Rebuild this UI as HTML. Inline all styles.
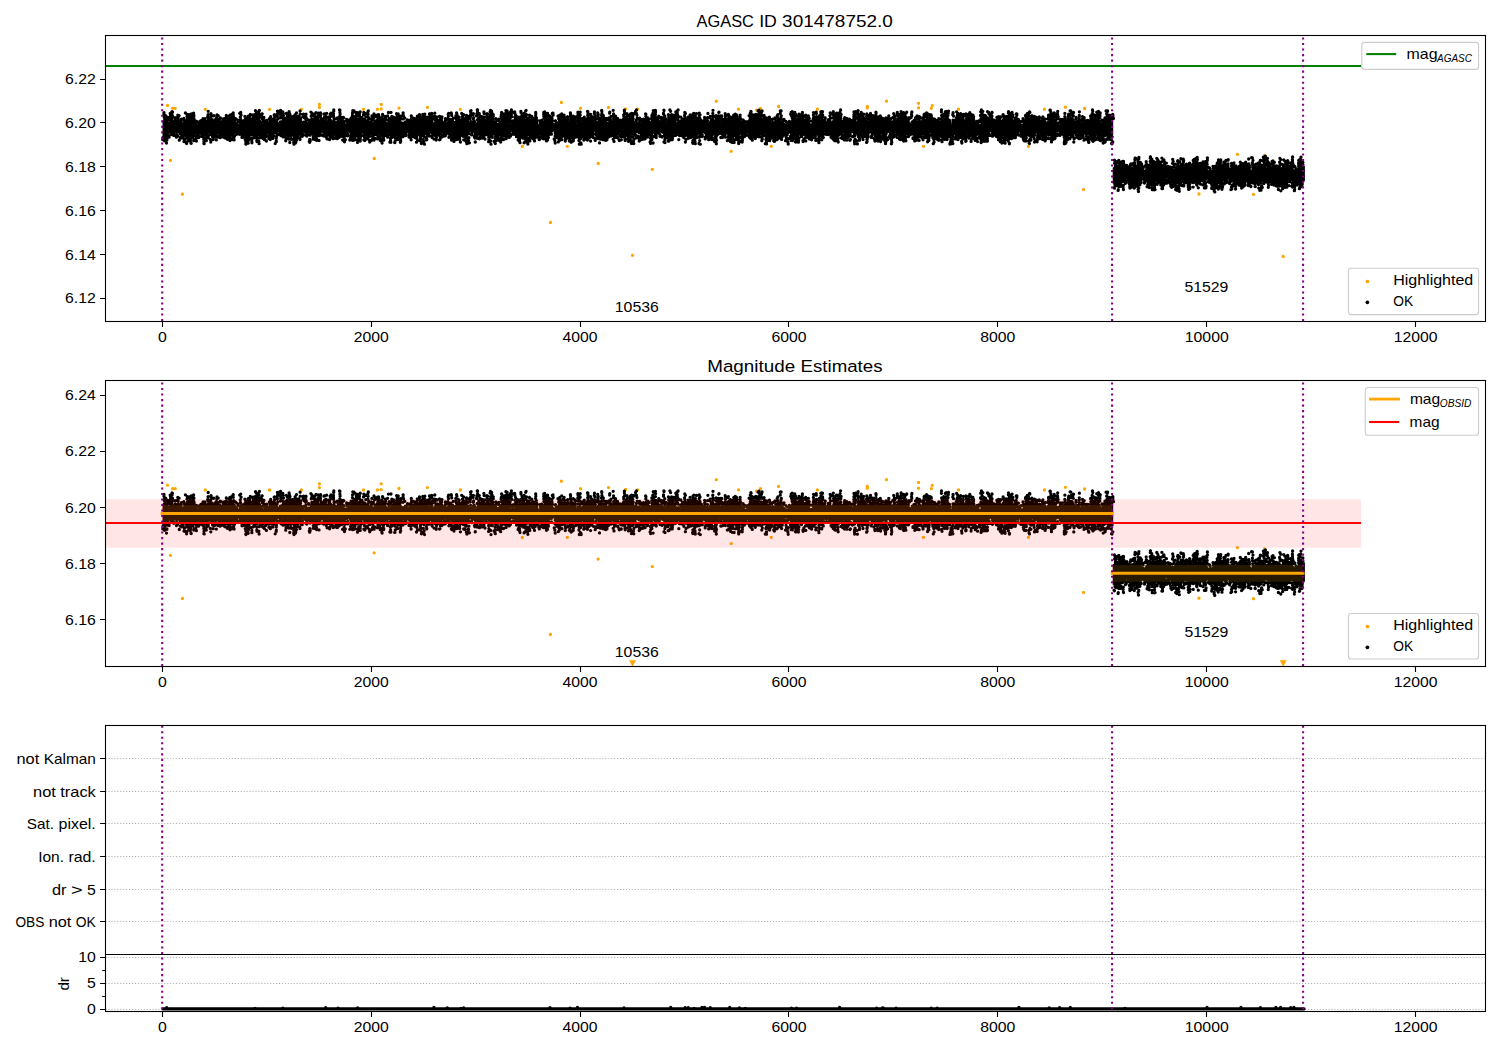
<!DOCTYPE html>
<html><head><meta charset="utf-8"><title>AGASC ID 301478752.0</title>
<style>html,body{margin:0;padding:0;background:#fff}svg{display:block}svg,svg text{font-family:"Liberation Sans",sans-serif}</style></head>
<body>
<svg width="1500" height="1050" viewBox="0 0 1500 1050" font-family="Liberation Sans, sans-serif" font-size="14.5" fill="#000">
<rect width="1500" height="1050" fill="#fff"/>
<defs>
<clipPath id="c0"><rect x="105.5" y="35.5" width="1380.0" height="286.0"/></clipPath>
<clipPath id="c1"><rect x="105.5" y="380.5" width="1380.0" height="286.0"/></clipPath>
<clipPath id="c2"><rect x="105.5" y="725.5" width="1380.0" height="286.0"/></clipPath>
</defs>
<g clip-path="url(#c0)">
<path d="M105.5 66H1361" stroke="#008000" stroke-width="2.08" fill="none"/>
<path d="M167.5 105.5h0m5.1 2.8h0m2.6 0h0m30.1 1h0m64.2 0h0m31.9 0h0m18-4.9h0m0 3h0m44.1 1.9h0m14 0h0m3.7-4.9h0m0 4.6h0m17.8-.9h0m28.4-.7h0m32.9 1.9h0m-289.8 51.1h0m11.9 33.8h0m191.8-35.7h0m187.2-56.1h0m19.2 5.9h0m27.9-.9h0m17.1 1.4h0m11.9 .4h0m78.8-8h0m22.2 8h0m18.1 .9h0m3.9-1.8h0m18-1.8h0m-256.2 40h0m45-.2h0m30.9 17.1h0m54.1 5.9h0m78.9-18h0m40-5h0m-220.8 76.1h0m82.1 32.9h0m184.9-146.1h0m49.9-2.7h0m0 1.4h0m19.2-6.7h0m32 2.1h0m0 4.6h0m13.7-2.3h0m-.9 2.7h0m27.2 .9h0m85.9 0h0m21-2h0m19.2 1.3h0m-161.1 37.8h0m104.9 0h0m55.1 43.2h0m153.9-35.1h0m27 1h0m-65.4 38.6h0m54.4 .4h0m29.8 62h0" stroke="#ffa500" stroke-width="3.3" stroke-linecap="round" fill="none"/>
<path d="M162.5 120.3 164 118.5 165.5 118.3 167 119.9 168.5 121.4 170 121.5 171.5 120.9 173 120.8 174.5 121.3 176 121.4 177.5 120.6 179 120.2 180.5 120.9 182 122.2 183.5 122 185 120 186.5 117.5 188 117.2 189.5 117.2 191 117.2 192.5 117.2 194 118.7 195.5 121.9 197 124.2 198.5 124.2 200 124.2 201.5 122.7 203 121.8 204.5 121.2 206 120.1 207.5 118.8 209 118.7 210.5 119.8 212 120.5 213.5 119.7 215 118.2 216.5 117.7 218 118.9 219.5 120.4 221 121 222.5 121.2 224 121.7 225.5 122.3 227 121.6 228.5 119.3 230 117.2 231.5 117.2 233 118.3 234.5 120.3 236 121.7 237.5 122.8 239 124.2 240.5 124.2 242 124.2 243.5 121.7 245 119.3 246.5 118.5 248 118.9 249.5 118.8 251 118 252.5 117.6 254 118.1 255.5 118.7 257 118.5 258.5 118 260 118.8 261.5 121.3 263 123.8 264.5 124.2 266 124 267.5 122.8 269 121.9 270.5 120.5 272 118.4 273.5 117.2 275 117.3 276.5 119.7 278 122 279.5 122.6 281 122.1 282.5 121.7 284 121.4 285.5 120.5 287 118.7 288.5 117.5 290 117.9 291.5 119.3 293 120 294.5 119.2 296 118.3 297.5 118.6 299 119.8 300.5 120.9 302 121.5 303.5 122.6 305 124.2 306.5 124.2 308 124.2 309.5 122.3 311 119.3 312.5 117.7 314 117.2 315.5 117.2 317 117.2 318.5 117.6 320 120 321.5 122 323 122 324.5 120.7 326 119.9 327.5 120.3 329 120.9 330.5 120.6 332 120.2 333.5 120.6 335 121.5 336.5 121.4 338 120 339.5 118.5 341 118.8 342.5 120.7 344 122.5 345.5 123.2 347 123.2 348.5 123.3 350 122.9 351.5 120.9 353 117.6 354.5 117.2 356 117.2 357.5 117.2 359 118 360.5 119 362 120.2 363.5 122 365 123.3 366.5 123 368 121.6 369.5 121.1 371 122 372.5 123.1 374 122.8 375.5 121.3 377 120 378.5 119.4 380 118.8 381.5 117.6 383 117.2 384.5 118.1 386 120.8 387.5 123 389 123.2 390.5 121.9 392 120.7 393.5 119.8 395 118.6 396.5 117.2 398 117.2 399.5 117.7 401 120.4 402.5 122.4 404 122.7 405.5 122.3 407 122.5 408.5 123.1 410 122.7 411.5 121.6 413 121 414.5 121.5 416 121.9 417.5 120.6 419 118 420.5 117.2 422 117.2 423.5 117.2 425 117.5 426.5 118.6 428 120.6 429.5 123.4 431 124.2 432.5 124.2 434 121.8 435.5 119.9 437 119.5 438.5 119.5 440 119.2 441.5 119.2 443 120.3 444.5 122 446 122.7 447.5 121.6 449 120.1 450.5 119.8 452 120.7 453.5 121.3 455 120.8 456.5 120 458 119.8 459.5 119.6 461 118.3 462.5 117.2 464 117.2 465.5 117.2 467 119.7 468.5 122.3 470 123.7 471.5 124.2 473 124.2 474.5 124.2 476 123.1 477.5 120.1 479 118.2 480.5 118.3 482 119.3 483.5 119.5 485 118.9 486.5 118.8 488 119.5 489.5 119.9 491 119.3 492.5 118.7 494 119.5 495.5 121.5 497 122.9 498.5 122.4 500 120.8 501.5 119.6 503 119.1 504.5 118.6 506 117.9 507.5 118.1 509 120.3 510.5 123.5 512 124.2 513.5 124.2 515 123.3 516.5 122 518 120.9 519.5 119.2 521 117.2 522.5 117.2 524 117.3 525.5 118.9 527 119.3 528.5 118.5 530 118.1 531.5 119 533 120.6 534.5 121.6 536 122 537.5 123 539 124.2 540.5 124.2 542 122.9 543.5 119.9 545 117.8 546.5 117.6 548 118.2 549.5 118.7 551 119.5 552.5 121.2 554 123.1 555.5 123.6 557 121.9 558.5 119.5 560 118.2 561.5 118.4 563 118.6 564.5 118.3 566 118.2 567.5 119.2 569 120.5 570.5 120.8 572 119.9 573.5 119.7 575 121.1 576.5 123.4 578 124.2 579.5 124.2 581 123.6 582.5 122.8 584 121.5 585.5 118.8 587 117.2 588.5 117.2 590 117.2 591.5 118.3 593 119.9 594.5 120.6 596 121.4 597.5 122.3 599 122.4 600.5 121 602 119.4 603.5 119.3 605 120.6 606.5 121.7 608 121.4 609.5 120.4 611 120 612.5 120.3 614 120.5 615.5 120 617 120.1 618.5 121.6 620 123.6 621.5 124.2 623 122.5 624.5 119.9 626 118 627.5 117.2 629 117.2 630.5 117.2 632 117.2 633.5 118.6 635 121.8 636.5 123.4 638 123.1 639.5 122.5 641 122.6 642.5 122.8 644 122.2 645.5 121 647 120.7 648.5 121.4 650 121.6 651.5 120.1 653 117.9 654.5 117.2 656 117.6 657.5 119 659 119.9 660.5 120.6 662 121.9 663.5 123.2 665 122.9 666.5 120.6 668 117.8 669.5 117.2 671 117.3 672.5 118.5 674 119.3 675.5 120.5 677 122.5 678.5 124.2 680 124.2 681.5 122.8 683 121.2 684.5 121 686 121.6 687.5 121.4 689 120.1 690.5 118.9 692 118.5 693.5 118.2 695 117.2 696.5 117.2 698 117.2 699.5 118.5 701 121.7 702.5 123.5 704 123.8 705.5 123.7 707 123.5 708.5 122.4 710 120.1 711.5 117.9 713 117.6 714.5 119.2 716 121 717.5 121.6 719 121.3 720.5 121.3 722 121.7 723.5 121.4 725 120 726.5 119 728 119.4 729.5 120.6 731 120.8 732.5 119.4 734 117.6 735.5 117.2 737 117.5 738.5 118.1 740 118.6 741.5 120.2 743 123.2 744.5 124.2 746 124.2 747.5 124.2 749 122.4 750.5 120.8 752 119.7 753.5 118.2 755 117.2 756.5 117.2 758 118.9 759.5 120.4 761 120.3 762.5 119.2 764 118.8 765.5 119.7 767 120.7 768.5 120.9 770 120.8 771.5 121.4 773 122.2 774.5 121.8 776 119.9 777.5 117.8 779 117.5 780.5 119 782 120.9 783.5 122.1 785 123 786.5 124.2 788 124.2 789.5 123.7 791 120.6 792.5 117.7 794 117.2 795.5 117.2 797 117.4 798.5 117.4 800 117.9 801.5 119.3 803 120.6 804.5 120.7 806 120 807.5 120.3 809 122.1 810.5 124 812 124.2 813.5 123.4 815 122.1 816.5 121.2 818 120 819.5 117.9 821 117.2 822.5 117.2 824 119.4 825.5 121.8 827 122.6 828.5 122.2 830 121.7 831.5 121.3 833 120.1 834.5 118 836 117.2 837.5 117.2 839 119.1 840.5 120.5 842 120.4 843.5 120.1 845 120.6 846.5 121.7 848 122.2 849.5 122 851 122.3 852.5 123.6 854 124.2 855.5 123.6 857 120.8 858.5 117.9 860 117.2 861.5 117.2 863 117.2 864.5 117.2 866 117.9 867.5 120.9 869 123.2 870.5 123.4 872 122 873.5 120.8 875 120.7 876.5 120.7 878 120.1 879.5 119.6 881 120.2 882.5 121.5 884 121.9 885.5 120.8 887 119.4 888.5 119.4 890 120.7 891.5 121.9 893 122.1 894.5 121.9 896 121.9 897.5 121.7 899 119.9 900.5 117.2 902 117.2 903.5 117.2 905 117.2 906.5 119 908 120.5 909.5 122.1 911 124 912.5 124.2 914 124.2 915.5 122.1 917 120.6 918.5 120.8 920 121.4 921.5 121 923 119.8 924.5 119.1 926 119.1 927.5 118.9 929 118 930.5 117.3 932 118.3 933.5 120.8 935 122.8 936.5 123 938 121.9 939.5 120.8 941 120 942.5 118.8 944 117.2 945.5 117.2 947 118.2 948.5 121.2 950 123.5 951.5 123.9 953 123.4 954.5 123.2 956 123 957.5 121.8 959 120 960.5 118.8 962 119.2 963.5 119.9 965 119.4 966.5 117.7 968 117.2 969.5 117.2 971 117.9 972.5 118.9 974 119.9 975.5 121.7 977 124.2 978.5 124.2 980 124.2 981.5 122 983 119.8 984.5 118.9 986 118.7 987.5 118.4 989 118.6 990.5 120 992 122.1 993.5 123.1 995 122 996.5 120.3 998 119.5 999.5 119.8 1001 120 1002.5 119.4 1004 118.8 1005.5 119.1 1007 119.7 1008.5 119.2 1010 117.7 1011.5 117.2 1013 118.5 1014.5 121.2 1016 123.4 1017.5 124.2 1019 124.2 1020.5 124.2 1022 124.2 1023.5 122.1 1025 118.6 1026.5 117.2 1028 117.2 1029.5 117.8 1031 118.5 1032.5 118.7 1034 119.4 1035.5 120.6 1037 121.2 1038.5 120.4 1040 119.4 1041.5 119.6 1043 121.2 1044.5 122.5 1046 122.1 1047.5 120.8 1049 120 1050.5 119.8 1052 119.4 1053.5 118.6 1055 118.7 1056.5 120.6 1058 123.4 1059.5 124.2 1061 124.2 1062.5 122.5 1064 120.9 1065.5 119.5 1067 117.7 1068.5 117.2 1070 117.2 1071.5 117.2 1073 119.2 1074.5 120.5 1076 120.4 1077.5 120.3 1079 121.2 1080.5 122.2 1082 122.5 1083.5 122.1 1085 122.5 1086.5 123.5 1088 123.7 1089.5 122 1091 119.2 1092.5 117.3 1094 117.2 1095.5 117.9 1097 118.4 1098.5 119.3 1100 121.1 1101.5 123.1 1103 123.7 1104.5 121.9 1106 119.3 1107.5 117.9 1109 117.8 1110.5 118.1 1112 118.1 1113.2 118.4 1113.2 135.1 1112 136.7 1110.5 136.7 1109 136.7 1107.5 136.7 1106 135.7 1104.5 134.6 1103 133.6 1101.5 132.2 1100 131.7 1098.5 131.7 1097 133.6 1095.5 134.9 1094 135.1 1092.5 134.5 1091 134.4 1089.5 134.8 1088 134.9 1086.5 134.6 1085 134.4 1083.5 134.9 1082 135.7 1080.5 135.6 1079 134.5 1077.5 133.3 1076 133.3 1074.5 134.2 1073 135.1 1071.5 135.6 1070 136.2 1068.5 136.7 1067 136.7 1065.5 136.5 1064 134.3 1062.5 132.2 1061 131.7 1059.5 131.7 1058 131.8 1056.5 132.2 1055 133.2 1053.5 134.8 1052 135.9 1050.5 135.8 1049 135.1 1047.5 135 1046 135.8 1044.5 136.6 1043 136.5 1041.5 135.9 1040 135.4 1038.5 135.1 1037 134.3 1035.5 132.9 1034 131.7 1032.5 132.2 1031 134 1029.5 135.5 1028 136 1026.5 135.9 1025 135.8 1023.5 135.5 1022 134.4 1020.5 132.6 1019 131.7 1017.5 132 1016 133.7 1014.5 134.8 1013 135.1 1011.5 135.3 1010 135.9 1008.5 136.4 1007 136.2 1005.5 135.6 1004 135.4 1002.5 136.1 1001 136.6 999.5 135.9 998 134.2 996.5 132.6 995 131.8 993.5 131.7 992 131.7 990.5 131.7 989 133.2 987.5 135.5 986 136.7 984.5 136.7 983 136.1 981.5 135.3 980 135 978.5 134.5 977 133.7 975.5 133.4 974 134.2 972.5 135.5 971 135.9 969.5 135.3 968 134.5 966.5 134.5 965 135 963.5 135.3 962 135 960.5 134.8 959 135.1 957.5 135.2 956 134.1 954.5 132 953 131.7 951.5 131.7 950 132.6 948.5 134 947 135.1 945.5 136.4 944 136.7 942.5 136.7 941 136.7 939.5 135.6 938 134.4 936.5 134.2 935 134.4 933.5 134 932 133.6 930.5 133.6 929 134.2 927.5 134.2 926 133.5 924.5 132.8 923 133.4 921.5 134.9 920 136 918.5 136 917 135.4 915.5 135 914 134.6 912.5 133.7 911 132.4 909.5 132 908 133.4 906.5 135.5 905 136.7 903.5 136.7 902 136.7 900.5 136.7 899 136.4 897.5 135.1 896 133.4 894.5 132.4 893 132.9 891.5 133.6 890 133.6 888.5 132.8 887 132.5 885.5 133.1 884 133.8 882.5 134.2 881 134.6 879.5 135.7 878 136.7 876.5 136.7 875 136.7 873.5 135.5 872 134.2 870.5 133.6 869 133.2 867.5 132.7 866 133 864.5 134.4 863 136 861.5 136.7 860 136 858.5 134.8 857 134.1 855.5 134 854 133.7 852.5 133 851 132.9 849.5 133.6 848 134.5 846.5 134.4 845 133.6 843.5 133.3 842 134.3 840.5 135.7 839 136.7 837.5 136.7 836 136.7 834.5 136.7 833 136.7 831.5 135.2 830 132.8 828.5 131.7 827 131.7 825.5 132.3 824 133 822.5 133.6 821 134.6 819.5 135.7 818 136 816.5 135.2 815 134.1 813.5 134.1 812 134.9 810.5 135.5 809 135.2 807.5 134.7 806 134.7 804.5 134.8 803 134.5 801.5 133.8 800 133.7 798.5 134.9 797 136.5 795.5 136.7 794 136.7 792.5 135.7 791 134.8 789.5 133.8 788 132.1 786.5 131.7 785 131.7 783.5 132 782 134.1 780.5 135.2 779 135.5 777.5 135.7 776 136.2 774.5 136.5 773 136 771.5 135.3 770 135.4 768.5 136 767 136.2 765.5 135.2 764 133.6 762.5 132.6 761 132.7 759.5 133 758 133.2 756.5 133.7 755 135.1 753.5 136.6 752 136.7 750.5 135.6 749 133.9 747.5 132.9 746 132.7 744.5 132.7 743 132.7 741.5 133.4 740 135 738.5 136.6 737 136.7 735.5 136.2 734 135.6 732.5 135.7 731 136 729.5 135.8 728 135.1 726.5 134.6 725 134.6 723.5 134.1 722 132.6 720.5 131.7 719 131.7 717.5 131.9 716 133.9 714.5 135.1 713 135.9 711.5 136.7 710 136.7 708.5 136.7 707 135.4 705.5 133.7 704 133.1 702.5 133.8 701 134.6 699.5 134.7 698 134.8 696.5 135.3 695 135.8 693.5 135.5 692 134.6 690.5 133.9 689 134.3 687.5 135.2 686 135.4 684.5 134.5 683 133.4 681.5 132.9 680 132.6 678.5 132.1 677 131.7 675.5 132.7 674 135 672.5 136.7 671 136.7 669.5 136.7 668 136.7 666.5 136.5 665 135.6 663.5 134.1 662 132.7 660.5 132.5 659 133.6 657.5 134.4 656 134.2 654.5 133.5 653 133.4 651.5 133.9 650 134.4 648.5 134.4 647 134.5 645.5 135.3 644 136.2 642.5 136.2 641 134.9 639.5 133.3 638 132.7 636.5 133.2 635 133.8 633.5 134.4 632 135.4 630.5 136.7 629 136.7 627.5 136.7 626 136.1 624.5 134.4 623 133.5 621.5 133.1 620 132.6 618.5 132 617 132.3 615.5 133.4 614 134.2 612.5 134 611 133.4 609.5 133.7 608 135 606.5 136.4 605 136.7 603.5 136.7 602 136.7 600.5 136.6 599 135.7 597.5 133.8 596 132 594.5 131.8 593 133.2 591.5 134.6 590 135.2 588.5 135.5 587 135.9 585.5 136.1 584 135.4 582.5 133.7 581 132.4 579.5 132.5 578 133.5 576.5 134.1 575 133.9 573.5 133.9 572 134.4 570.5 135 569 135.1 567.5 134.9 566 135.4 564.5 136.7 563 136.7 561.5 136.7 560 136.3 558.5 134.8 557 133.6 555.5 132.5 554 131.7 552.5 131.7 551 131.7 549.5 133.7 548 135.5 546.5 135.9 545 135.5 543.5 135.3 542 135.4 540.5 135.2 539 134.5 537.5 134 536 134.5 534.5 135.5 533 135.7 531.5 134.9 530 133.9 528.5 133.9 527 134.6 525.5 135.1 524 135.3 522.5 135.6 521 136.4 519.5 136.7 518 135.7 516.5 133.5 515 131.7 513.5 131.7 512 131.7 510.5 132 509 132.8 507.5 134.2 506 136.1 504.5 136.7 503 136.7 501.5 136.1 500 135.4 498.5 135.6 497 135.9 495.5 135.5 494 134.8 492.5 134.5 491 134.5 489.5 134.1 488 132.9 486.5 131.8 485 132.3 483.5 134 482 135.4 480.5 135.9 479 135.8 477.5 135.8 476 135.5 474.5 134.4 473 132.6 471.5 131.7 470 132.2 468.5 134 467 135.4 465.5 135.9 464 136.2 462.5 136.7 461 136.7 459.5 136.3 458 135 456.5 134.4 455 134.7 453.5 135.1 452 134.6 450.5 133.3 449 132.2 447.5 132 446 132.2 444.5 132.1 443 132.5 441.5 134.1 440 136.2 438.5 136.7 437 136.7 435.5 136.5 434 135.5 432.5 134.9 431 134.1 429.5 133.2 428 132.8 426.5 133.8 425 135.3 423.5 136.1 422 135.7 420.5 134.8 419 134.6 417.5 134.8 416 134.7 414.5 134.1 413 133.8 411.5 134.3 410 134.7 408.5 134.1 407 132.6 405.5 131.7 404 132.3 402.5 133.8 401 135 399.5 135.9 398 136.7 396.5 136.7 395 136.7 393.5 136.7 392 135 390.5 133.4 389 132.9 387.5 133 386 132.9 384.5 132.8 383 133.4 381.5 134.5 380 134.9 378.5 134.3 377 133.6 375.5 133.8 374 135 372.5 135.8 371 135.7 369.5 135.3 368 135.1 366.5 134.9 365 134.2 363.5 133 362 132.6 360.5 133.8 359 135.7 357.5 136.7 356 136.7 354.5 136.7 353 136.5 351.5 135.8 350 134.1 348.5 132 347 131.7 345.5 131.7 344 133.1 342.5 133.6 341 133.6 339.5 133.8 338 134.6 336.5 135.3 335 135.3 333.5 135.2 332 135.9 330.5 136.7 329 136.7 327.5 136.7 326 135 324.5 133.7 323 133.1 321.5 132.8 320 132.4 318.5 132.7 317 134.2 315.5 136 314 136.7 312.5 136.1 311 134.8 309.5 134 308 133.7 306.5 133.2 305 132.5 303.5 132.6 302 133.8 300.5 135.2 299 135.5 297.5 135 296 134.6 294.5 135.2 293 136.2 291.5 136.6 290 136.4 288.5 136.4 287 136.5 285.5 136 284 134.2 282.5 131.7 281 131.7 279.5 131.7 278 132.1 276.5 133.2 275 134.1 273.5 135.4 272 136.6 270.5 136.7 269 135.9 267.5 134.5 266 134 264.5 134.5 263 135 261.5 134.8 260 134.6 258.5 134.9 257 135.3 255.5 135.1 254 134.2 252.5 133.8 251 134.6 249.5 135.9 248 136.4 246.5 135.8 245 134.8 243.5 134.1 242 133.3 240.5 131.8 239 131.7 237.5 131.7 236 132.7 234.5 135 233 136.4 231.5 136.7 230 136.7 228.5 136.7 227 136.7 225.5 135.8 224 134.5 222.5 134.2 221 134.8 219.5 135.1 218 134.5 216.5 133.3 215 132.7 213.5 133 212 133.3 210.5 133.4 209 133.8 207.5 135.1 206 136.5 204.5 136.7 203 135.7 201.5 134 200 133.1 198.5 132.9 197 132.9 195.5 133 194 133.9 192.5 135.6 191 136.7 189.5 136.7 188 136.7 186.5 135.7 185 135.2 183.5 135.1 182 134.5 180.5 133.6 179 133.2 177.5 133.6 176 133.7 174.5 132.9 173 131.7 171.5 131.7 170 133.1 168.5 134.8 167 135.9 165.5 136.5 164 136.7 162.5 136.7zM1112.7 167.5 1114.2 167.1 1115.7 165.8 1117.2 164.8 1118.7 164.8 1120.2 164.8 1121.7 164.3 1123.2 164 1124.7 165.2 1126.2 167.8 1127.7 169.9 1129.2 170.1 1130.7 168.9 1132.2 167.7 1133.7 166.9 1135.2 165.9 1136.7 164.6 1138.2 164.1 1139.7 165.5 1141.2 168.1 1142.7 169.9 1144.2 169.9 1145.7 169.1 1147.2 168.6 1148.7 168.4 1150.2 167.5 1151.7 166 1153.2 165.1 1154.7 165.5 1156.2 166.3 1157.7 165.9 1159.2 164.4 1160.7 164 1162.2 164 1163.7 165.2 1165.2 166.5 1166.7 167.6 1168.2 169.3 1169.7 170.5 1171.2 170.5 1172.7 170.5 1174.2 168.3 1175.7 166 1177.2 165.1 1178.7 165.1 1180.2 164.9 1181.7 164.9 1183.2 166.1 1184.7 167.8 1186.2 168.6 1187.7 167.7 1189.2 166.2 1190.7 165.7 1192.2 166.4 1193.7 167 1195.2 166.7 1196.7 166.2 1198.2 166.4 1199.7 166.8 1201.2 166.4 1202.7 165 1204.2 164.4 1205.7 165.7 1207.2 168.3 1208.7 170.3 1210.2 170.5 1211.7 170.5 1213.2 170.5 1214.7 169.8 1216.2 167.5 1217.7 164.4 1219.2 164 1220.7 164 1222.2 164.2 1223.7 165.2 1225.2 165.5 1226.7 166 1228.2 167.1 1229.7 167.9 1231.2 167.5 1232.7 166.7 1234.2 167.1 1235.7 168.7 1237.2 169.8 1238.7 169.3 1240.2 167.7 1241.7 166.5 1243.2 166.1 1244.7 165.7 1246.2 165.1 1247.7 165.1 1249.2 166.8 1250.7 169.3 1252.2 170.5 1253.7 169.9 1255.2 168 1256.7 166.5 1258.2 165.5 1259.7 164.2 1261.2 164 1262.7 164 1264.2 164.3 1265.7 166.6 1267.2 167.8 1268.7 167.6 1270.2 167.4 1271.7 168.1 1273.2 169.1 1274.7 169.4 1276.2 169.1 1277.7 169.1 1279.2 169.7 1280.7 169.6 1282.2 167.7 1283.7 164.9 1285.2 164 1286.7 164 1288.2 164 1289.7 164.9 1291.2 165.9 1292.7 167.6 1294.2 169.5 1295.7 170 1297.2 168.5 1298.7 166.2 1300.2 165 1301.7 165.2 1303.2 165.8 1304.9 165.9 1304.9 181 1303.2 182.2 1301.7 183.8 1300.2 184.5 1298.7 183.5 1297.2 181.3 1295.7 179.6 1294.2 179.1 1292.7 179.3 1291.2 179.4 1289.7 180.1 1288.2 182 1286.7 184.2 1285.2 184.5 1283.7 184.5 1282.2 183.7 1280.7 183.3 1279.2 183.5 1277.7 183.3 1276.2 182.4 1274.7 181.6 1273.2 181.5 1271.7 181.5 1270.2 180.4 1268.7 178.5 1267.2 178.5 1265.7 178.5 1264.2 180.9 1262.7 182.6 1261.2 183.4 1259.7 184.1 1258.2 184.5 1256.7 184.5 1255.2 183.2 1253.7 180.9 1252.2 179.6 1250.7 180.2 1249.2 181.5 1247.7 182.3 1246.2 182.6 1244.7 183.1 1243.2 183.9 1241.7 184 1240.2 182.8 1238.7 181.4 1237.2 181.2 1235.7 181.9 1234.2 182.4 1232.7 181.7 1231.2 180.4 1229.7 179.7 1228.2 179.7 1226.7 179.5 1225.2 179 1223.7 179.6 1222.2 181.9 1220.7 184.5 1219.2 184.5 1217.7 184.5 1216.2 184.5 1214.7 184.2 1213.2 183.2 1211.7 181.6 1210.2 179.7 1208.7 179 1207.2 180.1 1205.7 181.7 1204.2 182.2 1202.7 181.6 1201.2 181.1 1199.7 181.5 1198.2 182 1196.7 181.8 1195.2 181.4 1193.7 181.9 1192.2 183 1190.7 183.5 1189.2 182.5 1187.7 180.7 1186.2 179.7 1184.7 180.2 1183.2 181.2 1181.7 182 1180.2 182.9 1178.7 184.5 1177.2 184.5 1175.7 184.5 1174.2 184.5 1172.7 182.1 1171.2 180.4 1169.7 179.8 1168.2 179.3 1166.7 178.6 1165.2 178.8 1163.7 180.2 1162.2 181.7 1160.7 182.1 1159.2 181.4 1157.7 181.1 1156.2 182.1 1154.7 183.6 1153.2 184.4 1151.7 184.2 1150.2 184 1148.7 183.9 1147.2 183.4 1145.7 181.7 1144.2 179.5 1142.7 178.7 1141.2 180.1 1139.7 182 1138.2 183.1 1136.7 183.4 1135.2 183.8 1133.7 184 1132.2 183.3 1130.7 181.3 1129.2 179.1 1127.7 178.5 1126.2 179.6 1124.7 180.8 1123.2 181.1 1121.7 181.2 1120.2 181.8 1118.7 182.8 1117.2 183.2 1115.7 182.9 1114.2 182.8 1112.7 183.9z" fill="#000"/>
<path d="M162.8 139.7h0m.4-2.4h0m.5 2.5h0m.2-25.9h0m.1-1.2h0m.3 4.7h0m.2 23.4h0m0-25.3h0m.3 23.4h0m.2-1.6h0m.2-19.4h0m.4-2.2h0m.2 .1h0m.7 27.2h0m.4-2.9h0m0-.4h0m.6-2.9h0m.2-17h0m.1-1.4h0m.1-1h0m.4 17.3h0m.7 1.3h0m.1 1.2h0m.5-19.5h0m.6-4.4h0m0 6.5h0m.1-6h0m.1 7.4h0m.1-5.6h0m1 15.9h0m0 1.9h0m.3 1.1h0m.1-15.5h0m.1-5.5h0m0-1.9h0m0 8.9h0m.4-3.2h0m.1-1.5h0m0-3.9h0m.9 20.6h0m.4 2.9h0m.4-.8h0m.4-13h0m.4-4h0m.3 2.5h0m1.1 17.1h0m.2-2.6h0m.6-13.2h0m.1-3.9h0m.3 18.5h0m.2-20.9h0m.4 2.9h0m.1 2.1h0m.8-4.5h0m.2 24.6h0m.7-6.4h0m.1 3.8h0m1.2-16.7h0m.1-1.7h0m.2 15.9h0m0-1.7h0m.2 4.7h0m0-1.2h0m1.5 .7h0m.5-2.3h0m.1-16.2h0m0-.7h0m.1 23.1h0m.4-2.1h0m.2-18.5h0m.2 20.7h0m.6-28.6h0m1.2 23.6h0m0-2h0m0 3.6h0m0 5.4h0m.3-1.6h0m.1-25.6h0m.4-1.9h0m.6 22.2h0m.7 3.9h0m.2-1.8h0m.5-24.2h0m0 1.1h0m.4 2.4h0m.6 23.1h0m.2-1.6h0m.3-24.2h0m.1 22.3h0m0 5.6h0m0-7.3h0m.1-18.3h0m.1 25.6h0m.1-29.4h0m1.1 1.2h0m.5-.7h0m0 23.1h0m.2-20h0m.5-4.4h0m0 20.8h0m.1 6.8h0m.1-22.7h0m.1-2.5h0m0 .2h0m0 20.1h0m.1 4h0m.2-20.3h0m1.7 20.9h0m.1-1.7h0m.1-17.2h0m0 10.7h0m.1-8.6h0m.1 12.9h0m.1 4.6h0m.2-19.7h0m.1 12.7h0m1.6-1h0m0 1.2h0m.3 1.8h0m.1 1.4h0m.2-14.8h0m.6-1.1h0m.4 2.9h0m.6-1.6h0m.4-2.3h0m.4 .8h0m0 12.1h0m.3 2.9h0m.1-.6h0m1.1-16.2h0m.3-1h0m.4 16.7h0m0 2.1h0m.3 2h0m.1 4.1h0m.1-1.9h0m.1-20.1h0m.1 22.2h0m.3-21.7h0m.4-2.2h0m.1-1.2h0m1.1 20.2h0m.2 1.9h0m.4-3.8h0m.5-3h0m.5-17.2h0m.3 .9h0m.1-3h0m.1-3.3h0m0 26.3h0m.1-1.7h0m2-17.6h0m0 21.1h0m.3-18.7h0m0 13.9h0m.2 7.4h0m.1-25.3h0m.1-3h0m.1 .8h0m.3 18.3h0m.4 .4h0m.5-13.6h0m.3 17.1h0m.1-1.4h0m.4 4.3h0m.4-23.8h0m.3-.1h0m.3 17.1h0m.1 1.6h0m.1 1.2h0m.1 1.6h0m1.6-18.5h0m.2 13.8h0m.1 2.4h0m0 5h0m.2-3.4h0m.4-20h0m.1-1.7h0m.4 21.1h0m.6 1.2h0m0-18h0m.2-3.5h0m1.6 3.2h0m.2 15.7h0m.1 3.2h0m.1-16.2h0m.2-3.5h0m.2 17.9h0m2 .9h0m.1-2.1h0m.1-13h0m.2-2.9h0m.1 .9h0m1.4 2.3h0m.2 15.8h0m.1-2.1h0m0-15.5h0m.2-1.8h0m.7 19.8h0m.4-20.1h0m.2-2.6h0m.2 .5h0m.2 2.9h0m.7 2.2h0m0 18.2h0m.4-20.7h0m0 17.4h0m.3 1.7h0m1.3-21.6h0m0 19.8h0m.1-17.9h0m.1 21h0m.3-23.8h0m.1 25.3h0m.1-3h0m.4-21.5h0m.7 1.7h0m.5-3.2h0m1.1 25.1h0m0-1h0m.3-2.8h0m0-22.6h0m.1-.3h0m.1 2.1h0m.1 3.9h0m.2 19h0m.1-20.4h0m.3 22h0m.1 .4h0m.4-3.7h0m.1-14.7h0m.4-3.1h0m.9 .5h0m.7 15.4h0m0-3.2h0m.2 1.6h0m.9-12.6h0m.2 1.8h0m1.6 12.4h0m0-.6h0m.2-20.4h0m.3 18.4h0m.2-10.2h0m.1-4.6h0m.2 2.2h0m0 4.5h0m.2-11.1h0m.4 2.5h0m.4 17h0m.5 5.4h0m0-14.4h0m.1 13.2h0m.1-2.2h0m.1-9.3h0m.4-3.7h0m.9 13.7h0m.1 2.3h0m1.1-17.1h0m.1-3.5h0m.3 23.1h0m.5-21.6h0m0 19.4h0m.1 4.2h0m0 2.4h0m.1 .3h0m0-2.9h0m.1-6h0m.9 1.9h0m.2 3.9h0m.5-2.5h0m.3 3.8h0m.1-22.7h0m.2-3.6h0m0 27.1h0m.1-2.6h0m.2-1h0m0-21.8h0m.1 22h0m.4-2.3h0m0-1.9h0m.8-18.5h0m.3 1.5h0m.1-3.5h0m.1-.8h0m.9 20.8h0m.2 3.6h0m.4 2.3h0m.1 1.8h0m1-27.8h0m.3 1h0m0 22.1h0m.1-4.2h0m.1-16h0m.6 18.7h0m.6 .9h0m.1-1.2h0m0-18.7h0m.1 16.4h0m.3-19.5h0m.3 1.3h0m.1-5.1h0m.2 9.2h0m.5-8.2h0m.6 29h0m.1-2.2h0m.1-24.9h0m0 28h0m.1-26.5h0m0 4h0m0 16.8h0m.1-18.8h0m.1 17.8h0m.4-22.8h0m.9 6.4h0m.2 23h0m0-28.5h0m.3 25h0m0 5.7h0m0-9.3h0m.2-23.8h0m.1 4.4h0m0-4.6h0m.3 6.6h0m.8 19.3h0m0-1.7h0m.5 3h0m.4-21.5h0m.4 1.9h0m.2-4h0m.2 2.8h0m0-3h0m.3 5.4h0m.2 2.6h0m0 14h0m.4-1.1h0m0 3.8h0m.3-.4h0m.1-19.7h0m.4-.9h0m.3 3.1h0m.2 4.3h0m0 14.6h0m.1-16.8h0m1.1 12.4h0m.1 2h0m.2-.2h0m.2-3.9h0m.3 8h0m.2-20.6h0m.2 1.7h0m.3 1.2h0m1.4 12.5h0m.4 2.7h0m.4-19.7h0m.1 19.3h0m.3-19.7h0m0 4h0m.2-2.1h0m.4 19.3h0m.4-23h0m.4 1.7h0m.1 17.1h0m.2 2.7h0m.6-18.1h0m.8 18.1h0m.1 .3h0m.9-2.4h0m.4-21.1h0m.4-.3h0m.1 2.3h0m.5 26.7h0m1-1.9h0m.1-.9h0m0-2.6h0m.1-1.3h0m.2-3.6h0m.4 1.8h0m0-14.7h0m.3-5.9h0m.1 1.7h0m0-5.1h0m.2 2.2h0m.1 5.4h0m.1-7.3h0m1.2 22.6h0m0 .6h0m.7-3.1h0m.4-20.9h0m.3 2.1h0m0 5.2h0m0 4h0m.1-7.9h0m.1-3.7h0m.1 5.4h0m.4 18.7h0m0 1.3h0m.1-3.5h0m1.1-14.5h0m.2 3.7h0m.3-9.4h0m.3 21.4h0m0 3.5h0m.1-23.4h0m.2 22.1h0m0-15.7h0m.1-4.3h0m.7 3h0m1.1 2.1h0m.1-2.3h0m.2 18.2h0m.1 4.2h0m.3-2h0m.4-25.4h0m0 5.5h0m.6-1.5h0m.3-2.5h0m.6 22h0m.8 2.1h0m.4-27.3h0m.3 1.4h0m.1 3.2h0m.1 2.3h0m.2 23.9h0m.2-28.1h0m.8 21.8h0m.1 2.4h0m.3 .7h0m.3-22.4h0m.7 2.1h0m.4-2.1h0m.8-.4h0m0 22.9h0m.3 3.4h0m0-23h0m.1 21.2h0m.2 3.2h0m.1-8.6h0m.1 1.6h0m0-19h0m1-3.6h0m.3 28.3h0m.2-6.2h0m.1-20.1h0m0 25.7h0m.1-24.1h0m.3 20h0m.2-3.8h0m.1-21.5h0m0 27.4h0m.7-23.9h0m.6 19.3h0m.1 2h0m.3-19h0m.6-2.5h0m1 21.9h0m.2 1.3h0m.1-28.4h0m.1 3.1h0m.2 7.4h0m.1-3.7h0m.1 1.9h0m.4 16.1h0m1.3 .5h0m.1-3h0m.3 1.7h0m.2-20.6h0m.2 2h0m.3 5.8h0m.1-8h0m.5 3.5h0m1.5 .9h0m0 13.8h0m.1 2.8h0m.1-13h0m.1-5.7h0m.1-2h0m0 9.2h0m.1-9.5h0m0 6.8h0m.3-2.9h0m.5 17.9h0m.3-2.4h0m.5 1.2h0m.9-11.3h0m.1-3.5h0m.5 .5h0m.2 20.9h0m.4 .9h0m.1-2.8h0m.3-4.3h0m.1 5.8h0m.3-6.7h0m.4-22.2h0m.3 4.1h0m.4-.9h0m.2 3.6h0m.1-5.7h0m1.3 26h0m.1-2h0m.8-21.1h0m.2 22.4h0m0-24h0m.1-.3h0m.2 22.4h0m.2-22.6h0m.3 25.5h0m0-22.8h0m.2 1.6h0m.7-5.6h0m.5 25.9h0m.1-2.3h0m0 4h0m.5-5.6h0m.7-17.7h0m.2-3.7h0m.1 2.3h0m.3-2.5h0m.1 18.9h0m.4 1.4h0m.1 7.1h0m.1-4.8h0m.9-2.7h0m.3-19.1h0m.2 1.8h0m0 1.8h0m.1-4.5h0m0 8.3h0m.6-1.9h0m.3 15.8h0m.8-15.7h0m.1 2.3h0m.2-1.2h0m1 14.9h0m0 .4h0m.2-15.5h0m.1-6.3h0m.1 4.1h0m0 15.6h0m.5-16.6h0m.1-3.3h0m1.2 6.9h0m.2-2.3h0m0-1.9h0m.1 0h0m.2 20.6h0m.4-1.9h0m0-22h0m.4 25.6h0m1.5-21.7h0m.4 2.5h0m.6 19.9h0m0-21.4h0m.2 20.1h0m.4-24.1h0m.2 21.8h0m.1-15.6h0m0-5.3h0m.5-2h0m.3 3.1h0m1.3 19.1h0m.2 2.1h0m.1-23.6h0m.2 24.9h0m.4-23.6h0m0-1.5h0m.1 3h0m.1-5.4h0m.1-1.2h0m.2 10.8h0m0-1.8h0m.8 15.3h0m0 3.9h0m.1-19.6h0m.3 3.5h0m.7 14.5h0m1.1 2h0m.1-19.8h0m.3-.8h0m.1 20.5h0m.2-1.6h0m.1-2.4h0m.4-13.4h0m.5 13.1h0m.4 3.2h0m.1-1.1h0m.3-26.3h0m.3 6.2h0m.1-3.9h0m0-2.1h0m0 8h0m.2-4.2h0m1 20.7h0m.3-1.9h0m.3 3.5h0m.1-18.8h0m.2 1.9h0m.5 1.8h0m.1 18.9h0m.2-7.6h0m.6-15h0m.2 16.6h0m.2-16.3h0m.1 3.7h0m.1 14.5h0m.1 2.6h0m.4 3.2h0m.6-5.7h0m0-1.7h0m.1-2.3h0m.1 7.6h0m1.4-20.4h0m0 .7h0m.3 2h0m.1 9.4h0m.7 4.4h0m.1-2h0m.5-12.8h0m.7 1.8h0m.2-2.9h0m.5 20.1h0m.4-.2h0m.4-2.1h0m.3-2.2h0m.3-17.5h0m.1 4.2h0m.2-2h0m0-2h0m.9-2.9h0m.1-2.3h0m.3 27.4h0m0-29.7h0m.1 28.5h0m.1-2.5h0m.8-20.1h0m.2-5.6h0m.1 .5h0m.4 24.8h0m.1 3.6h0m.4-2.4h0m.1 2.2h0m.5-22.6h0m.2-4.8h0m.4 1.5h0m0 1.5h0m1.2 20.5h0m.1 6.6h0m.1-26.5h0m.1-3.2h0m.1 2.2h0m.1 24.8h0m0 1.7h0m.9-3.3h0m.7-24.2h0m.2 2.5h0m.3 18.8h0m.1-16.6h0m.1-6.8h0m0 29.2h0m.1-1.8h0m0-1.9h0m.8-3.3h0m.6 1.5h0m.1-16.8h0m.2-1.3h0m.4 14.3h0m.6-10.5h0m0-.4h0m.3 1.6h0m0-3.2h0m.2-4.5h0m.3-2.2h0m.1 27.5h0m.5-2.8h0m.1-2h0m0-1.9h0m.3-13.8h0m0 21.1h0m.4-26.8h0m.1 7.2h0m.2-7.4h0m.3 3.3h0m0 6.3h0m.1 16h0m.8-4.3h0m.6 2.9h0m.2 .9h0m.3-17.2h0m.1-9.4h0m0 4.3h0m.2 3.6h0m0-5.8h0m.2-3.4h0m.4 7.2h0m.3 17.4h0m.3 4.8h0m.4 1.9h0m0-5.8h0m1.3-17.4h0m.2 3.4h0m.1-3.6h0m.1 21.8h0m.1-19.8h0m.4-4.8h0m.7 22.6h0m.2-2.2h0m.5-17.2h0m.2 4.4h0m.5-9.5h0m.1 26h0m.4-23h0m.2 4.1h0m0 17.1h0m.5-3.8h0m0-19.1h0m1.8 4.9h0m.1 12.5h0m.1-16.2h0m.1-1.3h0m0 23.7h0m.2-3.7h0m0-20.3h0m.3 23.7h0m.1-20.1h0m0 18.5h0m.7-22.3h0m.4 1.6h0m.2 1.4h0m.4 19.4h0m.3 1.6h0m0-19.4h0m.3 21.1h0m.4-5.6h0m1 6.3h0m.3 1.5h0m.1-25.2h0m.1 25.7h0m0-8.4h0m.3 4.3h0m0-3h0m.2-21.5h0m.1 .7h0m.4 20.4h0m.1-2.2h0m.3 3.7h0m.2 2.2h0m0 .9h0m1.3-5.5h0m.1-1.8h0m.1 2.5h0m0-15.6h0m.1-3.4h0m.3 1.6h0m1.6 14.5h0m.3 4h0m0 .5h0m.1-21.2h0m.1 19h0m.4-14.6h0m.3-7.7h0m.1 11.2h0m.4-1.8h0m.3-3.5h0m.6 16.1h0m.1 7.7h0m.4-3.9h0m0-6.2h0m.3 8.5h0m.3-3.9h0m0 5.6h0m.1-29.9h0m0 8.1h0m0-2h0m.7 19.1h0m.1-21.1h0m.3 17.9h0m0 1.7h0m1.4-19h0m.1 1.5h0m.3 2.1h0m.8 21.8h0m.1-5h0m.1 5h0m.4-1.9h0m1.3-26.9h0m0 3.7h0m.3 21.1h0m.2-22.7h0m.7 23.7h0m.3-2.7h0m.1-22.9h0m.3 2.1h0m.8 2.5h0m.7 1.2h0m.3 22.6h0m.1-6.6h0m.2 3.3h0m.1-22.9h0m0 2h0m0 23h0m.2-3.8h0m1.3-2h0m.8-16.4h0m0 17.8h0m0-13.6h0m.1-10.1h0m0 1.8h0m.1-1.7h0m.4 3.2h0m.1 17.7h0m.8-2.2h0m.1 3h0m.2-16.7h0m.6 3.9h0m.3 13.5h0m.3-1.8h0m.3-1.9h0m.5-8.6h0m.7-3.2h0m0 .8h0m1.4 14.6h0m.1 1.6h0m.6-16.7h0m.3 .3h0m0 1.9h0m.4 12.6h0m.2-14.1h0m.1 16.5h0m.5 2.3h0m.2-24h0m0 18h0m0-14.4h0m.3-1.6h0m.9 16.6h0m.2 1.9h0m0 .4h0m.3-15.2h0m.5-3.3h0m1.2 .5h0m.1 1h0m.1 14.3h0m0 .7h0m.1-13.3h0m0 16.2h0m.3-.6h0m1.2 5.2h0m.1-5.9h0m.2 2.3h0m.1-3.8h0m.4-18.6h0m0 1.3h0m.1 23.3h0m.1-21h0m.4 1.4h0m1.5-4.3h0m.1-2.3h0m.1 .7h0m.2 20h0m0 4.7h0m.6-2.7h0m.1 3.6h0m.1-1.9h0m.3 .4h0m.5 4.1h0m.2-7.7h0m.3 6.8h0m.5-25.8h0m.4-2.5h0m.1 .5h0m.4 24.5h0m.5 3.6h0m.1-6.5h0m.1 4.9h0m.4-25.3h0m.1 28.2h0m.1-26.2h0m.2-3.8h0m1.5 23.8h0m.4-5.5h0m0 7.3h0m.1-.3h0m0-5.6h0m.4-16.7h0m0 18.9h0m.2-17.7h0m1.1 1.9h0m.3 14.4h0m.3-2.1h0m.1 3.4h0m.3-22h0m.1 4h0m.1-1.7h0m0 8.2h0m.1-1.9h0m0-2.4h0m.2-6.2h0m1.7-.5h0m.1 .3h0m.2 8.1h0m0-6.5h0m0 20.2h0m0-15.9h0m.1 17.8h0m.2-14h0m0-5.5h0m1.7 21.1h0m.7-21.1h0m0-1.5h0m.1-3.3h0m.1 22.4h0m.1-16h0m1.2 20.4h0m.1-.8h0m.2-1.9h0m.2-20h0m0-.4h0m.7 3.2h0m2.1 19.7h0m0-23.5h0m.5 23.2h0m0-22.9h0m.2 1.5h0m.1 19.1h0m.2-17.1h0m1.1 14.7h0m.1-16.2h0m.1 18h0m.1 .5h0m.1-20.3h0m1.5 14.9h0m.4 1.7h0m.1 2.7h0m1.1-13.4h0m.1 13.1h0m.2-14.8h0m0-2.3h0m.1 16.8h0m.2-15.9h0m.5 14.6h0m.5-1.4h0m1.2-14.3h0m.3-4h0m0 5.7h0m.2-4.1h0m.2-2.7h0m.3 23.9h0m.4-3.5h0m.2-1.5h0m.1 4h0m.9-16.8h0m.7-6.6h0m.2 26.7h0m0-26.1h0m.3 23.9h0m0-22h0m0 24.8h0m0-5h0m.3 4h0m.5-18.1h0m.7-2.7h0m0-.2h0m.8 23.2h0m.1-2h0m.3-1.8h0m0-2.3h0m.5 2.4h0m.7-3.4h0m.2-18.4h0m.1 23.2h0m0-21.5h0m.5 1.7h0m.1 16.7h0m.1-23h0m0 26.6h0m.3-25.4h0m.6 23.3h0m.4 1.5h0m.1-4.3h0m.3-18.1h0m.5 2.3h0m.4-1.5h0m.5 21.9h0m0-1.9h0m.2-1.4h0m.5 6h0m1.3-28.6h0m.7 3.1h0m.6-.1h0m.3 19.9h0m.3-21.6h0m.1 25.1h0m1.1 .4h0m.1 .1h0m.7-4.6h0m.1 2h0m.5-19.4h0m.2 24.1h0m0-7h0m0 2.1h0m.1-21.4h0m.1-.7h0m.3 28.3h0m.4-.2h0m.4-21.8h0m.2-2.7h0m0 21.1h0m.1-21.3h0m.2 23.2h0m.4-1.8h0m.2-6.4h0m.1 3.9h0m0-21.4h0m.5 26.5h0m.7-24.2h0m.3-1.8h0m.1 6.6h0m.1-12.5h0m0 10.5h0m0-6.5h0m.2-2.2h0m.3-2.1h0m.2 24h0m.5-1.6h0m0 1.9h0m.5-3.5h0m.8-17.4h0m0 1h0m.1 8.1h0m0 2.1h0m.1-6.3h0m.1-5.3h0m.2 4.3h0m0 3.6h0m.7-.1h0m.1 15.7h0m.1-12.2h0m.1-2.6h0m.3 15.8h0m0-2.9h0m.3 6.9h0m.1-.1h0m1.2-26.1h0m.3-2.1h0m.2 22.7h0m0-21.7h0m.2 5h0m0 18.5h0m.1-28.3h0m0 27.7h0m.3-25.5h0m0-2.2h0m1.2 7.7h0m.5-4h0m.2 25.1h0m0-.6h0m.5-22.4h0m.6 20.5h0m.9-.7h0m.1-18.9h0m.6 1.8h0m0 19.7h0m.5-21.3h0m1.1 18h0m0-2.7h0m.1-20.2h0m.1 7.5h0m0 17.3h0m.1-23.2h0m.6 3.5h0m.3 22h0m.9-5h0m.6 .4h0m.1-2.4h0m.4-17.6h0m0-.8h0m.2 1.9h0m.1 2.2h0m.3-3.7h0m.1 5.8h0m.4-.1h0m.2 15.3h0m.3 6.6h0m.1-4.5h0m.2-4.6h0m0 6.9h0m.4-22.3h0m.8-5.5h0m.2 4.8h0m0 1.3h0m.2-7.3h0m0 24.5h0m.1 6h0m0-26.5h0m.1 5.8h0m.2 16.6h0m.1 7.3h0m.6-29.5h0m0-3.5h0m.3 7.4h0m0-1.6h0m.1-3.9h0m.2 22.9h0m.1 1.3h0m.6-18.4h0m0-3h0m.1 17.9h0m.3-19.2h0m0 1.6h0m.7 25.1h0m1 1.5h0m.2-4.2h0m.1 4.9h0m.3-8.5h0m0 1.4h0m0 4.3h0m.1-18.1h0m.2-3.9h0m.4 1.8h0m1.7 17.2h0m0 2.5h0m.2-4.9h0m0-15.3h0m.4 18.9h0m.3-18.1h0m0-1.7h0m1.1 21.9h0m.7 1h0m.4-4.2h0m0-1.7h0m0-19.6h0m.2-1.5h0m.1 24.5h0m.2-27.1h0m.2 6.1h0m.3-5.3h0m1 22.8h0m.1-17.9h0m.1-2.6h0m0-1.4h0m.3 25.4h0m1.1-23h0m.1 1.5h0m.3-4.3h0m.2 1.9h0m.5 21.2h0m.1-26.2h0m.2 28.1h0m.6-20.2h0m.1 16.8h0m.1-22.6h0m.2-1.7h0m0 5.6h0m.4-1.8h0m.2 20.9h0m.1-1.8h0m.3 2.7h0m.1-18.1h0m.2-1.8h0m.6-1.3h0m0-2.3h0m.1 1.8h0m.1 22.5h0m.5-5.3h0m.1-16.5h0m.1 4.9h0m.1 15.6h0m.1-17.4h0m0 3.3h0m.2 12h0m.1 2.2h0m.1-22.8h0m.1-1.5h0m.7 2.5h0m.1-4.5h0m.5 6.8h0m.3 8.7h0m.1-2.5h0m.3-10.7h0m.2 8.8h0m.1 10.1h0m.1 3.2h0m0-.6h0m1.7-12h0m0-9.7h0m.1 12.2h0m.1-10.7h0m0 20.2h0m.1-16.4h0m.1 2.6h0m.2 14.5h0m.3-19.2h0m0 16.7h0m.4-13.1h0m.4 2.2h0m.1 15.7h0m.1-14.1h0m.2-4.5h0m.1 15h0m.3 1.5h0m.4-17.7h0m.4 1.8h0m.1 21.4h0m.3-19h0m.2 15.6h0m.1 2.4h0m.4-4.2h0m.4 4.8h0m.1 1.7h0m0-23.1h0m.3 19.3h0m.1-1.6h0m0 6.7h0m.7-26h0m.2-5.4h0m.1 1.1h0m.9 24.5h0m.2-1.5h0m0-21h0m.3 2.3h0m.1 1.9h0m.4 19.6h0m.9-20.7h0m.3-4.1h0m0 29.4h0m.1-26.7h0m0-2.3h0m.1 23.2h0m.1-1.8h0m.3 7h0m.3-3.3h0m.2-.9h0m0-.4h0m.3-1.7h0m.2-24.8h0m.2 23.3h0m0 7h0m.2-31.1h0m.1 6.6h0m.1 3.3h0m.2-5.5h0m.9 3.7h0m.1 16.8h0m.1 7.5h0m0-2.3h0m.1-2h0m.2 5.6h0m.4-11h0m.7-15.1h0m.4 16h0m0 5.4h0m.1-24.2h0m.3 25.8h0m.3-5.4h0m.2 1.6h0m1.4-20.6h0m.1 0h0m.7 2.1h0m.1 19.9h0m.1-3.1h0m.2 2.3h0m.6-17h0m0-2.2h0m.3 20.6h0m.3-19.7h0m.4 21.5h0m.1-5h0m.4-13.4h0m.2 15.4h0m.4-22.1h0m.1 21.2h0m0-24.6h0m.1 1.7h0m.3 21h0m.3-14.8h0m0-2.7h0m.1 18.9h0m.2-15.9h0m.1-.8h0m0 2.7h0m1.8 14.6h0m.2 1.5h0m.1-4.4h0m.4 5.5h0m.5-18.9h0m.2 3.8h0m.5-2h0m.6 14.5h0m0 1h0m.5-2.9h0m0-14.8h0m0 1.1h0m.5 1.6h0m.7 12h0m.6 3.7h0m.3-24.6h0m.1-1.8h0m0 3.7h0m.1 2.2h0m.2 18.6h0m.6-24.9h0m.3 26.8h0m.5-3.4h0m.3-20.3h0m.1 22.4h0m.2-23.2h0m.4 26.6h0m0-23.9h0m.5 18.7h0m.2 2.1h0m0 1.8h0m.3 .5h0m.1-21.4h0m0-5.4h0m.6 3.8h0m0 19.8h0m.2 .7h0m.1-22.2h0m.5 19.1h0m.1-16.6h0m.5-1.9h0m0 3.4h0m1.7 12.2h0m.1 2.6h0m.6-17.4h0m0 2h0m.3-5.3h0m.2 7.1h0m.5-7.4h0m.2 1.9h0m1 23.8h0m.6 1.7h0m.3-4.7h0m.1 7.1h0m0-10h0m.2-12.1h0m.1-.1h0m.7 2.1h0m.4 10.9h0m.3 3.8h0m.5-1.5h0m.6-20h0m.3 25.8h0m.3-7.4h0m.1-15.8h0m.2 20.1h0m0-2.5h0m0-19.5h0m.5 23.8h0m.3-2.9h0m.1-22.5h0m.3 1.8h0m.2 2.4h0m.6 19.9h0m.2 .3h0m.3-20.7h0m.3-5h0m.3 25.7h0m.3-3.2h0m.2-19.6h0m1.6-1.6h0m.3 4.1h0m.2-1.9h0m.5 18.3h0m.2 5.4h0m.1-3.4h0m.2 1.4h0m1.7-4h0m.1-18.1h0m0 21.1h0m.3-19.1h0m.1-2.1h0m0 20.8h0m1.5 3.2h0m.5-5.3h0m0 2h0m.1 2h0m.2 1.6h0m.3-28.3h0m0 7.1h0m.1-4.1h0m.1-1.9h0m.3 27.4h0m0-3.5h0m0-19.7h0m.2 24h0m.6-6.6h0m.6 .1h0m.3-19.3h0m.2 24.8h0m.2-21.8h0m0 13.8h0m.2-17.1h0m.1 24.6h0m.1-1.6h0m.1-1.2h0m.8-.3h0m.7-17.6h0m0-3.1h0m0 18h0m.1-13.4h0m.3 11.9h0m.2-15.7h0m.7 18.1h0m0 1.1h0m.2-3.3h0m1.3-10.7h0m0-7.4h0m.1-3.3h0m.1 .9h0m0 7.2h0m0-2.5h0m.2 7.2h0m.7 15.6h0m.1-4.1h0m0-3.7h0m.1 2h0m.1 3.5h0m.1 5.9h0m.1-28.2h0m.3 6.4h0m.2-10h0m.3-.3h0m0 2.9h0m.1 27.6h0m0-24.5h0m.1 2.2h0m.1 18.5h0m.2-15.4h0m.2 19.6h0m.3 1.2h0m.2-9.6h0m.1-2h0m.4 4h0m.8-17.9h0m.1 1.6h0m.1 2.7h0m.9 17h0m.1-4.3h0m0 2.1h0m.4-20.6h0m.1 4.1h0m.1 18.2h0m0-20.5h0m2.3 17.2h0m.1 1.4h0m.4 2h0m.1 .5h0m.1-28.7h0m.2 3.9h0m.2-3.6h0m0 5.6h0m.1-4.1h0m.9 24.8h0m0-1.7h0m1.4 .7h0m0-19.1h0m.3 23.2h0m0-26.6h0m.1 20.5h0m.2-19.3h0m1.1 20.8h0m.3-16.3h0m.4-3.1h0m.1 15.5h0m.4 1.8h0m.2-16.3h0m.1 19.6h0m.8-24.2h0m.2-1.7h0m.1 5.5h0m.2 3.9h0m.1-6.4h0m.3 4.3h0m0 21.3h0m.1-19.7h0m.5 18.5h0m.2-21.3h0m.1 15.4h0m.2-14.9h0m0 16.6h0m.3 2.8h0m0-6.6h0m1.1-18.4h0m.2 3h0m.1 21.6h0m.1-21.8h0m.1 6.5h0m0-7.8h0m.1 3.2h0m.2 21h0m0-3h0m.4-15.6h0m.6 23h0m.2-22.8h0m.4-1.2h0m.3 20.3h0m0-2.4h0m0-14.7h0m.6 17h0m.2-19.5h0m.3-4.2h0m.1 2.5h0m.1-7.4h0m.1 .8h0m.1 2.2h0m1 24h0m0 2h0m.2 .2h0m.1-24.3h0m.1 .2h0m.2 4.7h0m.6-2.4h0m1.4 22.4h0m.1-3.4h0m0-15.3h0m0 16.8h0m.2 1.9h0m.3-20.4h0m.1-1.6h0m.7 21.5h0m.1-.7h0m.2-1.4h0m.5-2.4h0m.9 1.6h0m.1-17.3h0m.1 16.1h0m.1-17.9h0m.2 15.2h0m.5-19.8h0m.2-1.1h0m.7 22h0m0-14.3h0m.1-2.4h0m.3 18.6h0m.1-19.6h0m.9 19.1h0m1.3-25.2h0m0 29h0m.3-23.9h0m.1-1.4h0m.1 4.4h0m0 1.4h0m.2 16.2h0m.1 5.4h0m.1-7.1h0m.4 3.4h0m.9-21.1h0m.1-.5h0m0 20.9h0m.3-4h0m.2-13.9h0m.1 1.1h0m.6 14.4h0m.7 3.1h0m.1-19.4h0m.2 1.1h0m.2 12.6h0m0 1.7h0m0 3.9h0m.5-16.6h0m.6 18.6h0m.3 .9h0m.4-5.3h0m.4-15.1h0m.1 11.7h0m0-10.4h0m.4 1.4h0m.4 13.7h0m.1-1.7h0m.2 5h0m.3-6.9h0m.2-12.5h0m.5 3.3h0m.4-1.8h0m0 14.8h0m.5-2h0m.1 1.7h0m.1-4.2h0m.2-13.4h0m.1-4h0m.1 1.4h0m.4 4h0m.2-10h0m0 1.4h0m.2 1.9h0m.1 23.8h0m.3 1.7h0m.2 1.5h0m.3-5.3h0m.7-17.5h0m.8-4h0m.1 2.1h0m.7 23h0m.4-2.5h0m.3 5h0m.5-.6h0m.8-25.6h0m.1 1.3h0m0 19.8h0m.3 1.8h0m.3 2.2h0m.1-26.4h0m.3 27.1h0m.5 2.5h0m.1-25.5h0m.1-4.5h0m.1 2.6h0m0-2.4h0m1 23.4h0m.1-20.4h0m.4 2.2h0m.2 22.6h0m.2-27.2h0m0-.6h0m.2 21.7h0m0 8.3h0m.1-4.1h0m1.3-5.1h0m.3-23.1h0m.5 24.2h0m0 2.1h0m.1-15.7h0m.3 1h0m0 15h0m0-24.6h0m0 6.6h0m.1-9.9h0m.4 5.1h0m.3 2.9h0m.8 18.1h0m.6 1.6h0m.4-15.2h0m.1 10.2h0m.1-14.3h0m0 22.7h0m.2-1.8h0m.2-19.4h0m.1-1.7h0m.1 22.2h0m.6-3.7h0m.5 2.7h0m.4-18.3h0m0 14h0m.4-15.4h0m.1 19.7h0m.5-2.9h0m.2-13.6h0m.6 16.3h0m0-2.1h0m.1-16.9h0m.2 1.9h0m.1-2.9h0m.5 19.4h0m.4 .2h0m.6-4.5h0m.1 4.5h0m.5-24.9h0m.2 2.3h0m0 19.9h0m0-15.6h0m.1-6h0m.5 4.1h0m.7 .8h0m0 2h0m0 12h0m.4 3.7h0m.3-1.8h0m.1-17.4h0m.8 4.1h0m.1-2.7h0m.1-.2h0m1.2 15.1h0m0 7.9h0m0-7.1h0m.3 2.9h0m.2 5.5h0m.2-3.1h0m.9-7.1h0m.1-15.5h0m.1 18h0m0 3.8h0m0-24.1h0m.1 22.1h0m0-18h0m0-4.1h0m.8-2h0m.3 29.6h0m.2-32.4h0m.3 .2h0m.2 6.3h0m0-2.3h0m.3 21.7h0m.9-3h0m.4-23.2h0m.1 4.2h0m.1-2.4h0m.3 5.2h0m.2 16.6h0m.1-15.8h0m0 19h0m0 .4h0m0-2.4h0m1.8-14.8h0m.5-2.2h0m.3-1.9h0m0-.1h0m.5 17.3h0m.7 1.7h0m0 1.2h0m1-18.3h0m.1 3.5h0m.2-4.2h0m.3 1.8h0m.5 17.9h0m.3-.4h0m.2-4.4h0m.5-12.6h0m.4-6.4h0m0 .9h0m.1 8.3h0m0-4.8h0m.1 6.7h0m.2-14.2h0m.1 31.9h0m0-31.4h0m.3 24.8h0m.5-19.4h0m.1 23.4h0m.1 3.2h0m.3-21.4h0m.2 16.2h0m.1-18.3h0m.4-.1h0m1.8 19h0m.4-1.9h0m0 5h0m.2-26.5h0m.3 2.4h0m.2 24h0m.1-25.8h0m.9-5.3h0m.4 29.8h0m.3-28.4h0m.1 4.5h0m.2 2.4h0m.1 19h0m.4 2.2h0m.2-24.7h0m.3 1.1h0m.3 23.9h0m.2-1.2h0m.1-23.2h0m.4 21.1h0m.3-16.9h0m.1-2.1h0m.4-2.3h0m1.2 17.7h0m.3-12.5h0m.3 15.1h0m.3-23.6h0m.1 4.6h0m.1 17.3h0m.1-21.4h0m0 5.6h0m.1-3.6h0m.6 1.4h0m.2 18.6h0m.1 .3h0m.2-23.8h0m0 20h0m0-17.8h0m.1 6h0m.3-2.3h0m0-1.5h0m.1 17.2h0m.2-12h0m.1-10.4h0m.3 13.1h0m.4 16.5h0m.4-22.8h0m.3 15.5h0m0 3.3h0m.7-2h0m.4-12.7h0m.1 3.8h0m.1-7.6h0m.2 5.1h0m.4 11.1h0m.4 2.4h0m.5 .2h0m.1-15.6h0m.1 1.9h0m.1-3.1h0m.5 16.5h0m.4-2.4h0m.4 4.5h0m.6-22.3h0m.3-3h0m0 7.7h0m0-3.4h0m.1 2h0m.5-5.3h0m0 28.6h0m.1-6.7h0m.5 4.1h0m.9-18h0m.4-2h0m.1-.5h0m.6 .1h0m.1 16.9h0m0-18.7h0m.1 21.1h0m.1-.7h0m.2-3.5h0m.4-13.7h0m1.2-5.4h0m.2 19h0m0 3.7h0m.4-19h0m0-1.5h0m.2 18.5h0m1.2 1.4h0m.4-1.8h0m.1 7.3h0m.1-23.4h0m.2 24.1h0m0-26.3h0m0 23.6h0m.2-26.7h0m.1 1.6h0m.7-2.2h0m.6 4.7h0m.1 21.2h0m.1-1.5h0m.2-2.1h0m.1 7.2h0m0-25.8h0m0 24.3h0m.3 2.4h0m.1-27.6h0m.8 18h0m.3-20.5h0m.1 4.9h0m.1 19.1h0m.1-1.2h0m2.2 7.1h0m.1-27.3h0m.2 21.1h0m0-24.2h0m.3 1.7h0m.1 25.8h0m.1-5.1h0m.1-17.2h0m.1-3.5h0m.2 18.9h0m.1 10.5h0m1-23.8h0m.5 2.7h0m.1-2h0m.2 15.5h0m.1-1.8h0m.1 1.1h0m2.3-12.2h0m0-6.3h0m0 4.4h0m.1-2.3h0m.4 13.1h0m0-12.7h0m.1 17.4h0m0 1.6h0m.2-1.7h0m.9-2.5h0m1-11.9h0m.2-5.1h0m.1 3h0m.3-7.3h0m.1 24h0m0-1.8h0m.7 4.1h0m1.3-.5h0m.1-22.8h0m.1 1.4h0m.3 18.1h0m.2 1.8h0m.6-17.9h0m.4 15.4h0m.2 4.2h0m.1-2h0m.2 2.1h0m.6-26.2h0m.1 2.2h0m.1-5.2h0m.4 6.8h0m1.2 24.3h0m.2-1.8h0m0 1.9h0m.2-3.9h0m.6-1.7h0m.3 2.7h0m.1 3.4h0m.1-26.4h0m0 19.3h0m.1-16.9h0m.1 25.8h0m0-7.3h0m.1-16.1h0m0 2h0m.1 17.8h0m.1-24.1h0m0 16.6h0m1.3 .7h0m0 .9h0m.5-13.2h0m0 11.1h0m.2-16.4h0m.1 1.4h0m.1 1.8h0m0-6.5h0m.2-.3h0m1.5 21.2h0m.2-17.6h0m0 2.2h0m.1 19.5h0m.1-17.6h0m.1 17.7h0m.6-5.6h0m.2-16h0m.2 5.6h0m.2-2.5h0m.4 18.2h0m0-15.8h0m.1-2.3h0m0 15.5h0m.6 1.9h0m1.1-16.1h0m.7 13.4h0m0 2h0m.1-22.2h0m.2 2.8h0m0 20.7h0m.1-18.6h0m0-3.9h0m1.8 26h0m.7-25.4h0m.4 3.4h0m0 18.8h0m0-23.1h0m.2 21.5h0m.1 4.2h0m.2-22.4h0m1.2 2.5h0m.2 20.6h0m0-1.9h0m.1-22.1h0m0 24.8h0m0-6.1h0m.1-14.3h0m.2-3.2h0m.3 19.1h0m1.2 5.3h0m.5-23.1h0m0-1.9h0m.1 20.8h0m.3 1.1h0m.5-3.3h0m.1-20.8h0m.4 27.3h0m1-25.1h0m.2-3.2h0m.4 25.5h0m.2-24.5h0m.5 21.9h0m.1-22.1h0m.3 24h0m.3-22.2h0m1.5 25.5h0m.1-1.7h0m0 3h0m.2-.9h0m0-6.1h0m.4 1.8h0m.8-21.5h0m0-1.8h0m.1 26.5h0m.2-22.9h0m1.4 17.5h0m.1-1.7h0m.1-1.7h0m.2 9.3h0m.2-3.4h0m0 1.6h0m.6-16.7h0m0-3.6h0m.2 1.3h0m.6 15.4h0m.1-2.6h0m.2-1.1h0m.1-8.2h0m.1-2.1h0m.1 14h0m.2-15.4h0m1.6 12.7h0m.1-2h0m.6 3.3h0m.1-10.5h0m.3-3.2h0m0 1.2h0m1.8-7.1h0m0 6.6h0m.3 14.8h0m0-1.5h0m0-1.7h0m.2-17.9h0m.2 4.1h0m.3 17.7h0m.2-19.4h0m0-5.2h0m.2 7.5h0m.3 17.8h0m.1-27.1h0m.1 24.4h0m.1-24h0m0 3.2h0m0 2h0m.3 2.2h0m.2-4.8h0m.7 25.8h0m.7-2.9h0m.1-21.4h0m.1-1.1h0m.7 2.9h0m1 18.1h0m.4 2.7h0m0-1.4h0m.1-19.3h0m.4-3.4h0m.2 1h0m.4 21.2h0m.1-.2h0m.2-2.3h0m.2-16.1h0m.1-3.3h0m0 1.4h0m1.1-5.1h0m.4 25.6h0m0-16.5h0m.1 12.5h0m0-14.5h0m.2-3.7h0m.1 22.4h0m.1-20.3h0m0-6.4h0m0 24h0m.4 2.1h0m.4-23.9h0m.4 21.7h0m.1-1.7h0m.7-18.9h0m.3 5.2h0m.1 18.6h0m.1-21.5h0m0 4.4h0m0-7.6h0m0 20.7h0m.3 7.5h0m.1-25.4h0m.2-4.4h0m.2 28h0m.2-4.1h0m.3-1.2h0m.6-17.6h0m.2 19.9h0m.1-.7h0m.3-15.9h0m.1-4h0m.4 2.2h0m.8 26.2h0m.6-4.3h0m.4-3.4h0m.1-15h0m.1 21h0m0-24.2h0m0 26.1h0m0-5.6h0m.2-19.4h0m.4 18.9h0m.9 1.3h0m.1-2.6h0m.9 3.7h0m.4-23h0m0 3.5h0m.3-2.3h0m0 22.3h0m.2-1.8h0m0-3.5h0m.2 1.9h0m1.2 .9h0m.2-2.5h0m.3 1.7h0m.1-17.4h0m.8-.8h0m0 3.2h0m1 18.3h0m.7 .7h0m.1-4.2h0m.1 1.7h0m.3-21.1h0m.2 .6h0m.6 2.3h0m.5 18.8h0m.3-3h0m.5 3.2h0m.2-23.9h0m.5 1.8h0m.1 19.2h0m.1-22.2h0m.6 23.7h0m.1-2.9h0m1.7-22.1h0m0-2.3h0m.4 26.9h0m0-2.1h0m.3-16.9h0m0-2h0m.1-6h0m.2 4.9h0m.3 23.6h0m.5-4.3h0m.1 1.7h0m.4-4.1h0m.7-12.1h0m.1 14.2h0m0-4h0m.2 2.3h0m.4-13.8h0m.1 15.5h0m1.4 5.9h0m.4-8h0m.1-11.2h0m.1 15.5h0m.1-2.6h0m.4 4.4h0m0-13.2h0m.3-2.9h0m.3 12h0m.1 5.4h0m.3-7.2h0m.3 9.2h0m.3 1.9h0m.1-5.3h0m.5-13.8h0m.6-3.5h0m.1 1.3h0m1 13.8h0m.2-22.3h0m.3 23.8h0m.1 2.4h0m.1-27.9h0m.2 21.5h0m.2-18h0m.6-4.3h0m0 6.6h0m0-1.4h0m.2 23.6h0m.4-3.9h0m0 2.2h0m.1-23.2h0m0-1.2h0m1.9-2.1h0m.1 25.3h0m0-19.5h0m.5-1.9h0m0 25.6h0m.1-27.7h0m.3 25.5h0m0 2.5h0m.5-5.9h0m.5 3.6h0m0-2.1h0m.1-2.1h0m0 4h0m.8-23.8h0m.4 20.6h0m.3 5.5h0m0 .3h0m.1-8.3h0m.1 6.4h0m.3-2.1h0m.1-24h0m.2 4.1h0m1-1.2h0m.3 2h0m.2-3.8h0m.1 .1h0m.1 18h0m.1 1.2h0m.5 1.8h0m.8-23h0m.1-1.1h0m.2 5.8h0m.3-2.4h0m.1 24.9h0m0-20.8h0m.1 21.8h0m.2-7h0m.6 4.3h0m1.2-19.1h0m.4-3.1h0m.1 20.6h0m.1-22.2h0m.1 25.8h0m.3-5.6h0m1.1-17h0m.3-1h0m0 20.1h0m.1-17.1h0m0 13.2h0m.8-17.6h0m0 7.3h0m.1 12.8h0m.4-16.8h0m.3-.8h0m.1 2.9h0m.1 17.6h0m.2-2h0m.3-1.5h0m.8-.5h0m.4 4.1h0m0-1.6h0m.2-16.3h0m.1 3.5h0m.2 15.2h0m.9-4.9h0m.4 1.4h0m.2 .6h0m.2-18.3h0m.1-3.5h0m.1 5.7h0m0-8.2h0m.2 10.1h0m.1 14h0m0-19.6h0m0 20.5h0m.4-2.8h0m0-21.7h0m1.2 22.9h0m.1-2.4h0m.3-14.8h0m0 21.6h0m.2-6.6h0m0-13.4h0m.1 18.6h0m.1-26.9h0m.1 1.3h0m.1 3.2h0m.3 5.4h0m1.8-4.9h0m.2 24.1h0m.1-22.1h0m.1 23.6h0m0-5.7h0m.1 1.8h0m.2-23h0m.1 19.3h0m1.5-23.3h0m.1 5.6h0m0-3.4h0m.1 25.5h0m.2-23.6h0m.3-4.3h0m.1 22.4h0m.2 2.6h0m0 3.2h0m.4-27.5h0m.3-.6h0m.1 3.1h0m.2 21.2h0m.1-19.3h0m.4 20.9h0m.7-3.5h0m.7-12.5h0m.1-1.9h0m.5-1.7h0m1.1 14.1h0m.1 2.3h0m.3-11h0m.2 10.8h0m.9-12.7h0m.5-1.8h0m.1 11.5h0m.3 3.3h0m.9-1.3h0m.2-17.4h0m0 4.2h0m.2 1.6h0m.1-8.8h0m.4 5.1h0m.1-3.8h0m.3 23h0m.8 .8h0m0-2.5h0m.7-21.9h0m.8-1.8h0m0 27.6h0m0-2h0m.2-19.4h0m.1-2.1h0m.5 4.3h0m.5 20.4h0m.3-25.4h0m.1 23.4h0m.2-20.9h0m0 18.8h0m.1 4.4h0m.4-26.9h0m.8-.7h0m.7 23.4h0m.1-20.2h0m.1-2.9h0m.4 27.2h0m.1-2.1h0m.3-21.8h0m0 25.2h0m.1-22.6h0m.3-5.2h0m.7 .7h0m.8-2.8h0m.4 8.3h0m.1-10.5h0m.1 8.6h0m.1-2.4h0m.2 21.7h0m.1-23.4h0m1.3 21h0m.1-.8h0m.1 4.1h0m0-2.6h0m.9 2h0m0-17.2h0m.7-1.8h0m.2 15.8h0m.1 4.8h0m0 .2h0m.2-22.3h0m.3 19.5h0m.2 1.2h0m.3-4.8h0m.6-12.4h0m.1-1.8h0m.5-.9h0m.1 21.3h0m.1 .3h0m.4-5.2h0m0 1.4h0m.1 1.8h0m.5-16.6h0m.1-2.2h0m.2 17.9h0m.1-3.2h0m1.1 1.6h0m.1-16.3h0m.5 16.7h0m0 4.4h0m0-20h0m.2 13.9h0m0-11.4h0m.2 16.8h0m.6-19.3h0m.3 2.6h0m.4-2.3h0m.8 16.1h0m.8-.4h0m.1-12.3h0m.3-3.3h0m.1-4.1h0m.1 1.9h0m0-3.9h0m.1-2.5h0m0-.1h0m.3 22h0m0-11.4h0m.2 18h0m0 1.5h0m.1 1.7h0m.1-8h0m.2-19.8h0m0 17.5h0m.2 5.7h0m.1-15.6h0m.1-1.7h0m0-2.4h0m.2-5.7h0m.1-2.1h0m.1 .7h0m.3 5h0m1 23.5h0m.4 3h0m.2-32h0m.2 22.6h0m.3-23.9h0m.1 4.8h0m0-1.2h0m.1 3.4h0m.1 19.2h0m.1-17.8h0m.7 18.2h0m.3 1.6h0m0 1.4h0m0-4.6h0m1.2-21.1h0m.5 2h0m0-4h0m1 23.5h0m.2 1.1h0m.6 2.4h0m.1-23.9h0m.3 1.8h0m.2-3.2h0m1.2 19h0m.2 3.2h0m.1-1.4h0m1.4-18.7h0m.1 26.1h0m.2-28.5h0m.1 25.4h0m0-5.6h0m0-15.9h0m.1 14.5h0m0 4.1h0m.1-15.3h0m0 20.5h0m0-2.1h0m.2-1.3h0m.6-19.6h0m0-.8h0m.1 16.7h0m.1-1.5h0m.1 3.5h0m0-21.1h0m1.1 6.3h0m.1 1.7h0m.3-5.6h0m.1 .2h0m.3 2.8h0m.4-7.4h0m.1 1.6h0m0 4.2h0m.3 4.2h0m.2-6.8h0m.2 20.8h0m.3-16.2h0m.1 14.6h0m.6-1.7h0m.1-18.4h0m.4 4.3h0m.2 1.3h0m.5-3h0m.1-2.4h0m.4 22.4h0m.8 1.9h0m.2 .9h0m.1-4h0m0-16h0m.2 15.1h0m.4 4.2h0m.2-21.2h0m0-7h0m0 2.8h0m0 1.8h0m.2-3.8h0m.5 27h0m.8-2.3h0m.2 2h0m.3 1.3h0m.4-20.8h0m.1-2.1h0m.2-1.3h0m.1 19.1h0m.8-1.5h0m.7 5.6h0m.1-24.1h0m.1 22.6h0m.2-2.1h0m0 5.1h0m.4-21.5h0m.1-2.3h0m1.5 21.3h0m.3-20.6h0m.1 16.6h0m.1-14.1h0m.2 16.8h0m0-1.1h0m1.6 4.5h0m.1-1.8h0m.5 4.4h0m.1-1h0m0-9.8h0m0-11.4h0m0 13.5h0m.1-15.6h0m.2 17.4h0m.1-19h0m.1 16.1h0m.2 6.6h0m.3-2.6h0m.2-6h0m.9 7.7h0m.7-21.7h0m.3 1.7h0m.1-3.8h0m0 0h0m.6 20.7h0m.7-3.9h0m.1 2.1h0m0-13.8h0m.2 17.1h0m.3-16.1h0m0 14.5h0m.3-17.7h0m.4 25.1h0m.1-4.9h0m.1 1.9h0m.2 1.5h0m.2-5.6h0m.2-3.6h0m.3 2.3h0m.5-18.1h0m.2 4.3h0m.4 15.5h0m.1-23.5h0m.3 19.4h0m0 1.8h0m.2 1.7h0m.2-21.1h0m0 4.7h0m.1-.9h0m.4-2.2h0m.6 4.7h0m1.2 13h0m.2-12.4h0m.3 15.1h0m.1-22.1h0m0-3h0m0 1.2h0m.3 5.4h0m.1 1.7h0m1.5-4.9h0m0-.4h0m.2 3.6h0m0 20.2h0m0-21.8h0m.2-2.6h0m0 22.5h0m.6 2.3h0m.2-.5h0m.7-27.4h0m.1 25.8h0m.1-24.4h0m.2 2.5h0m.4-2h0m.2 4.5h0m.6 18.2h0m.5 4.2h0m.2-2h0m.2-25.8h0m.2 28.4h0m.5-25.1h0m.5-1.4h0m.2 3h0m.1 19.3h0m.1 3.8h0m.2-1.6h0m.5-22.2h0m0 24h0m.2-22.7h0m.1-5.1h0m.5-.8h0m1 24.4h0m.3-2h0m.3-13.6h0m.2 15.5h0m.1-17.5h0m.5-1.3h0m.3 .9h0m.1 14.3h0m.9 1.8h0m.1-.3h0m0-2.2h0m.7-14.7h0m.3-3.1h0m.1 9.1h0m.2-7.8h0m0-3.3h0m.1-.5h0m.4 10h0m.6 12.1h0m.1 4.6h0m0-.6h0m.6-13.4h0m0-1.7h0m.3-1.6h0m.2-.8h0m.7 20.4h0m.1-5.2h0m0 3.2h0m.4-2.1h0m.2-18.9h0m0 2.8h0m.3 1.6h0m.9 16.9h0m.2 .8h0m.1-21.4h0m.1-2.6h0m0 22.1h0m.3-2.6h0m1.1-17.8h0m.2 1.7h0m.4 21h0m.1-19.8h0m0 16.3h0m.2-20.2h0m0 .1h0m1 1.1h0m.4 17.8h0m.2-13.8h0m.1-4h0m.8 19.6h0m.6-3.5h0m.2-15.5h0m.3 21.3h0m.1 0h0m.1-19.5h0m.2 17.4h0m.4-21h0m.1 17.1h0m.1-15.7h0m.1-3.5h0m.5-.5h0m0 .7h0m0 5.1h0m0 13.8h0m.1 2.5h0m.2-4.1h0m.1-15.6h0m.8 21h0m.8-24.6h0m.6 2h0m.2 20.7h0m0-16.6h0m0-1.7h0m0 16.9h0m0 3.1h0m.2 4.5h0m.2-28h0m.2 27.2h0m.3-1.7h0m.1-20.1h0m.3-4.3h0m.2 25.5h0m0-2.1h0m.3-1.6h0m.2-1.6h0m.1-18.6h0m.3-1.9h0m1.3 .3h0m.2 .8h0m.6 19h0m.2-16.5h0m.2 15.2h0m.4 3h0m.1 1.2h0m.3 .2h0m.1-1.2h0m.1 7.1h0m.3-9.6h0m.2 5.4h0m.3 2.6h0m0-23h0m.2 2h0m.1 1.4h0m.2-3.3h0m.7 19.3h0m.1-4h0m0 1.3h0m.1 1.7h0m.8-13.3h0m0-3.8h0m.1 16.8h0m.2 1.9h0m0-17.6h0m.3 13.6h0m0 3.8h0m.2-5.2h0m1.5-11.9h0m.1-2.3h0m0 20.8h0m.1-2.2h0m0-19.5h0m0 15.8h0m.2 5.8h0m.1-4.2h0m2.3-24.1h0m.1-1.9h0m.2 30.1h0m0-24.7h0m.1 3.6h0m.1 18h0m.1-20.1h0m0 24.8h0m1.1-24.4h0m.6-2.8h0m.2 24.4h0m.2-23.5h0m.3 21.4h0m.2 2.6h0m.7-27.4h0m.8 2.4h0m0-3h0m.2 5.2h0m.4 22.1h0m0-2.2h0m0 1.2h0m.4 1.8h0m.1-.5h0m.1-21.8h0m.6 3.7h0m0-1.6h0m.2-4h0m.1 21.2h0m.1-23.6h0m.2-1.8h0m.1 23.3h0m.9-13.9h0m.3 16.1h0m.1 7.5h0m.3-21.5h0m.1 19.9h0m.1-11.6h0m.2 2.1h0m0 1.8h0m.3 9.1h0m.1-4.8h0m0 1.3h0m1.3 1.3h0m.1-2h0m.1-2.1h0m.3-22.9h0m.1 28.9h0m.1-23.5h0m.1 15.6h0m0-23h0m0 .2h0m.1 19.3h0m.1-10.6h0m0 12.5h0m0-10.5h0m.2-7.5h0m.9 4.2h0m.2 2h0m.4 1.8h0m.4 9.3h0m0 5.5h0m.2-1.2h0m.4-16h0m.3-3.6h0m.3 17.3h0m0-23.6h0m.1 9h0m.3-4.3h0m.2 21.4h0m.1-1.4h0m.1-21.3h0m.2 .4h0m0-2.5h0m.3 25h0m.1 1.4h0m.1-19.7h0m0-2.3h0m.1-3.5h0m.8 21.2h0m.2-13.6h0m.2 15.5h0m.6 .5h0m.4-19.8h0m.1-1.9h0m.1-1.9h0m.1-.3h0m.6 5.9h0m.3 21.8h0m0-6.2h0m.3 7.8h0m.2-5.6h0m.7 1.6h0m.3-21.6h0m.1 2h0m.1-2.8h0m.1-2.2h0m1.1 23.6h0m.1-3.4h0m.1 1.4h0m.9 2.1h0m0-4h0m.1 7.2h0m.2-.5h0m0-.5h0m.1-26.3h0m.1 27h0m.1-4.8h0m.2-20.1h0m.2 2.1h0m2.2 19.8h0m0-3.4h0m.1-20.5h0m.1 22.6h0m0-21.8h0m.1 2.2h0m.7-4.4h0m1.2 1.8h0m.1 26.9h0m.1-26.8h0m.1 25h0m0-3.5h0m.6-16.6h0m.1-2.8h0m.8 20.5h0m.1-22.1h0m.3 18.4h0m.1 5h0m.2-20.4h0m.1 17.9h0m0-19.4h0m.1 3.5h0m.7 17.4h0m.4-3.8h0m.2 2.5h0m.1 2.5h0m.2 1.7h0m1.1-2.7h0m.2-16.2h0m.1 12.9h0m.1 4.4h0m0-14.4h0m.1-1.9h0m.7 19.1h0m.5-17.2h0m.2-2h0m.4-1.4h0m.6 16.9h0m.1-3.6h0m.1 2.3h0m.3 1.6h0m.7-22.7h0m.2-3.7h0m.2 7.2h0m.2 23.5h0m.1-20.6h0m.1 18.8h0m0-19.8h0m0-4.4h0m.1-6.6h0m.1 24.8h0m.6-21.1h0m.2 25.7h0m.2-19.5h0m.1-3.4h0m0 20.5h0m.2-25.6h0m.9 6.2h0m.1 23.7h0m.1-.6h0m.1-2.4h0m0-19.6h0m0 18.2h0m.2-21.5h0m.4 1.2h0m.5 21.6h0m.3-22.5h0m.3 24.8h0m.3-4.7h0m0 5.5h0m.1-21.7h0m.2-2.4h0m1 23.2h0m.1 .7h0m0-2.6h0m.1-26.8h0m.1 24.2h0m.8-23.4h0m.2 5.8h0m0-5.9h0m.4 1.6h0m.2 20h0m.8 1.5h0m0-17h0m.1 1.9h0m.1-5.1h0m.2 1.6h0m.8-2.8h0m.5 3.9h0m.3-1.8h0m0 15.3h0m0-19.1h0m.1 .2h0m.2 9.5h0m.2 14.2h0m0-3.2h0m.1-13.3h0m.3 15.1h0m.7-12.6h0m.6-2.1h0m.1 14.9h0m.4-14.4h0m.1 12.3h0m.2-1.7h0m.6 3.7h0m.6 .1h0m.1-2.3h0m.2 3.8h0m.4-19.2h0m.2 3.1h0m.1-2.1h0m1 17.4h0m.3 4.1h0m0-5.9h0m.1 3.8h0m0-21.1h0m.4 23.4h0m0-19.8h0m.4-.6h0m.3-1.9h0m.5 .2h0m.2 23.8h0m.3-2.2h0m0-22.6h0m.1 24.3h0m0-3.9h0m.4-2.3h0m.7 8.1h0m.1-7.3h0m.4 6.7h0m.2-4.6h0m.2 3.5h0m.3-26.7h0m.2 5.1h0m.2-3.8h0m.6 1.5h0m.3 23.5h0m.1-1.7h0m.3-1.6h0m.2 4.6h0m0-7h0m.1 7.9h0m1-23.4h0m0-3.5h0m.1 1.5h0m.7 21.6h0m.3-2.2h0m.6-20.8h0m.1 22.1h0m.1-18.8h0m.4 21.5h0m0-4.1h0m0-24.1h0m.1 26.1h0m0-27.5h0m.4 6.1h0m.1 17.6h0m.4 8.5h0m0-30.6h0m0 1.5h0m.1 28.6h0m1.2-28.5h0m0 20.2h0m.2-18.1h0m0 21.3h0m.3-1.4h0m.2 1.9h0m.4-25.8h0m.3-.4h0m.6 4.6h0m.2 20.5h0m0-22.5h0m.5 20.3h0m.1 2.2h0m1.2-15.5h0m.3-2h0m.1 13.3h0m.1-15.3h0m.1 19.6h0m.1-1.8h0m0 1.1h0m.8-19.7h0m.1-3.4h0m.3 8.2h0m.2-6.9h0m0 4h0m.1-5.3h0m.2 6.6h0m.2 4.3h0m.6 9.9h0m.2-2.5h0m.3-12.7h0m.3 15.5h0m.1-10.7h0m.1-1.9h0m1.3 1.5h0m.3-2.2h0m.2 13.3h0m.3 1.2h0m.1-14.7h0m.2 11.7h0m1.6 1.5h0m0 1.5h0m.1-17.6h0m.3 20h0m.2 .6h0m.1-18.9h0m.1 19.7h0m.1 .2h0m.1-18.1h0m.3 16.2h0m.2-2.5h0m.1 5.1h0m1-25.1h0m.2-.6h0m.2 25.8h0m.2-23.2h0m.1 18.3h0m.1 1.8h0m.9-22.4h0m.1-1.9h0m.3-.1h0m.1 4.3h0m.8-3.2h0m.4 26.3h0m.2 2h0m.1-26.7h0m.3 27.4h0m.1-31.6h0m.2 23.9h0m.1 3.4h0m0-26.9h0m1 21.3h0m0 6.3h0m.1-3.6h0m0 .5h0m.4-1.6h0m.3-18.9h0m.1 1.8h0m.1-2.5h0m.4 19h0m.7-3.5h0m.1 2.7h0m.3-15.9h0m.4 18.8h0m.4 1.8h0m0-7.5h0m0-11h0m.3-3.7h0m0 16.6h0m0 9.1h0m.1-6.9h0m.5 5.8h0m1.4-22.4h0m0-1.3h0m.1 4.4h0m.1-1.5h0m.5 20.1h0m0 1.5h0m.2-2.1h0m.1-2.2h0m.1-2.2h0m1.6-17.5h0m.1-.8h0m0 3.5h0m.4 18.2h0m.2-2.2h0m.1 1.1h0m2.1-2h0m.1-17.3h0m.4 21.1h0m.1-19.1h0m.2-3.3h0m.2 21.8h0m.1-1.3h0m1.5-14.6h0m.1-1.2h0m.1-2.5h0m.2 21.7h0m.3-21.8h0m.3 20.4h0m.1-3.8h0m.3 1.4h0m2-18h0m.3-1.1h0m.1 20.5h0m.1-22.5h0m0-.9h0m.3 20h0m1.1-24.9h0m.2 7.9h0m.1-7.9h0m.1 9.8h0m.4-7.9h0m0 2h0m.5 21.3h0m0 4.2h0m.1-1.8h0m0 2.5h0m.1 1.6h0m.1-26.3h0m.2 2.9h0m.4 1.7h0m.2-3.7h0m.1-.9h0m.1 22.4h0m0-2.8h0m.4 1.7h0m0 2.5h0m.2-25.5h0m.2 3.8h0m.1-1.8h0m.7-3.1h0m.6 25.9h0m.3-.8h0m0-3.9h0m.1-20.1h0m.2 21.7h0m.1-19h0m.4 .5h0m.1 2.7h0m.9 11.2h0m.3 4.6h0m.2-21.8h0m.3 1.1h0m0-3.4h0m0 22.6h0m.2-15.4h0m.3-1.9h0m0 6.2h0m1.7 12.4h0m0-4.2h0m.3-11.4h0m.1-.5h0m0 2.3h0m0 11h0m.6-9.4h0m.5-2.9h0m.3 13.9h0m.5-14.9h0m.2 14.3h0m.1-2h0m.2-10h0m1.2 13.3h0m.3 2.1h0m.1 5.6h0m.1 1.2h0m0-2.5h0m.3-2.3h0m.1-22.4h0m.1-3.2h0m0 7.5h0m0-2.2h0m.3-1.5h0m.2 22.5h0m.2 3.6h0m.4-1.2h0m.2 0h0m.3-6.1h0m.6 1.9h0m.2-1.6h0m.4 3.1h0m.6-.9h0m.2-21.9h0m0-1.5h0m.3-1h0m1.1 24.6h0m.2-27.9h0m.1 27.3h0m.3-22.8h0m.3-4.3h0m.5 25.6h0m.1-23.1h0m.1 4.8h0m.8 .3h0m.1-5.2h0m.4 .6h0m.3 21.4h0m.1-14.8h0m.1-4.8h0m.2-3.3h0m.3 29.6h0m0-4.5h0m.3 1.3h0m1.8-20h0m.2-1.5h0m.2 16.5h0m.2 1.1h0m.2 2.2h0m.5-15.7h0m1.1 16.6h0m.1-1.6h0m.5-15.4h0m.2 17.6h0m0-19.6h0m.2-3.7h0m0 1.5h0m.1 17.5h0m0-22.6h0m1 26.6h0m1.2-2.3h0m.1-15.2h0m.2 2.1h0m.2-3.6h0m.4-2.8h0m.6 19.1h0m.2 1.9h0m.1-18.1h0m.2 1.7h0m.1-3.2h0m.3 22.2h0m.2-.7h0m0-21.8h0m1.6 3.5h0m.2-.6h0m.3 2.4h0m.1 11.3h0m.1 2.3h0m.3 1.6h0m0 1.2h0m.4-15.4h0m.6-3.5h0m.5 1.9h0m.2 19.2h0m.2-4.8h0m.1 5.6h0m.7-3.5h0m.4-3.5h0m.8-19.4h0m0 4.4h0m0-4h0m.2 2.1h0m.3 20.6h0m.3-2.8h0m0-1.8h0m.1-17.3h0m.4-1.4h0m0 24.4h0m.2-26.6h0m.3 24.7h0m0-1.2h0m0-27.1h0m.3 1.3h0m.2 30h0m.2-6.1h0m1-20.3h0m.4 .7h0m0 24.5h0m.4-22.5h0m.2 18.2h0m.2 2.2h0m.1 1.7h0m.5-5.6h0m.3-18h0m.2-.7h0m.2 1.8h0m.1-5h0m1.2 3.5h0m.1 4.1h0m.1 17.9h0m.1-24.5h0m0 19.3h0m.2 3.7h0m0-17.8h0m0-7h0m.1 .4h0m0 27.9h0m.2-5.4h0m.4-12.8h0m.6-3.6h0m.2 12.5h0m0-14.5h0m.1-2.4h0m.1-.6h0m.4 24.7h0m0-2.4h0m0 5.5h0m.1-7.9h0m0 7h0m1.3-19.6h0m.6 17.7h0m.1-16.4h0m0 1.5h0m.1 10.8h0m.2 6.2h0m.1-3.5h0m.1 6.6h0m1.1-21.4h0m.2-2h0m.1 16.2h0m0-1h0m.3 4.7h0m.1-21.6h0m.1 24h0m.2-.9h0m.8-30.1h0m.6 7.5h0m0-4.5h0m.4 2.4h0m.2-4.6h0m0 27.5h0m.3-28.4h0m.1 27.6h0m.2-2.4h0m.8-18.8h0m.2-2.2h0m.3 24.1h0m.2-1.9h0m.5-21.3h0m.1 19.7h0m.9-17.7h0m0-2.7h0m.4 24.5h0m.3 3.7h0m.4 .3h0m.1-7h0m.7 5.2h0m0-27.6h0m.1 1h0m0 1.7h0m.6 1.3h0m.6 69.3h0m.3-27.6h0m0 28.1h0m.2-24.9h0m.2 20.1h0m.1-22.3h0m.1 23.8h0m.3-23.4h0m.1 4.7h0m0 18.9h0m.2-21.6h0m0 1.7h0m.4 18.7h0m.1 1.8h0m.3-24.1h0m1.6 22.6h0m.1 6.2h0m.2-7.1h0m0 6.4h0m.4-26.2h0m.1-3.1h0m0 26.1h0m.1-24.7h0m1.5 20.2h0m0 4.3h0m0-.5h0m.1-21.7h0m.4 20.4h0m.1-21.7h0m.1-.7h0m1.1-.4h0m.3 1.3h0m0 2h0m.1 16.7h0m.1-20.2h0m.4 25.6h0m.3-6.4h0m0 8.7h0m0-4.1h0m.1-24h0m0 .9h0m0 27.4h0m.5-25.1h0m1.5 18.8h0m.1-2.2h0m.6 1.6h0m.1-13h0m.1-3.6h0m.4-.7h0m.3 2.3h0m.7 12.1h0m.4-2.1h0m.3 3.4h0m.3-13.4h0m.1-.5h0m.1 2.3h0m.4 14.5h0m.4 2.6h0m.1 1.5h0m.2-8.2h0m.2 2.2h0m0-16.6h0m.5-1.6h0m.2 5.3h0m.2 18.1h0m.2-19.4h0m0 14.4h0m.1-18.1h0m.3 22.9h0m0-1.7h0m.1-1.7h0m1.5-19h0m0-1.4h0m.2 20.7h0m0-16.5h0m.7 20.5h0m.5-25.3h0m0 1.7h0m.1-4.6h0m0 26.5h0m.2-28.1h0m0 7.7h0m.7-7.4h0m.3 24.1h0m.2 3.6h0m.4-1.8h0m1.2-25h0m.1 2.2h0m.1 27.8h0m.1-5.6h0m.2 1.3h0m0-21.3h0m.1 27.7h0m.3-32.5h0m0 29h0m.1-30.5h0m1 27.2h0m.3-2.2h0m.2-20h0m.1 2.7h0m.4 16.7h0m.3 .6h0m0-15.1h0m.3 11.9h0m.1-15.4h0m.6 2.1h0m.5 4.7h0m.3-3.9h0m.1 1.4h0m.9 11.1h0m.5 3.7h0m.2-1.5h0m.9-15.3h0m0-.6h0m.6-3.9h0m.1 2.4h0m.5 4.9h0m.3 17.7h0m0-.1h0m.1-20.8h0m.6-.7h0m0 19.3h0m.2-16.5h0m.8 15.5h0m.3 2h0m0 1.9h0m.1 .2h0m.7-22.3h0m.3-3.7h0m.1 6.4h0m0-1.6h0m0-8h0m.1-1.4h0m.1 0h0m.3 6.5h0m1-1.2h0m0 21.3h0m0-24.4h0m.2 1.3h0m0 27.4h0m.1-21.8h0m0 19h0m.2 4.7h0m0 0h0m.7-25.6h0m1-2.5h0m.4 1.5h0m.1 26.7h0m0-2.4h0m.1-1.9h0m0-19.7h0m.5 17.9h0m0 5.9h0m1.5-26.1h0m.2 1.9h0m0-7.1h0m.2 3.7h0m.2 22.3h0m.2-3.8h0m.4-20.8h0m.1 22.8h0m.8-21h0m.4 3.4h0m.2-2.8h0m.9 19.4h0m.1-17.3h0m.5 20.8h0m0-1.4h0m.7-21.8h0m.2 19.1h0m.2 7.6h0m0-30.4h0m.1 24.8h0m.5 3.9h0m.1 1.7h0m.2-4.2h0m.3-2.7h0m.2-20.9h0m.2 23h0m.2 1.2h0m.2-24.9h0m.1 19.8h0m.1-15.3h0m.1-3.1h0m.1 3.6h0m.2 14.5h0m.8 3.7h0m.1-16.9h0m0 15.2h0m1-18.4h0m.6 16.7h0m.1 3.2h0m.5-1.9h0m.4-14.8h0m.3 1.4h0m.3 1.5h0m.5 10.2h0m0 2.4h0m.8-15h0m.1 2.1h0m0 13.9h0m.6 1.6h0m.2-13.2h0m.1-3.9h0m0 18.9h0m.8 1.1h0m.2-7.6h0m.2 1.7h0m.4-18.1h0m0 23h0m.1-19h0m.1 2.6h0m0-10.6h0m.5 22.8h0m0-20.8h0m.1 22.5h0m.5 2.5h0m.4-19.7h0m0-1.5h0m.8 18.7h0m.1-19.6h0m.6 25.3h0m.3-3.5h0m.7 1.7h0m.1 2.6h0m.4-1.6h0m.4-27.5h0m.3 3.9h0m0-4.5h0m.2 2.4h0m.5 23.7h0m.5-3h0m0 5.2h0m0-3.3h0m.2 5.7h0m.5-29.5h0m.9 21.5h0m.2-24.7h0m.2 .3h0m.1 5.4h0m0 17.1h0m.3 3.6h0m.5 .6h0m.4-19.8h0m.4 15.6h0m.1-17.4h0m.1 21.3h0m.3-26.1h0m.2 2.5h0m.1-1.4h0m.2 25.6h0m.6-6.8h0m.1 4h0m.1-18h0m.1 17h0m.4-14.3h0m.4-1.3h0m.7 13.3h0m.2 2.8h0m.1-18.5h0m.2 18.6h0m.3-15.9h0m.2-1.8h0m.2 0h0m.2 4h0m.6 16.5h0m.1 1.8h0m.1-6.1h0m.1 2.1h0m.2 6.1h0m.6-.7h0m.3-25.6h0m0 2.9h0m0 18.6h0m.1-20.6h0m.1 24.7h0m.1-5.8h0m.1 4.2h0m1.3-21.7h0m1.8 17.3h0m.1-18.9h0m0 23.3h0m0-26.6h0m.1 2.8h0m.6 3.6h0m0-2h0m.3-5.6h0m.1 3.2h0m.9-2h0m.1-1.7h0m.1 23.4h0m.2-17.7h0m.1-2.1h0m.1 3.5h0m.8 18.6h0m0-20.6h0m.1 20.4h0m.1-3.5h0m.1 4.3h0m.1-24.5h0m.2-3.3h0m0 5.6h0m.2-3.7h0m.1 6.9h0m.1 15.3h0m.2 1.5h0m.5 4.9h0m1.2-23.6h0m.2 18.5h0m0-16.7h0m.4-2.7h0m.3 20.8h0m.1-16.5h0m.3-4.1h0m.1 17.2h0m.3-14.5h0m1.5-2.2h0m.3 20.9h0m0-23h0m.7 .2h0m.2 21.6h0m0-1.8h0m.5 6h0m.6-23.6h0m.2 17.6h0m.1-19.8h0m.1-.5h0m.2 21.7h0m.3 4.5h0m.2-1.7h0m.7-19.9h0m.1-4.1h0m.3 2.3h0m.2-6.6h0m0 2.3h0m.7 7.3h0m.3 14.4h0m.2-.7h0m.4-1.3h0m.6 .3h0m0-12.2h0m.1 10.6h0m0 4h0m.4-13.3h0m.2 1.7h0m.1 11.9h0m1-2h0m.2 1.8h0m.1 5.8h0m.2-3.7h0m.1 2.2h0m1-20.6h0m.1 4.5h0m.2-2.5h0m.9 21.1h0m0 1.4h0m.4-5.3h0m.1 1.5h0m.1 4.9h0m0-8.5h0m.3-16.9h0m.1 3.3h0m.4-2h0m.4-1.8h0m.5 18.7h0m.5 3.1h0m.2-2h0m0-22.7h0m.2 .8h0m.8-1.8h0m.1 27h0m.2-29.1h0m.5 4.1h0m.9 23.2h0m.2-1.1h0m.3-23.3h0m.1-1.8h0m.3 23.3h0m0-24.5h0m1.2 29.4h0m.1-7h0m0 4.9h0m.5-.1h0m.1-2.5h0m.2-19.5h0m.9-2.9h0m.2 17.6h0m.1-16.5h0m.1 20.6h0m.3-4.6h0m.5-15.5h0m.1-1.5h0m0 20.5h0m.1 .3h0m.2-17.9h0m0 15.2h0m.6-19.9h0m.5 19.7h0m.4 2h0m.1 .1h0m1-16.3h0m.1-2.1h0m0-3.7h0m.1-.6h0m.2 8.7h0m1.2 15.2h0m.2-2.8h0m.1 2h0m1 6.9h0m.2-8.4h0m.4-17.9h0m0 23.8h0m0-21.2h0m.3 23h0m.1-20.7h0m.1 17.1h0m0-21.5h0m1 22.2h0m.4-1.2h0m.4-17.9h0m.1 16.4h0m0-20.2h0m0 2.3h0m.1-2.6h0m.1 18.4h0m1.5 7.8h0m0-2.7h0m.3-5.5h0m0 3.6h0m.1-18.4h0m.6 .9h0m0 15.6h0m0-13.6h0m1 11h0m.9 2.6h0m.2-13.9h0m.1-1.8h0m.1 18.3h0m.6-19h0m.8-3.9h0m0 23.1h0m.3-18.3h0m0 17h0m.2-19.3h0m.8 23.4h0m.4-23.2h0m.3 1.3h0m.2 17.9h0m.1-20.4h0m.4 22.1h0m0 1.1h0m1.8-1.5h0m.1-2h0m0-20.3h0m.1 21.8h0m.1-18.5h0m0-1.3h0m.6-2.9h0m.1 .5h0m.5 1.5h0m2 21.3h0m0-.7h0m.2-2.2h0m.2-23.6h0m.2 4.9h0m.5 1.7h0m.1 1.9h0m.4 16.1h0m.2-3.3h0m.8 6.2h0m.5-6.2h0m.1 1.5h0m.1-24.2h0m.2 24.9h0m.6-24.6h0m0 4.7h0m.1 2h0m.2 2.3h0m.3-6.6h0m0 8.1h0m0 1.6h0m0 10.6h0m.3 2.4h0m.5-1.1h0m.9-17.1h0m.4 21.6h0m.1-2.7h0m.1 2.8h0m.3-20.1h0m.2 2.2h0m.1-4.4h0m1.9-.5h0m.3-.5h0m.5 21.3h0m.1 3.6h0m0-22.9h0m1-2.9h0m.1 28h0m.5-29.9h0m.1 4.2h0m.3 18.3h0m.1-22.4h0m.2 29.7h0m0-1.1h0m.4-1.8h0m.2-1.3h0m.7 1.4h0m1.1-30.2h0m.1 7.7h0m.1-3.9h0m.1-2.1h0m.1 24.7h0m.2-21.3h0m.5 19.1h0m.2-15.6h0m.2-8.4h0m.4 21.7h0m.1-22.9h0m.3 3.9h0m.1 21.8h0m.2-22.2h0m0 4h0m1.2-4.7h0m0 1.6h0m.1 4.8h0m.1-4.3h0m.1-2.8h0m.3 19.9h0m.2 1.5h0m.3-11.9h0m0 16h0m0 3.5h0m.1-5.4h0m.2-19.3h0m0 22.8h0m1.3-20.4h0m.1 1.6h0m.5-2.1h0m.1 3.9h0m.1 11.7h0m.3 1.8h0m.6 1.9h0m0 .5h0m.5-23h0m.1 1.6h0m.5 4.4h0m.3 1.9h0m0-8.4h0m.3 4.2h0m.1 19.1h0m.1-3.2h0m.4 4.1h0m0-2.4h0m.1-14.3h0m.2 2h0m.2-8h0m.1 3.6h0m.1 1.2h0m.4 16.9h0m.1-1.5h0m.7-15.7h0m.1 1.8h0m.5-2.6h0m0 19.9h0m1.1-18.7h0m.1 1.5h0m.1 17.6h0m.1-19.8h0m.1 18.7h0m.2-1.9h0m.3 6.2h0m1.1-22h0m.1-5.4h0m.1 21.6h0m0 2.4h0m.2-27.8h0m.1 4.8h0m.1 1.7h0m0 20.2h0m.1-15.6h0m.5-9.8h0m.1 31.2h0m1-5.8h0m.5-1.9h0m0-18.8h0m.1 22.2h0m0-18.2h0m.3 20.4h0m.6-22.4h0m.5-6.3h0m1 1.1h0m.1 23.2h0m.3-19.9h0m.1 22.9h0m.1-.9h0m.5-23.3h0m.7 22h0m.2 2.1h0m.1-4.6h0m.8-22h0m.1 1h0m.6 1.4h0m.6 22.6h0m.6-3.9h0m.2-1.6h0m.9-17.1h0m.6 2.5h0m.2-1.6h0m.4 22.4h0m.1-4h0m.4-22.7h0m.1 1.4h0m0 26h0m.1-7.3h0m0-22.7h0m0 26.9h0m0-21.2h0m0-5.5h0m.5 7.3h0m.3 2.2h0m1 24h0m.1-3.5h0m.2-1.7h0m0-4.2h0m0 8h0m.2-9.6h0m0-13.2h0m.3 16.5h0m.1-11.9h0m.6-2.4h0m1 16h0m0 .4h0m.2-4.3h0m.4 1.8h0m1.1-19.7h0m.1 1.7h0m0 1.8h0m0-6.1h0m.6-.5h0m.1 28.9h0m.3-.3h0m.1-4.4h0m.2 2.5h0m0-21.1h0m.2-4.1h0m.5-1.8h0m.2 4.4h0m.1-6.7h0m.6 9h0m.3 20.3h0m.3-2.1h0m.1-1.7h0m.6-17.9h0m0-2.3h0" stroke="#000" stroke-width="3.3" stroke-linecap="round" fill="none"/>
<path d="M162.2 321.1V35.5" stroke="#800080" stroke-width="2.08" stroke-dasharray="2.08 3.44" fill="none"/>
<path d="M1112.1 321.1V35.5" stroke="#800080" stroke-width="2.08" stroke-dasharray="2.08 3.44" fill="none"/>
<path d="M1303.1 321.1V35.5" stroke="#800080" stroke-width="2.08" stroke-dasharray="2.08 3.44" fill="none"/>
</g>
<rect x="105.5" y="35.5" width="1380.0" height="286.0" fill="none" stroke="#000" stroke-width="1.1"/>
<path d="M162.5 321.5v5.4M371.5 321.5v5.4M580.5 321.5v5.4M788.5 321.5v5.4M997.5 321.5v5.4M1206.5 321.5v5.4M1415.5 321.5v5.4" stroke="#000" stroke-width="1.1" fill="none"/>
<text x="157.9" y="342.1" font-size="14.5" textLength="8.8" lengthAdjust="spacingAndGlyphs">0</text>
<text x="353.7" y="342.1" font-size="14.5" textLength="35.0" lengthAdjust="spacingAndGlyphs">2000</text>
<text x="562.6" y="342.1" font-size="14.5" textLength="35.0" lengthAdjust="spacingAndGlyphs">4000</text>
<text x="771.4" y="342.1" font-size="14.5" textLength="35.1" lengthAdjust="spacingAndGlyphs">6000</text>
<text x="980.3" y="342.1" font-size="14.5" textLength="35.1" lengthAdjust="spacingAndGlyphs">8000</text>
<text x="1184.8" y="342.1" font-size="14.5" textLength="43.9" lengthAdjust="spacingAndGlyphs">10000</text>
<text x="1393.7" y="342.1" font-size="14.5" textLength="43.8" lengthAdjust="spacingAndGlyphs">12000</text>
<path d="M105.5 79.5h-5.4M105.5 122.5h-5.4M105.5 166.5h-5.4M105.5 210.5h-5.4M105.5 254.5h-5.4M105.5 298.5h-5.4" stroke="#000" stroke-width="1.1" fill="none"/>
<text x="65.0" y="83.9" font-size="14.5" textLength="30.8" lengthAdjust="spacingAndGlyphs">6.22</text>
<text x="65.0" y="127.9" font-size="14.5" textLength="30.8" lengthAdjust="spacingAndGlyphs">6.20</text>
<text x="65.0" y="171.9" font-size="14.5" textLength="30.8" lengthAdjust="spacingAndGlyphs">6.18</text>
<text x="65.0" y="215.9" font-size="14.5" textLength="30.8" lengthAdjust="spacingAndGlyphs">6.16</text>
<text x="65.0" y="259.7" font-size="14.5" textLength="30.8" lengthAdjust="spacingAndGlyphs">6.14</text>
<text x="65.0" y="302.9" font-size="14.5" textLength="30.8" lengthAdjust="spacingAndGlyphs">6.12</text>
<text x="696.6" y="27.0" font-size="17.4" textLength="57.3" lengthAdjust="spacingAndGlyphs">AGASC</text>
<text x="759.2" y="27.0" font-size="17.4" textLength="17.7" lengthAdjust="spacingAndGlyphs">ID</text>
<text x="782.1" y="27.0" font-size="17.4" textLength="110.8" lengthAdjust="spacingAndGlyphs">301478752.0</text>
<text x="614.8" y="311.7" font-size="14.5" textLength="44.0" lengthAdjust="spacingAndGlyphs">10536</text>
<text x="1184.4" y="291.7" font-size="14.5" textLength="44.0" lengthAdjust="spacingAndGlyphs">51529</text>
<rect x="1361.8" y="42.4" width="116.8" height="27.0" rx="2.8" fill="#fff" fill-opacity="0.8" stroke="#ccc" stroke-width="1.1"/>
<path d="M1366.3 54.1h29.9" stroke="#008000" stroke-width="2.08" fill="none"/>
<text x="1406.6" y="58.8" font-size="14.5" textLength="31.0" lengthAdjust="spacingAndGlyphs">mag</text>
<text x="1437.0" y="61.7" font-size="10.2" textLength="35.0" lengthAdjust="spacingAndGlyphs" font-style="italic">AGASC</text>
<rect x="1348.4" y="268.3" width="130.2" height="46.3" rx="2.8" fill="#fff" fill-opacity="0.8" stroke="#ccc" stroke-width="1.1"/>
<path d="M1367.4 281.5h0" stroke="#ffa500" stroke-width="3.6999999999999997" stroke-linecap="round"/>
<path d="M1367.4 302.3h0" stroke="#000" stroke-width="3.6999999999999997" stroke-linecap="round"/>
<text x="1393.2" y="284.9" font-size="14.5" textLength="80.1" lengthAdjust="spacingAndGlyphs">Highlighted</text>
<text x="1393.2" y="305.8" font-size="14.5" textLength="19.9" lengthAdjust="spacingAndGlyphs">OK</text>
<g clip-path="url(#c1)">
<path d="M167.5 485.2h0m5.1 3.5h0m2.6 0h0m30.1 1.3h0m64.2 0h0m31.9 0h0m18-6.2h0m0 3.8h0m44.1 2.4h0m14 0h0m3.7-6.2h0m0 5.8h0m17.8-1.1h0m28.4-.9h0m32.9 2.4h0m-289.8 65.3h0m11.9 43.1h0m191.8-45.6h0m187.2-71.6h0m19.2 7.5h0m27.9-1.1h0m17.1 1.8h0m11.9 .5h0m78.8-10.2h0m22.2 10.2h0m18.1 1.1h0m3.9-2.3h0m18-2.3h0m-256.2 51.1h0m45-.2h0m30.9 21.8h0m54.1 7.5h0m78.9-23h0m40-6.3h0m-220.8 97.1h0m82.1 42h0m184.9-186.5h0m49.9-3.5h0m0 1.8h0m19.2-8.5h0m32 2.7h0m0 5.8h0m13.7-2.9h0m-.9 3.4h0m27.2 1.2h0m85.9 0h0m21-2.6h0m19.2 1.7h0m-161.1 48.3h0m104.9 0h0m55.1 55.1h0m153.9-44.8h0m27 1.3h0m-65.4 49.3h0m54.4 .5h0m29.8 79.1h0" stroke="#ffa500" stroke-width="3.3" stroke-linecap="round" fill="none"/>
<path d="M162.5 504.1 164 501.7 165.5 501.6 167 503.6 168.5 505.5 170 505.7 171.5 504.8 173 504.7 174.5 505.3 176 505.4 177.5 504.5 179 503.9 180.5 504.9 182 506.5 183.5 506.3 185 503.7 186.5 500.5 188 500.1 189.5 500.1 191 500.1 192.5 500.1 194 502.1 195.5 506.1 197 509 198.5 509 200 509 201.5 507.2 203 506 204.5 505.2 206 503.8 207.5 502.2 209 502 210.5 503.4 212 504.3 213.5 503.3 215 501.4 216.5 500.8 218 502.2 219.5 504.1 221 505 222.5 505.2 224 505.9 225.5 506.6 227 505.7 228.5 502.8 230 500.1 231.5 500.1 233 501.5 234.5 504 236 505.8 237.5 507.3 239 509 240.5 509 242 509 243.5 505.9 245 502.8 246.5 501.8 248 502.2 249.5 502.2 251 501.2 252.5 500.6 254 501.2 255.5 502.1 257 501.8 258.5 501.2 260 502.1 261.5 505.3 263 508.6 264.5 509 266 508.7 267.5 507.2 269 506.1 270.5 504.4 272 501.7 273.5 500.1 275 500.3 276.5 503.3 278 506.2 279.5 507 281 506.4 282.5 505.8 284 505.5 285.5 504.3 287 502.1 288.5 500.4 290 501 291.5 502.9 293 503.7 294.5 502.7 296 501.5 297.5 501.9 299 503.5 300.5 504.8 302 505.6 303.5 507 305 509 306.5 509 308 509 309.5 506.7 311 502.8 312.5 500.7 314 500.1 315.5 500.1 317 500.1 318.5 500.6 320 503.7 321.5 506.2 323 506.2 324.5 504.5 326 503.5 327.5 504.1 329 504.8 330.5 504.5 332 503.9 333.5 504.4 335 505.5 336.5 505.5 338 503.6 339.5 501.8 341 502.2 342.5 504.6 344 506.9 345.5 507.7 347 507.8 348.5 507.9 350 507.4 351.5 504.8 353 500.6 354.5 500.1 356 500.1 357.5 500.1 359 501.2 360.5 502.5 362 504 363.5 506.2 365 507.9 366.5 507.5 368 505.8 369.5 505.1 371 506.3 372.5 507.7 374 507.3 375.5 505.3 377 503.6 378.5 502.9 380 502.1 381.5 500.7 383 500.1 384.5 501.2 386 504.7 387.5 507.5 389 507.7 390.5 506.2 392 504.6 393.5 503.5 395 501.8 396.5 500.1 398 500.1 399.5 500.7 401 504.2 402.5 506.7 404 507.1 405.5 506.7 407 506.9 408.5 507.6 410 507.2 411.5 505.8 413 505 414.5 505.6 416 506 417.5 504.5 419 501.2 420.5 500.1 422 500.1 423.5 500.1 425 500.5 426.5 501.9 428 504.5 429.5 508 431 509 432.5 509 434 506 435.5 503.6 437 503 438.5 503 440 502.7 441.5 502.6 443 504 444.5 506.2 446 507.1 447.5 505.7 449 503.8 450.5 503.4 452 504.6 453.5 505.4 455 504.7 456.5 503.7 458 503.4 459.5 503.1 461 501.5 462.5 500.1 464 500.1 465.5 500.1 467 503.4 468.5 506.6 470 508.4 471.5 509 473 509 474.5 509 476 507.6 477.5 503.8 479 501.4 480.5 501.6 482 502.7 483.5 503 485 502.3 486.5 502.2 488 503.1 489.5 503.6 491 502.8 492.5 502 494 503 495.5 505.5 497 507.3 498.5 506.7 500 504.7 501.5 503.1 503 502.5 504.5 501.9 506 500.9 507.5 501.3 509 504.1 510.5 508.1 512 509 513.5 509 515 507.9 516.5 506.2 518 504.8 519.5 502.7 521 500.1 522.5 500.1 524 500.3 525.5 502.3 527 502.8 528.5 501.7 530 501.2 531.5 502.4 533 504.4 534.5 505.7 536 506.3 537.5 507.5 539 509 540.5 509 542 507.4 543.5 503.5 545 500.9 546.5 500.6 548 501.4 549.5 502.1 551 503 552.5 505.2 554 507.6 555.5 508.2 557 506.1 558.5 503 560 501.4 561.5 501.6 563 501.9 564.5 501.5 566 501.4 567.5 502.7 569 504.4 570.5 504.7 572 503.6 573.5 503.2 575 505.1 576.5 508 578 509 579.5 509 581 508.3 582.5 507.3 584 505.5 585.5 502.2 587 500.1 588.5 500.1 590 500.1 591.5 501.5 593 503.6 594.5 504.5 596 505.4 597.5 506.6 599 506.7 600.5 505 602 503 603.5 502.7 605 504.4 606.5 505.8 608 505.5 609.5 504.1 611 503.6 612.5 504.1 614 504.3 615.5 503.7 617 503.8 618.5 505.7 620 508.3 621.5 509 623 506.8 624.5 503.6 626 501.2 627.5 500.1 629 500.1 630.5 500.1 632 500.1 633.5 501.9 635 506 636.5 508 638 507.7 639.5 506.9 641 507 642.5 507.3 644 506.4 645.5 505 647 504.6 648.5 505.5 650 505.7 651.5 503.8 653 501 654.5 500.1 656 500.6 657.5 502.4 659 503.6 660.5 504.5 662 506.1 663.5 507.8 665 507.4 666.5 504.4 668 500.9 669.5 500.1 671 500.2 672.5 501.7 674 502.8 675.5 504.3 677 506.8 678.5 509 680 509 681.5 507.3 683 505.3 684.5 505 686 505.7 687.5 505.4 689 503.8 690.5 502.3 692 501.8 693.5 501.3 695 500.1 696.5 500.1 698 500.1 699.5 501.8 701 505.8 702.5 508.1 704 508.6 705.5 508.4 707 508.2 708.5 506.8 710 503.8 711.5 501 713 500.6 714.5 502.7 716 505 717.5 505.7 719 505.3 720.5 505.4 722 505.9 723.5 505.4 725 503.7 726.5 502.4 728 502.9 729.5 504.5 731 504.7 732.5 502.9 734 500.7 735.5 500.1 737 500.5 738.5 501.2 740 501.9 741.5 503.9 743 507.7 744.5 509 746 509 747.5 509 749 506.7 750.5 504.7 752 503.2 753.5 501.4 755 500.1 756.5 500.1 758 502.3 759.5 504.2 761 504.1 762.5 502.7 764 502.2 765.5 503.3 767 504.6 768.5 504.9 770 504.7 771.5 505.4 773 506.5 774.5 506 776 503.5 777.5 500.9 779 500.5 780.5 502.5 782 504.8 783.5 506.3 785 507.6 786.5 509 788 509 789.5 508.4 791 504.4 792.5 500.8 794 500.1 795.5 500.1 797 500.4 798.5 500.4 800 501 801.5 502.8 803 504.5 804.5 504.6 806 503.7 807.5 504 809 506.3 810.5 508.8 812 509 813.5 508 815 506.4 816.5 505.3 818 503.6 819.5 501.1 821 500.1 822.5 500.1 824 502.9 825.5 506 827 507 828.5 506.5 830 505.9 831.5 505.4 833 503.8 834.5 501.2 836 500.1 837.5 500.1 839 502.6 840.5 504.3 842 504.3 843.5 503.8 845 504.5 846.5 505.9 848 506.5 849.5 506.2 851 506.7 852.5 508.3 854 509 855.5 508.3 857 504.7 858.5 501 860 500.1 861.5 500.1 863 500.1 864.5 500.1 866 501 867.5 504.8 869 507.8 870.5 508 872 506.2 873.5 504.7 875 504.5 876.5 504.5 878 503.8 879.5 503.1 881 503.9 882.5 505.6 884 506.1 885.5 504.7 887 502.9 888.5 502.9 890 504.6 891.5 506.2 893 506.4 894.5 506 896 506.1 897.5 505.8 899 503.6 900.5 500.1 902 500.1 903.5 500.1 905 500.1 906.5 502.4 908 504.3 909.5 506.3 911 508.8 912.5 509 914 509 915.5 506.3 917 504.5 918.5 504.7 920 505.5 921.5 505 923 503.5 924.5 502.5 926 502.5 927.5 502.3 929 501.1 930.5 500.2 932 501.5 933.5 504.7 935 507.3 936.5 507.5 938 506.1 939.5 504.7 941 503.7 942.5 502.1 944 500.1 945.5 500.1 947 501.4 948.5 505.3 950 508.1 951.5 508.7 953 508.1 954.5 507.8 956 507.5 957.5 506 959 503.6 960.5 502.2 962 502.7 963.5 503.6 965 502.9 966.5 500.7 968 500.1 969.5 500.1 971 501 972.5 502.3 974 503.5 975.5 505.9 977 509 978.5 509 980 509 981.5 506.2 983 503.4 984.5 502.3 986 502.1 987.5 501.7 989 501.8 990.5 503.7 992 506.4 993.5 507.6 995 506.3 996.5 504 998 503 999.5 503.5 1001 503.7 1002.5 502.9 1004 502.2 1005.5 502.6 1007 503.3 1008.5 502.7 1010 500.8 1011.5 500.1 1013 501.8 1014.5 505.3 1016 508.1 1017.5 509 1019 509 1020.5 509 1022 509 1023.5 506.3 1025 501.9 1026.5 500.1 1028 500.1 1029.5 500.8 1031 501.8 1032.5 502.1 1034 502.9 1035.5 504.5 1037 505.2 1038.5 504.2 1040 502.9 1041.5 503.2 1043 505.2 1044.5 506.8 1046 506.4 1047.5 504.7 1049 503.6 1050.5 503.4 1052 503 1053.5 502 1055 502 1056.5 504.5 1058 508.1 1059.5 509 1061 509 1062.5 506.9 1064 504.8 1065.5 503.1 1067 500.7 1068.5 500.1 1070 500.1 1071.5 500.1 1073 502.6 1074.5 504.3 1076 504.2 1077.5 504.1 1079 505.2 1080.5 506.5 1082 506.8 1083.5 506.4 1085 506.8 1086.5 508.2 1088 508.5 1089.5 506.2 1091 502.6 1092.5 500.2 1094 500.1 1095.5 501 1097 501.7 1098.5 502.8 1100 505 1101.5 507.7 1103 508.4 1104.5 506.1 1106 502.8 1107.5 500.9 1109 500.9 1110.5 501.3 1112 501.2 1113.2 501.7 1113.2 523 1112 525 1110.5 525 1109 525 1107.5 525 1106 523.8 1104.5 522.4 1103 521 1101.5 519.2 1100 518.6 1098.5 518.7 1097 521 1095.5 522.7 1094 522.9 1092.5 522.3 1091 522 1089.5 522.5 1088 522.8 1086.5 522.3 1085 522 1083.5 522.7 1082 523.7 1080.5 523.6 1079 522.2 1077.5 520.7 1076 520.6 1074.5 521.8 1073 523 1071.5 523.6 1070 524.4 1068.5 525 1067 525 1065.5 524.7 1064 521.9 1062.5 519.2 1061 518.6 1059.5 518.6 1058 518.8 1056.5 519.3 1055 520.6 1053.5 522.6 1052 524 1050.5 523.9 1049 523 1047.5 522.9 1046 523.9 1044.5 524.9 1043 524.8 1041.5 524 1040 523.3 1038.5 523 1037 522 1035.5 520.1 1034 518.6 1032.5 519.2 1031 521.6 1029.5 523.5 1028 524.1 1026.5 524 1025 523.8 1023.5 523.5 1022 522 1020.5 519.7 1019 518.6 1017.5 519 1016 521.1 1014.5 522.6 1013 522.9 1011.5 523.2 1010 524 1008.5 524.6 1007 524.4 1005.5 523.5 1004 523.4 1002.5 524.3 1001 524.9 999.5 524 998 521.8 996.5 519.8 995 518.8 993.5 518.6 992 518.6 990.5 518.6 989 520.6 987.5 523.5 986 525 984.5 525 983 524.3 981.5 523.2 980 522.8 978.5 522.2 977 521.2 975.5 520.8 974 521.8 972.5 523.4 971 524 969.5 523.3 968 522.2 966.5 522.2 965 522.9 963.5 523.2 962 522.9 960.5 522.6 959 523 957.5 523 956 521.6 954.5 519.1 953 518.6 951.5 518.6 950 519.8 948.5 521.6 947 522.9 945.5 524.6 944 525 942.5 525 941 525 939.5 523.6 938 522.1 936.5 521.8 935 522 933.5 521.6 932 521 930.5 521.1 929 521.8 927.5 521.8 926 520.9 924.5 520 923 520.8 921.5 522.7 920 524.1 918.5 524.1 917 523.3 915.5 522.8 914 522.4 912.5 521.2 911 519.5 909.5 519 908 520.8 906.5 523.4 905 525 903.5 525 902 525 900.5 525 899 524.6 897.5 523 896 520.8 894.5 519.5 893 520.1 891.5 521.1 890 521 888.5 520.1 887 519.6 885.5 520.4 884 521.3 882.5 521.8 881 522.3 879.5 523.7 878 525 876.5 525 875 525 873.5 523.5 872 521.8 870.5 521 869 520.5 867.5 520 866 520.3 864.5 522 863 524.1 861.5 525 860 524.1 858.5 522.6 857 521.7 855.5 521.6 854 521.1 852.5 520.3 851 520.1 849.5 521.1 848 522.2 846.5 522.1 845 521 843.5 520.7 842 521.9 840.5 523.8 839 525 837.5 525 836 525 834.5 525 833 525 831.5 523.1 830 520 828.5 518.6 827 518.6 825.5 519.3 824 520.3 822.5 521 821 522.3 819.5 523.7 818 524.1 816.5 523 815 521.7 813.5 521.6 812 522.7 810.5 523.4 809 523.1 807.5 522.5 806 522.4 804.5 522.6 803 522.2 801.5 521.3 800 521.2 798.5 522.7 797 524.8 795.5 525 794 525 792.5 523.7 791 522.6 789.5 521.3 788 519.1 786.5 518.6 785 518.6 783.5 519 782 521.7 780.5 523.1 779 523.4 777.5 523.7 776 524.4 774.5 524.7 773 524.1 771.5 523.2 770 523.3 768.5 524.2 767 524.4 765.5 523.1 764 521.1 762.5 519.8 761 519.9 759.5 520.3 758 520.5 756.5 521.2 755 523 753.5 524.8 752 525 750.5 523.6 749 521.5 747.5 520.2 746 519.9 744.5 519.9 743 519.8 741.5 520.8 740 522.9 738.5 524.8 737 525 735.5 524.4 734 523.6 732.5 523.7 731 524.2 729.5 523.9 728 523 726.5 522.4 725 522.3 723.5 521.7 722 519.8 720.5 518.6 719 518.6 717.5 518.9 716 521.4 714.5 523 713 524 711.5 525 710 525 708.5 525 707 523.3 705.5 521.1 704 520.4 702.5 521.3 701 522.3 699.5 522.5 698 522.6 696.5 523.2 695 523.8 693.5 523.5 692 522.3 690.5 521.4 689 522 687.5 523.1 686 523.3 684.5 522.2 683 520.8 681.5 520.1 680 519.8 678.5 519.1 677 518.6 675.5 519.9 674 522.8 672.5 525 671 525 669.5 525 668 525 666.5 524.8 665 523.6 663.5 521.7 662 519.9 660.5 519.7 659 521 657.5 522.1 656 521.8 654.5 520.9 653 520.7 651.5 521.5 650 522.1 648.5 522 647 522.2 645.5 523.2 644 524.4 642.5 524.3 641 522.7 639.5 520.7 638 519.9 636.5 520.5 635 521.4 633.5 522 632 523.3 630.5 525 629 525 627.5 525 626 524.2 624.5 522 623 520.9 621.5 520.5 620 519.8 618.5 519.1 617 519.4 615.5 520.8 614 521.8 612.5 521.6 611 520.8 609.5 521.2 608 522.9 606.5 524.6 605 525 603.5 525 602 525 600.5 524.9 599 523.7 597.5 521.3 596 519 594.5 518.7 593 520.5 591.5 522.3 590 523.1 588.5 523.5 587 524 585.5 524.3 584 523.3 582.5 521.2 581 519.5 579.5 519.7 578 520.9 576.5 521.7 575 521.5 573.5 521.4 572 522.1 570.5 522.9 569 523 567.5 522.7 566 523.3 564.5 525 563 525 561.5 525 560 524.5 558.5 522.5 557 521.1 555.5 519.7 554 518.6 552.5 518.6 551 518.6 549.5 521.2 548 523.4 546.5 524 545 523.5 543.5 523.2 542 523.3 540.5 523.1 539 522.1 537.5 521.6 536 522.2 534.5 523.4 533 523.7 531.5 522.7 530 521.5 528.5 521.4 527 522.3 525.5 523 524 523.2 522.5 523.6 521 524.6 519.5 525 518 523.7 516.5 520.9 515 518.6 513.5 518.6 512 518.6 510.5 519 509 520.1 507.5 521.9 506 524.2 504.5 525 503 525 501.5 524.2 500 523.4 498.5 523.6 497 524 495.5 523.5 494 522.6 492.5 522.2 491 522.2 489.5 521.7 488 520.1 486.5 518.7 485 519.4 483.5 521.6 482 523.4 480.5 524 479 523.9 477.5 523.8 476 523.5 474.5 522.1 473 519.8 471.5 518.6 470 519.3 468.5 521.6 467 523.3 465.5 524 464 524.4 462.5 525 461 525 459.5 524.5 458 522.9 456.5 522 455 522.4 453.5 523 452 522.3 450.5 520.6 449 519.2 447.5 519 446 519.2 444.5 519.2 443 519.7 441.5 521.6 440 524.4 438.5 525 437 525 435.5 524.8 434 523.5 432.5 522.7 431 521.7 429.5 520.5 428 520 426.5 521.3 425 523.2 423.5 524.2 422 523.7 420.5 522.6 419 522.3 417.5 522.6 416 522.4 414.5 521.6 413 521.3 411.5 521.9 410 522.4 408.5 521.6 407 519.8 405.5 518.6 404 519.4 402.5 521.3 401 522.9 399.5 524 398 525 396.5 525 395 525 393.5 525 392 522.9 390.5 520.7 389 520.1 387.5 520.3 386 520.1 384.5 520 383 520.8 381.5 522.2 380 522.7 378.5 521.9 377 521 375.5 521.4 374 522.8 372.5 523.9 371 523.8 369.5 523.2 368 522.9 366.5 522.7 365 521.8 363.5 520.3 362 519.7 360.5 521.3 359 523.8 357.5 525 356 525 354.5 525 353 524.7 351.5 523.8 350 521.7 348.5 519 347 518.6 345.5 518.6 344 520.3 342.5 521.1 341 521.1 339.5 521.3 338 522.3 336.5 523.2 335 523.2 333.5 523.1 332 523.9 330.5 525 329 525 327.5 525 326 522.9 324.5 521.2 323 520.5 321.5 520 320 519.5 318.5 519.9 317 521.8 315.5 524.1 314 525 312.5 524.2 311 522.6 309.5 521.6 308 521.1 306.5 520.5 305 519.6 303.5 519.8 302 521.4 300.5 523 299 523.5 297.5 522.8 296 522.4 294.5 523.1 293 524.4 291.5 524.9 290 524.7 288.5 524.6 287 524.8 285.5 524.1 284 521.9 282.5 518.7 281 518.6 279.5 518.6 278 519.1 276.5 520.5 275 521.7 273.5 523.3 272 524.9 270.5 525 269 524 267.5 522.2 266 521.6 264.5 522.2 263 522.8 261.5 522.6 260 522.3 258.5 522.6 257 523.2 255.5 522.9 254 521.8 252.5 521.3 251 522.4 249.5 524 248 524.7 246.5 523.9 245 522.6 243.5 521.7 242 520.6 240.5 518.8 239 518.6 237.5 518.6 236 519.9 234.5 522.9 233 524.6 231.5 525 230 525 228.5 525 227 525 225.5 523.8 224 522.2 222.5 521.8 221 522.6 219.5 523 218 522.1 216.5 520.6 215 519.9 213.5 520.3 212 520.7 210.5 520.8 209 521.3 207.5 523 206 524.7 204.5 525 203 523.7 201.5 521.6 200 520.4 198.5 520.2 197 520.2 195.5 520.3 194 521.4 192.5 523.7 191 525 189.5 525 188 525 186.5 523.7 185 523.1 183.5 522.9 182 522.1 180.5 521 179 520.5 177.5 521 176 521.2 174.5 520.1 173 518.6 171.5 518.6 170 520.4 168.5 522.6 167 524 165.5 524.8 164 525 162.5 525zM1112.7 564.3 1114.2 563.8 1115.7 562.2 1117.2 560.9 1118.7 560.8 1120.2 560.9 1121.7 560.2 1123.2 559.9 1124.7 561.4 1126.2 564.7 1127.7 567.4 1129.2 567.7 1130.7 566.2 1132.2 564.6 1133.7 563.6 1135.2 562.3 1136.7 560.6 1138.2 559.9 1139.7 561.7 1141.2 565 1142.7 567.4 1144.2 567.4 1145.7 566.4 1147.2 565.7 1148.7 565.4 1150.2 564.3 1151.7 562.4 1153.2 561.3 1154.7 561.8 1156.2 562.8 1157.7 562.3 1159.2 560.3 1160.7 559.9 1162.2 559.9 1163.7 561.4 1165.2 563.1 1166.7 564.5 1168.2 566.6 1169.7 568.2 1171.2 568.2 1172.7 568.2 1174.2 565.3 1175.7 562.4 1177.2 561.3 1178.7 561.2 1180.2 561 1181.7 561.1 1183.2 562.5 1184.7 564.7 1186.2 565.8 1187.7 564.6 1189.2 562.7 1190.7 562 1192.2 562.9 1193.7 563.7 1195.2 563.3 1196.7 562.7 1198.2 562.9 1199.7 563.5 1201.2 562.9 1202.7 561.2 1204.2 560.4 1205.7 562.1 1207.2 565.4 1208.7 567.9 1210.2 568.2 1211.7 568.2 1213.2 568.2 1214.7 567.3 1216.2 564.3 1217.7 560.4 1219.2 559.9 1220.7 559.9 1222.2 560.2 1223.7 561.4 1225.2 561.7 1226.7 562.4 1228.2 563.9 1229.7 564.8 1231.2 564.3 1232.7 563.4 1234.2 563.8 1235.7 565.8 1237.2 567.3 1238.7 566.6 1240.2 564.6 1241.7 563 1243.2 562.5 1244.7 562.1 1246.2 561.2 1247.7 561.3 1249.2 563.5 1250.7 566.7 1252.2 568.2 1253.7 567.4 1255.2 565 1256.7 563.1 1258.2 561.7 1259.7 560.1 1261.2 559.9 1262.7 559.9 1264.2 560.3 1265.7 563.2 1267.2 564.7 1268.7 564.5 1270.2 564.2 1271.7 565.1 1273.2 566.4 1274.7 566.8 1276.2 566.3 1277.7 566.4 1279.2 567.1 1280.7 567 1282.2 564.6 1283.7 561 1285.2 559.9 1286.7 559.9 1288.2 559.9 1289.7 561.1 1291.2 562.3 1292.7 564.4 1294.2 566.8 1295.7 567.5 1297.2 565.6 1298.7 562.7 1300.2 561.1 1301.7 561.5 1303.2 562.2 1304.9 562.3 1304.9 581.6 1303.2 583.1 1301.7 585.2 1300.2 586 1298.7 584.8 1297.2 582 1295.7 579.8 1294.2 579.2 1292.7 579.3 1291.2 579.5 1289.7 580.4 1288.2 582.9 1286.7 585.7 1285.2 586 1283.7 586 1282.2 585.1 1280.7 584.5 1279.2 584.7 1277.7 584.5 1276.2 583.4 1274.7 582.3 1273.2 582.2 1271.7 582.1 1270.2 580.8 1268.7 578.4 1267.2 578.4 1265.7 578.4 1264.2 581.4 1262.7 583.6 1261.2 584.7 1259.7 585.6 1258.2 586 1256.7 586 1255.2 584.4 1253.7 581.5 1252.2 579.8 1250.7 580.6 1249.2 582.2 1247.7 583.2 1246.2 583.6 1244.7 584.3 1243.2 585.3 1241.7 585.4 1240.2 583.9 1238.7 582.1 1237.2 581.8 1235.7 582.8 1234.2 583.4 1232.7 582.5 1231.2 580.8 1229.7 579.9 1228.2 579.9 1226.7 579.6 1225.2 579 1223.7 579.8 1222.2 582.7 1220.7 586 1219.2 586 1217.7 586 1216.2 586 1214.7 585.7 1213.2 584.4 1211.7 582.4 1210.2 579.9 1208.7 579 1207.2 580.5 1205.7 582.5 1204.2 583.1 1202.7 582.3 1201.2 581.7 1199.7 582.2 1198.2 582.8 1196.7 582.6 1195.2 582.1 1193.7 582.7 1192.2 584.1 1190.7 584.7 1189.2 583.4 1187.7 581.2 1186.2 579.9 1184.7 580.6 1183.2 581.8 1181.7 582.8 1180.2 584 1178.7 586 1177.2 586 1175.7 586 1174.2 586 1172.7 582.9 1171.2 580.8 1169.7 580 1168.2 579.4 1166.7 578.6 1165.2 578.7 1163.7 580.5 1162.2 582.4 1160.7 582.9 1159.2 582.1 1157.7 581.7 1156.2 582.9 1154.7 584.9 1153.2 585.9 1151.7 585.7 1150.2 585.4 1148.7 585.3 1147.2 584.6 1145.7 582.5 1144.2 579.7 1142.7 578.6 1141.2 580.4 1139.7 582.8 1138.2 584.2 1136.7 584.7 1135.2 585.1 1133.7 585.4 1132.2 584.5 1130.7 582 1129.2 579.2 1127.7 578.4 1126.2 579.7 1124.7 581.3 1123.2 581.7 1121.7 581.8 1120.2 582.6 1118.7 583.9 1117.2 584.4 1115.7 584 1114.2 583.9 1112.7 585.3z" fill="#000"/>
<path d="M162.8 528.9h0m.4-3.2h0m.5 3.3h0m.2-33.1h0m.1-1.5h0m.3 6h0m.2 29.9h0m0-32.3h0m.3 29.8h0m.2-2.1h0m.2-24.6h0m.4-2.9h0m.2 .2h0m.7 34.7h0m.4-3.8h0m0-.4h0m.6-3.8h0m.2-21.6h0m.1-1.9h0m.1-1.3h0m.4 22.1h0m.7 1.8h0m.1 1.4h0m.5-24.9h0m.6-5.6h0m0 8.3h0m.1-7.6h0m.1 9.4h0m.1-7.1h0m1 20.3h0m0 2.4h0m.3 1.4h0m.1-19.8h0m.1-7.1h0m0-2.4h0m0 11.5h0m.4-4.1h0m.1-2h0m0-5h0m.9 26.3h0m.4 3.7h0m.4-1h0m.4-16.6h0m.4-5h0m.3 3.1h0m1.1 21.8h0m.2-3.3h0m.6-16.8h0m.1-5h0m.3 23.6h0m.2-26.7h0m.4 3.7h0m.1 2.7h0m.8-5.7h0m.2 31.4h0m.7-8.2h0m.1 4.8h0m1.2-21.3h0m.1-2.2h0m.2 20.4h0m0-2.1h0m.2 5.9h0m0-1.5h0m1.5 .9h0m.5-3h0m.1-20.6h0m0-.9h0m.1 29.4h0m.4-2.6h0m.2-23.7h0m.2 26.5h0m.6-36.5h0m1.2 30h0m0-2.5h0m0 4.6h0m0 6.9h0m.3-2.1h0m.1-32.7h0m.4-2.3h0m.6 28.3h0m.7 4.9h0m.2-2.2h0m.5-30.9h0m0 1.5h0m.4 2.9h0m.6 29.6h0m.2-2.1h0m.3-30.9h0m.1 28.5h0m0 7.1h0m0-9.3h0m.1-23.3h0m.1 32.7h0m.1-37.6h0m1.1 1.6h0m.5-1h0m0 29.5h0m.2-25.5h0m.5-5.6h0m0 26.5h0m.1 8.7h0m.1-29h0m.1-3.1h0m0 .2h0m0 25.6h0m.1 5.2h0m.2-26h0m1.7 26.8h0m.1-2.2h0m.1-22h0m0 13.6h0m.1-10.9h0m.1 16.4h0m.1 6h0m.2-25.2h0m.1 16.1h0m1.6-1.2h0m0 1.6h0m.3 2.2h0m.1 1.9h0m.2-18.9h0m.6-1.5h0m.4 3.8h0m.6-2.1h0m.4-2.9h0m.4 .9h0m0 15.5h0m.3 3.7h0m.1-.7h0m1.1-20.7h0m.3-1.2h0m.4 21.3h0m0 2.6h0m.3 2.5h0m.1 5.3h0m.1-2.4h0m.1-25.7h0m.1 28.3h0m.3-27.7h0m.4-2.8h0m.1-1.5h0m1.1 25.8h0m.2 2.4h0m.4-4.8h0m.5-3.8h0m.5-22h0m.3 1.1h0m.1-3.9h0m.1-4.2h0m0 33.6h0m.1-2.2h0m2-22.4h0m0 26.9h0m.3-23.8h0m0 17.7h0m.2 9.5h0m.1-32.3h0m.1-3.9h0m.1 1.1h0m.3 23.4h0m.4 .4h0m.5-17.3h0m.3 21.8h0m.1-1.8h0m.4 5.5h0m.4-30.4h0m.3-.1h0m.3 21.9h0m.1 2h0m.1 1.5h0m.1 2.1h0m1.6-23.7h0m.2 17.7h0m.1 2.9h0m0 6.5h0m.2-4.4h0m.4-25.4h0m.1-2.3h0m.4 27h0m.6 1.6h0m0-23h0m.2-4.5h0m1.6 4.1h0m.2 20h0m.1 4h0m.1-20.6h0m.2-4.4h0m.2 22.7h0m2 1.3h0m.1-2.7h0m.1-16.6h0m.2-3.8h0m.1 1.2h0m1.4 2.9h0m.2 20.2h0m.1-2.7h0m0-19.8h0m.2-2.2h0m.7 25.2h0m.4-25.7h0m.2-3.3h0m.2 .7h0m.2 3.7h0m.7 2.8h0m0 23.2h0m.4-26.4h0m0 22.1h0m.3 2.3h0m1.3-27.6h0m0 25.2h0m.1-22.8h0m.1 26.8h0m.3-30.4h0m.1 32.3h0m.1-3.8h0m.4-27.4h0m.7 2.2h0m.5-4.1h0m1.1 32h0m0-1.3h0m.3-3.6h0m0-28.8h0m.1-.3h0m.1 2.6h0m.1 5h0m.2 24.2h0m.1-25.9h0m.3 28h0m.1 .5h0m.4-4.8h0m.1-18.7h0m.4-4h0m.9 .7h0m.7 19.6h0m0-4.1h0m.2 2.1h0m.9-16.1h0m.2 2.3h0m1.6 15.9h0m0-.9h0m.2-26h0m.3 23.5h0m.2-13h0m.1-5.8h0m.2 2.7h0m0 5.7h0m.2-14.1h0m.4 3.1h0m.4 21.8h0m.5 6.8h0m0-18.2h0m.1 16.7h0m.1-2.7h0m.1-12h0m.4-4.6h0m.9 17.4h0m.1 2.9h0m1.1-21.7h0m.1-4.5h0m.3 29.5h0m.5-27.6h0m0 24.7h0m.1 5.4h0m0 3.1h0m.1 .4h0m0-3.7h0m.1-7.7h0m.9 2.4h0m.2 5h0m.5-3.1h0m.3 4.8h0m.1-29h0m.2-4.6h0m0 34.6h0m.1-3.3h0m.2-1.4h0m0-27.7h0m.1 28.1h0m.4-3h0m0-2.4h0m.8-23.6h0m.3 1.9h0m.1-4.5h0m.1-1h0m.9 26.6h0m.2 4.6h0m.4 2.9h0m.1 2.2h0m1-35.5h0m.3 1.3h0m0 28.3h0m.1-5.4h0m.1-20.4h0m.6 23.9h0m.6 1.2h0m.1-1.6h0m0-23.8h0m.1 20.8h0m.3-24.8h0m.3 1.6h0m.1-6.6h0m.2 11.8h0m.5-10.4h0m.6 37h0m.1-2.8h0m.1-31.7h0m0 35.7h0m.1-33.9h0m0 5.1h0m0 21.5h0m.1-24h0m.1 22.7h0m.4-29h0m.9 8.1h0m.2 29.3h0m0-36.4h0m.3 31.9h0m0 7.4h0m0-11.9h0m.2-30.4h0m.1 5.6h0m0-5.9h0m.3 8.4h0m.8 24.7h0m0-2.2h0m.5 3.9h0m.4-27.5h0m.4 2.4h0m.2-5.1h0m.2 3.6h0m0-3.8h0m.3 6.9h0m.2 3.3h0m0 17.9h0m.4-1.4h0m0 4.8h0m.3-.5h0m.1-25.2h0m.4-1.2h0m.3 4.1h0m.2 5.4h0m0 18.7h0m.1-21.4h0m1.1 15.8h0m.1 2.5h0m.2-.2h0m.2-5.1h0m.3 10.2h0m.2-26.2h0m.2 2.1h0m.3 1.6h0m1.4 16h0m.4 3.4h0m.4-25.2h0m.1 24.7h0m.3-25.2h0m0 5.2h0m.2-2.8h0m.4 24.7h0m.4-29.3h0m.4 2.1h0m.1 21.9h0m.2 3.4h0m.6-23.2h0m.8 23.2h0m.1 .3h0m.9-2.9h0m.4-27h0m.4-.4h0m.1 2.9h0m.5 34.1h0m1-2.4h0m.1-1.2h0m0-3.3h0m.1-1.6h0m.2-4.7h0m.4 2.4h0m0-18.8h0m.3-7.5h0m.1 2.1h0m0-6.4h0m.2 2.7h0m.1 6.9h0m.1-9.3h0m1.2 28.8h0m0 .8h0m.7-4h0m.4-26.7h0m.3 2.7h0m0 6.7h0m0 5.1h0m.1-10.1h0m.1-4.7h0m.1 6.9h0m.4 23.9h0m0 1.7h0m.1-4.5h0m1.1-18.5h0m.2 4.6h0m.3-11.9h0m.3 27.3h0m0 4.4h0m.1-29.8h0m.2 28.3h0m0-20.2h0m.1-5.4h0m.7 3.8h0m1.1 2.6h0m.1-2.8h0m.2 23.1h0m.1 5.4h0m.3-2.5h0m.4-32.4h0m0 6.9h0m.6-1.8h0m.3-3.2h0m.6 28.1h0m.8 2.7h0m.4-35h0m.3 1.9h0m.1 4.1h0m.1 2.9h0m.2 30.6h0m.2-36h0m.8 27.9h0m.1 3h0m.3 .9h0m.3-28.5h0m.7 2.6h0m.4-2.7h0m.8-.4h0m0 29.1h0m.3 4.5h0m0-29.5h0m.1 27.1h0m.2 4.1h0m.1-11h0m.1 2h0m0-24.2h0m1-4.7h0m.3 36.3h0m.2-7.9h0m.1-25.8h0m0 32.8h0m.1-30.7h0m.3 25.6h0m.2-5h0m.1-27.4h0m0 35h0m.7-30.5h0m.6 24.6h0m.1 2.6h0m.3-24.3h0m.6-3.2h0m1 28h0m.2 1.7h0m.1-36.3h0m.1 4h0m.2 9.4h0m.1-4.7h0m.1 2.4h0m.4 20.5h0m1.3 .7h0m.1-3.8h0m.3 2.2h0m.2-26.4h0m.2 2.5h0m.3 7.5h0m.1-10.3h0m.5 4.6h0m1.5 1.1h0m0 17.6h0m.1 3.6h0m.1-16.6h0m.1-7.3h0m.1-2.5h0m0 11.7h0m.1-12.2h0m0 8.7h0m.3-3.7h0m.5 22.9h0m.3-3h0m.5 1.5h0m.9-14.4h0m.1-4.5h0m.5 .6h0m.2 26.7h0m.4 1.2h0m.1-3.6h0m.3-5.5h0m.1 7.4h0m.3-8.5h0m.4-28.4h0m.3 5.2h0m.4-1.1h0m.2 4.6h0m.1-7.3h0m1.3 33.3h0m.1-2.7h0m.8-26.9h0m.2 28.6h0m0-30.6h0m.1-.4h0m.2 28.6h0m.2-28.8h0m.3 32.5h0m0-29.1h0m.2 2h0m.7-7.1h0m.5 33.1h0m.1-3h0m0 5.1h0m.5-7.1h0m.7-22.6h0m.2-4.8h0m.1 2.9h0m.3-3.1h0m.1 24h0m.4 1.9h0m.1 9.1h0m.1-6.2h0m.9-3.4h0m.3-24.4h0m.2 2.3h0m0 2.2h0m.1-5.7h0m0 10.7h0m.6-2.5h0m.3 20.2h0m.8-20.1h0m.1 3h0m.2-1.6h0m1 19.1h0m0 .5h0m.2-19.8h0m.1-8h0m.1 5.2h0m0 19.9h0m.5-21.1h0m.1-4.3h0m1.2 8.8h0m.2-2.9h0m0-2.5h0m.1 .1h0m.2 26.2h0m.4-2.3h0m0-28.1h0m.4 32.6h0m1.5-27.7h0m.4 3.3h0m.6 25.4h0m0-27.4h0m.2 25.6h0m.4-30.8h0m.2 28h0m.1-20h0m0-6.8h0m.5-2.5h0m.3 3.9h0m1.3 24.4h0m.2 2.7h0m.1-30.1h0m.2 31.8h0m.4-30.1h0m0-2h0m.1 3.8h0m.1-6.9h0m.1-1.5h0m.2 13.9h0m0-2.4h0m.8 19.6h0m0 4.9h0m.1-25h0m.3 4.5h0m.7 18.5h0m1.1 2.6h0m.1-25.3h0m.3-1h0m.1 26.2h0m.2-2.2h0m.1-3h0m.4-17.1h0m.5 16.7h0m.4 4.1h0m.1-1.4h0m.3-33.5h0m.3 7.8h0m.1-4.9h0m0-2.7h0m0 10.2h0m.2-5.3h0m1 26.3h0m.3-2.3h0m.3 4.4h0m.1-24h0m.2 2.4h0m.5 2.4h0m.1 24h0m.2-9.7h0m.6-19.1h0m.2 21.2h0m.2-20.9h0m.1 4.8h0m.1 18.5h0m.1 3.4h0m.4 4h0m.6-7.2h0m0-2.3h0m.1-2.9h0m.1 9.8h0m1.4-26.1h0m0 .9h0m.3 2.5h0m.1 12.1h0m.7 5.5h0m.1-2.5h0m.5-16.3h0m.7 2.3h0m.2-3.8h0m.5 25.8h0m.4-.3h0m.4-2.7h0m.3-2.8h0m.3-22.4h0m.1 5.4h0m.2-2.6h0m0-2.5h0m.9-3.8h0m.1-2.8h0m.3 34.9h0m0-37.9h0m.1 36.4h0m.1-3.2h0m.8-25.7h0m.2-7.1h0m.1 .7h0m.4 31.5h0m.1 4.7h0m.4-3.1h0m.1 2.8h0m.5-28.8h0m.2-6.2h0m.4 2h0m0 1.9h0m1.2 26.1h0m.1 8.4h0m.1-33.8h0m.1-4.1h0m.1 2.9h0m.1 31.7h0m0 2.1h0m.9-4.1h0m.7-31h0m.2 3.1h0m.3 24.1h0m.1-21.2h0m.1-8.7h0m0 37.2h0m.1-2.2h0m0-2.4h0m.8-4.3h0m.6 2h0m.1-21.5h0m.2-1.6h0m.4 18.3h0m.6-13.5h0m0-.5h0m.3 2.1h0m0-4.1h0m.2-5.8h0m.3-2.8h0m.1 35.1h0m.5-3.6h0m.1-2.5h0m0-2.5h0m.3-17.5h0m0 26.9h0m.4-34.3h0m.1 9.2h0m.2-9.4h0m.3 4.2h0m0 8h0m.1 20.5h0m.8-5.5h0m.6 3.7h0m.2 1.2h0m.3-22h0m.1-12h0m0 5.5h0m.2 4.6h0m0-7.4h0m.2-4.3h0m.4 9.2h0m.3 22.2h0m.3 6.1h0m.4 2.3h0m0-7.3h0m1.3-22.2h0m.2 4.3h0m.1-4.6h0m.1 27.8h0m.1-25.2h0m.4-6.2h0m.7 28.9h0m.2-2.9h0m.5-21.9h0m.2 5.6h0m.5-12.1h0m.1 33.2h0m.4-29.4h0m.2 5.3h0m0 21.8h0m.5-4.8h0m0-24.4h0m1.8 6.2h0m.1 15.9h0m.1-20.6h0m.1-1.6h0m0 30.2h0m.2-4.7h0m0-25.9h0m.3 30.2h0m.1-25.6h0m0 23.6h0m.7-28.5h0m.4 2.1h0m.2 1.8h0m.4 24.8h0m.3 2h0m0-24.8h0m.3 26.9h0m.4-7.1h0m1 8h0m.3 2h0m.1-32.3h0m.1 32.8h0m0-10.6h0m.3 5.5h0m0-3.8h0m.2-27.5h0m.1 .9h0m.4 26h0m.1-2.8h0m.3 4.8h0m.2 2.7h0m0 1.2h0m1.3-7h0m.1-2.3h0m.1 3.2h0m0-20h0m.1-4.3h0m.3 2h0m1.6 18.6h0m.3 5.1h0m0 .6h0m.1-27.1h0m.1 24.3h0m.4-18.7h0m.3-9.8h0m.1 14.3h0m.4-2.3h0m.3-4.5h0m.6 20.6h0m.1 9.8h0m.4-5h0m0-7.9h0m.3 10.9h0m.3-5h0m0 7.1h0m.1-38.1h0m0 10.3h0m0-2.5h0m.7 24.3h0m.1-26.9h0m.3 22.9h0m0 2.1h0m1.4-24.2h0m.1 2h0m.3 2.6h0m.8 27.8h0m.1-6.4h0m.1 6.4h0m.4-2.4h0m1.3-34.4h0m0 4.7h0m.3 27h0m.2-29h0m.7 30.3h0m.3-3.5h0m.1-29.2h0m.3 2.7h0m.8 3.1h0m.7 1.6h0m.3 28.8h0m.1-8.4h0m.2 4.3h0m.1-29.3h0m0 2.5h0m0 29.4h0m.2-4.8h0m1.3-2.6h0m.8-20.9h0m0 22.7h0m0-17.4h0m.1-12.8h0m0 2.3h0m.1-2.3h0m.4 4.2h0m.1 22.6h0m.8-2.9h0m.1 3.9h0m.2-21.3h0m.6 4.9h0m.3 17.3h0m.3-2.3h0m.3-2.4h0m.5-11h0m.7-4.1h0m0 1.1h0m1.4 18.5h0m.1 2.1h0m.6-21.3h0m.3 .4h0m0 2.3h0m.4 16.1h0m.2-18h0m.1 21.1h0m.5 3h0m.2-30.6h0m0 22.9h0m0-18.4h0m.3-2h0m.9 21.2h0m.2 2.5h0m0 .4h0m.3-19.4h0m.5-4.3h0m1.2 .7h0m.1 1.3h0m.1 18.2h0m0 .9h0m.1-16.9h0m0 20.7h0m.3-.8h0m1.2 6.6h0m.1-7.4h0m.2 2.8h0m.1-4.9h0m.4-23.7h0m0 1.6h0m.1 29.8h0m.1-26.8h0m.4 1.8h0m1.5-5.4h0m.1-3h0m.1 .9h0m.2 25.5h0m0 6h0m.6-3.4h0m.1 4.5h0m.1-2.3h0m.3 .5h0m.5 5.3h0m.2-10h0m.3 8.7h0m.5-32.9h0m.4-3.2h0m.1 .7h0m.4 31.2h0m.5 4.6h0m.1-8.3h0m.1 6.3h0m.4-32.3h0m.1 36h0m.1-33.5h0m.2-4.9h0m1.5 30.4h0m.4-6.9h0m0 9.2h0m.1-.4h0m0-7.1h0m.4-21.3h0m0 24.1h0m.2-22.5h0m1.1 2.4h0m.3 18.4h0m.3-2.8h0m.1 4.5h0m.3-28.2h0m.1 5.2h0m.1-2.3h0m0 10.5h0m.1-2.4h0m0-3h0m.2-7.9h0m1.7-.7h0m.1 .4h0m.2 10.3h0m0-8.2h0m0 25.7h0m0-20.2h0m.1 22.6h0m.2-17.9h0m0-6.9h0m1.7 26.9h0m.7-27h0m0-1.9h0m.1-4.2h0m.1 28.6h0m.1-20.5h0m1.2 26.2h0m.1-1h0m.2-2.6h0m.2-25.5h0m0-.5h0m.7 4.1h0m2.1 25.2h0m0-30h0m.5 29.6h0m0-29.2h0m.2 1.8h0m.1 24.4h0m.2-21.8h0m1.1 18.8h0m.1-20.7h0m.1 23h0m.1 .6h0m.1-25.9h0m1.5 19h0m.4 2.1h0m.1 3.5h0m1.1-17.1h0m.1 16.8h0m.2-19h0m0-2.9h0m.1 21.4h0m.2-20.3h0m.5 18.7h0m.5-1.8h0m1.2-18.3h0m.3-5h0m0 7.2h0m.2-5.2h0m.2-3.5h0m.3 30.6h0m.4-4.4h0m.2-2.1h0m.1 5.3h0m.9-21.5h0m.7-8.5h0m.2 34.1h0m0-33.3h0m.3 30.5h0m0-28h0m0 31.6h0m0-6.5h0m.3 5.1h0m.5-23h0m.7-3.5h0m0-.2h0m.8 29.6h0m.1-2.6h0m.3-2.3h0m0-2.9h0m.5 3h0m.7-4.2h0m.2-23.6h0m.1 29.7h0m0-27.4h0m.5 2.1h0m.1 21.4h0m.1-29.5h0m0 34h0m.3-32.4h0m.6 29.8h0m.4 1.9h0m.1-5.6h0m.3-23.1h0m.5 3h0m.4-2h0m.5 28.1h0m0-2.5h0m.2-1.8h0m.5 7.7h0m1.3-36.5h0m.7 3.9h0m.6-.1h0m.3 25.4h0m.3-27.6h0m.1 32.1h0m1.1 .5h0m.1 .1h0m.7-5.9h0m.1 2.6h0m.5-24.8h0m.2 30.8h0m0-9h0m0 2.8h0m.1-27.3h0m.1-.9h0m.3 36.1h0m.4-.4h0m.4-27.7h0m.2-3.5h0m0 26.9h0m.1-27.2h0m.2 29.7h0m.4-2.3h0m.2-8.2h0m.1 4.9h0m0-27.3h0m.5 33.9h0m.7-30.9h0m.3-2.4h0m.1 8.6h0m.1-16h0m0 13.4h0m0-8.4h0m.2-2.7h0m.3-2.8h0m.2 30.7h0m.5-2h0m0 2.4h0m.5-4.4h0m.8-22.3h0m0 1.4h0m.1 10.2h0m0 2.7h0m.1-8h0m.1-6.8h0m.2 5.5h0m0 4.6h0m.7-.1h0m.1 20.1h0m.1-15.7h0m.1-3.2h0m.3 20.1h0m0-3.7h0m.3 8.8h0m.1-.2h0m1.2-33.2h0m.3-2.8h0m.2 29.1h0m0-27.7h0m.2 6.3h0m0 23.6h0m.1-36.1h0m0 35.3h0m.3-32.5h0m0-2.8h0m1.2 9.8h0m.5-5.1h0m.2 32.1h0m0-.7h0m.5-28.7h0m.6 26.2h0m.9-.9h0m.1-24.1h0m.6 2.3h0m0 25.1h0m.5-27.2h0m1.1 23h0m0-3.4h0m.1-25.8h0m.1 9.5h0m0 22.1h0m.1-29.6h0m.6 4.5h0m.3 28h0m.9-6.3h0m.6 .5h0m.1-3.1h0m.4-22.4h0m0-1h0m.2 2.4h0m.1 2.8h0m.3-4.7h0m.1 7.4h0m.4-.2h0m.2 19.5h0m.3 8.5h0m.1-5.7h0m.2-5.9h0m0 8.8h0m.4-28.5h0m.8-7h0m.2 6.1h0m0 1.7h0m.2-9.4h0m0 31.3h0m.1 7.7h0m0-33.8h0m.1 7.4h0m.2 21.2h0m.1 9.3h0m.6-37.7h0m0-4.4h0m.3 9.3h0m0-1.9h0m.1-5.1h0m.2 29.4h0m.1 1.5h0m.6-23.5h0m0-3.8h0m.1 22.9h0m.3-24.5h0m0 2h0m.7 32.1h0m1 1.9h0m.2-5.4h0m.1 6.3h0m.3-10.9h0m0 1.8h0m0 5.5h0m.1-23.1h0m.2-5h0m.4 2.4h0m1.7 21.9h0m0 3.2h0m.2-6.3h0m0-19.5h0m.4 24.2h0m.3-23.2h0m0-2.2h0m1.1 28h0m.7 1.2h0m.4-5.3h0m0-2.1h0m0-25.1h0m.2-1.9h0m.1 31.2h0m.2-34.5h0m.2 7.7h0m.3-6.7h0m1 29.2h0m.1-22.9h0m.1-3.3h0m0-1.8h0m.3 32.3h0m1.1-29.2h0m.1 1.8h0m.3-5.4h0m.2 2.3h0m.5 27.2h0m.1-33.5h0m.2 35.8h0m.6-25.7h0m.1 21.4h0m.1-28.8h0m.2-2.2h0m0 7.1h0m.4-2.3h0m.2 26.7h0m.1-2.3h0m.3 3.5h0m.1-23.1h0m.2-2.3h0m.6-1.6h0m0-3h0m.1 2.2h0m.1 28.8h0m.5-6.8h0m.1-21.1h0m.1 6.3h0m.1 20h0m.1-22.3h0m0 4.2h0m.2 15.3h0m.1 2.9h0m.1-29.1h0m.1-1.9h0m.7 3.1h0m.1-5.7h0m.5 8.6h0m.3 11.2h0m.1-3.2h0m.3-13.7h0m.2 11.3h0m.1 12.9h0m.1 4h0m0-.7h0m1.7-15.4h0m0-12.3h0m.1 15.6h0m.1-13.8h0m0 25.9h0m.1-20.9h0m.1 3.3h0m.2 18.4h0m.3-24.4h0m0 21.3h0m.4-16.8h0m.4 2.9h0m.1 20h0m.1-18.1h0m.2-5.7h0m.1 19.3h0m.3 1.8h0m.4-22.6h0m.4 2.3h0m.1 27.4h0m.3-24.3h0m.2 20h0m.1 3h0m.4-5.4h0m.4 6.1h0m.1 2.2h0m0-29.5h0m.3 24.7h0m.1-2.1h0m0 8.5h0m.7-33.2h0m.2-6.9h0m.1 1.5h0m.9 31.3h0m.2-1.9h0m0-26.9h0m.3 3h0m.1 2.4h0m.4 25h0m.9-26.4h0m.3-5.2h0m0 37.6h0m.1-34.1h0m0-3.1h0m.1 29.8h0m.1-2.5h0m.3 9.1h0m.3-4.3h0m.2-1.2h0m0-.5h0m.3-2.2h0m.2-31.6h0m.2 29.7h0m0 9h0m.2-39.7h0m.1 8.5h0m.1 4.1h0m.2-6.9h0m.9 4.6h0m.1 21.5h0m.1 9.5h0m0-2.9h0m.1-2.5h0m.2 7.1h0m.4-14.1h0m.7-19.3h0m.4 20.5h0m0 7h0m.1-30.9h0m.3 32.9h0m.3-6.9h0m.2 2h0m1.4-26.2h0m.1-.1h0m.7 2.7h0m.1 25.4h0m.1-4h0m.2 3h0m.6-21.7h0m0-2.8h0m.3 26.3h0m.3-25.2h0m.4 27.5h0m.1-6.4h0m.4-17.1h0m.2 19.7h0m.4-28.2h0m.1 26.9h0m0-31.3h0m.1 2.2h0m.3 26.7h0m.3-18.9h0m0-3.4h0m.1 24.1h0m.2-20.3h0m.1-.9h0m0 3.4h0m1.8 18.7h0m.2 1.8h0m.1-5.6h0m.4 7.1h0m.5-24.2h0m.2 4.9h0m.5-2.6h0m.6 18.6h0m0 1.1h0m.5-3.6h0m0-18.9h0m0 1.4h0m.5 2h0m.7 15.4h0m.6 4.6h0m.3-31.3h0m.1-2.3h0m0 4.7h0m.1 2.8h0m.2 23.7h0m.6-31.8h0m.3 34.3h0m.5-4.4h0m.3-25.9h0m.1 28.6h0m.2-29.6h0m.4 33.9h0m0-30.5h0m.5 24h0m.2 2.6h0m0 2.3h0m.3 .6h0m.1-27.3h0m0-6.8h0m.6 4.8h0m0 25.2h0m.2 1h0m.1-28.3h0m.5 24.4h0m.1-21.4h0m.5-2.3h0m0 4.3h0m1.7 15.5h0m.1 3.4h0m.6-22.3h0m0 2.7h0m.3-6.8h0m.2 9h0m.5-9.4h0m.2 2.4h0m1 30.4h0m.6 2.2h0m.3-6h0m.1 9h0m0-12.8h0m.2-15.3h0m.1-.2h0m.7 2.7h0m.4 13.9h0m.3 4.9h0m.5-1.9h0m.6-25.6h0m.3 33h0m.3-9.5h0m.1-20.1h0m.2 25.6h0m0-3.2h0m0-24.8h0m.5 30.2h0m.3-3.7h0m.1-28.7h0m.3 2.4h0m.2 3h0m.6 25.4h0m.2 .4h0m.3-26.5h0m.3-6.3h0m.3 32.8h0m.3-4h0m.2-25.1h0m1.6-2.1h0m.3 5.3h0m.2-2.4h0m.5 23.3h0m.2 6.9h0m.1-4.3h0m.2 1.7h0m1.7-5h0m.1-23.1h0m0 26.9h0m.3-24.4h0m.1-2.7h0m0 26.6h0m1.5 4h0m.5-6.8h0m0 2.6h0m.1 2.7h0m.2 1.9h0m.3-36h0m0 9h0m.1-5.3h0m.1-2.4h0m.3 35h0m0-4.5h0m0-25.1h0m.2 30.6h0m.6-8.5h0m.6 .2h0m.3-24.6h0m.2 31.7h0m.2-27.9h0m0 17.7h0m.2-22h0m.1 31.6h0m.1-2.2h0m.1-1.4h0m.8-.5h0m.7-22.5h0m0-3.8h0m0 23h0m.1-17.2h0m.3 15.2h0m.2-20h0m.7 23h0m0 1.5h0m.2-4.2h0m1.3-13.8h0m0-9.3h0m.1-4.3h0m.1 1.2h0m0 9.2h0m0-3.2h0m.2 9.1h0m.7 20h0m.1-5.2h0m0-4.8h0m.1 2.6h0m.1 4.5h0m.1 7.4h0m.1-35.9h0m.3 8.2h0m.2-12.8h0m.3-.4h0m0 3.6h0m.1 35.4h0m0-31.3h0m.1 2.8h0m.1 23.6h0m.2-19.7h0m.2 25.1h0m.3 1.5h0m.2-12.2h0m.1-2.7h0m.4 5.2h0m.8-22.9h0m.1 2.1h0m.1 3.4h0m.9 21.7h0m.1-5.4h0m0 2.6h0m.4-26.3h0m.1 5.2h0m.1 23.3h0m0-26.2h0m2.3 21.9h0m.1 1.9h0m.4 2.6h0m.1 .5h0m.1-36.5h0m.2 4.9h0m.2-4.7h0m0 7.2h0m.1-5.2h0m.9 31.6h0m0-2.2h0m1.4 1h0m0-24.4h0m.3 29.6h0m0-34h0m.1 26.3h0m.2-24.7h0m1.1 26.6h0m.3-20.9h0m.4-3.9h0m.1 19.8h0m.4 2.3h0m.2-20.8h0m.1 25h0m.8-30.9h0m.2-2.2h0m.1 7h0m.2 5h0m.1-8.1h0m.3 5.5h0m0 27.1h0m.1-25.1h0m.5 23.6h0m.2-27.2h0m.1 19.7h0m.2-19.1h0m0 21.3h0m.3 3.5h0m0-8.4h0m1.1-23.5h0m.2 3.9h0m.1 27.5h0m.1-27.8h0m.1 8.3h0m0-10h0m.1 4.1h0m.2 26.9h0m0-4h0m.4-19.9h0m.6 29.4h0m.2-29.1h0m.4-1.5h0m.3 25.9h0m0-3.1h0m0-18.7h0m.6 21.6h0m.2-24.9h0m.3-5.3h0m.1 3.2h0m.1-9.4h0m.1 1h0m.1 2.8h0m1 30.6h0m0 2.6h0m.2 .2h0m.1-31h0m.1 .2h0m.2 6.1h0m.6-3.1h0m1.4 28.6h0m.1-4.4h0m0-19.5h0m0 21.5h0m.2 2.4h0m.3-26h0m.1-2.1h0m.7 27.4h0m.1-.8h0m.2-1.8h0m.5-3.1h0m.9 2.1h0m.1-22.1h0m.1 20.5h0m.1-22.8h0m.2 19.4h0m.5-25.2h0m.2-1.5h0m.7 28.1h0m0-18.3h0m.1-3.1h0m.3 23.9h0m.1-25.1h0m.9 24.4h0m1.3-32.2h0m0 37h0m.3-30.5h0m.1-1.8h0m.1 5.7h0m0 1.8h0m.2 20.6h0m.1 6.8h0m.1-9h0m.4 4.4h0m.9-27h0m.1-.6h0m0 26.7h0m.3-5.1h0m.2-17.7h0m.1 1.4h0m.6 18.3h0m.7 4h0m.1-24.8h0m.2 1.4h0m.2 16.1h0m0 2.2h0m0 5h0m.5-21.3h0m.6 23.8h0m.3 1.1h0m.4-6.8h0m.4-19.1h0m.1 14.9h0m0-13.3h0m.4 1.8h0m.4 17.5h0m.1-2.3h0m.2 6.5h0m.3-8.8h0m.2-16h0m.5 4.2h0m.4-2.3h0m0 18.9h0m.5-2.5h0m.1 2.2h0m.1-5.5h0m.2-17h0m.1-5.1h0m.1 1.8h0m.4 5h0m.2-12.7h0m0 1.7h0m.2 2.5h0m.1 30.3h0m.3 2.3h0m.2 1.8h0m.3-6.7h0m.7-22.4h0m.8-5h0m.1 2.7h0m.7 29.3h0m.4-3.3h0m.3 6.5h0m.5-.8h0m.8-32.7h0m.1 1.6h0m0 25.3h0m.3 2.3h0m.3 2.9h0m.1-33.7h0m.3 34.6h0m.5 3.1h0m.1-32.6h0m.1-5.7h0m.1 3.4h0m0-3.1h0m1 29.9h0m.1-26h0m.4 2.8h0m.2 28.8h0m.2-34.8h0m0-.7h0m.2 27.7h0m0 10.6h0m.1-5.3h0m1.3-6.4h0m.3-29.6h0m.5 30.9h0m0 2.8h0m.1-20.1h0m.3 1.3h0m0 19.2h0m0-31.4h0m0 8.3h0m.1-12.6h0m.4 6.5h0m.3 3.7h0m.8 23.2h0m.6 2h0m.4-19.5h0m.1 13.1h0m.1-18.3h0m0 29h0m.2-2.3h0m.2-24.7h0m.1-2.2h0m.1 28.3h0m.6-4.7h0m.5 3.4h0m.4-23.3h0m0 17.9h0m.4-19.8h0m.1 25.2h0m.5-3.6h0m.2-17.4h0m.6 20.8h0m0-2.7h0m.1-21.6h0m.2 2.4h0m.1-3.6h0m.5 24.7h0m.4 .3h0m.6-5.8h0m.1 5.8h0m.5-31.8h0m.2 2.9h0m0 25.5h0m0-20h0m.1-7.6h0m.5 5.2h0m.7 1h0m0 2.5h0m0 15.4h0m.4 4.7h0m.3-2.2h0m.1-22.2h0m.8 5.1h0m.1-3.4h0m.1-.3h0m1.2 19.3h0m0 10.1h0m0-9.1h0m.3 3.7h0m.2 7h0m.2-3.9h0m.9-9.1h0m.1-19.8h0m.1 23h0m0 4.9h0m0-30.7h0m.1 28.1h0m0-23h0m0-5.2h0m.8-2.6h0m.3 37.9h0m.2-41.4h0m.3 .3h0m.2 8h0m0-3h0m.3 27.8h0m.9-3.8h0m.4-29.7h0m.1 5.3h0m.1-3h0m.3 6.7h0m.2 21.1h0m.1-20.1h0m0 24.2h0m0 .5h0m0-3h0m1.8-18.9h0m.5-2.9h0m.3-2.4h0m0-.1h0m.5 22h0m.7 2.3h0m0 1.5h0m1-23.3h0m.1 4.4h0m.2-5.3h0m.3 2.3h0m.5 22.8h0m.3-.5h0m.2-5.6h0m.5-16.1h0m.4-8.2h0m0 1.2h0m.1 10.6h0m0-6.2h0m.1 8.6h0m.2-18.2h0m.1 40.7h0m0-40.1h0m.3 31.7h0m.5-24.7h0m.1 29.9h0m.1 4.1h0m.3-27.4h0m.2 20.8h0m.1-23.5h0m.4-.1h0m1.8 24.3h0m.4-2.5h0m0 6.5h0m.2-33.9h0m.3 3.1h0m.2 30.6h0m.1-32.9h0m.9-6.8h0m.4 38.1h0m.3-36.3h0m.1 5.7h0m.2 3h0m.1 24.4h0m.4 2.8h0m.2-31.6h0m.3 1.4h0m.3 30.6h0m.2-1.7h0m.1-29.5h0m.4 26.9h0m.3-21.5h0m.1-2.7h0m.4-3h0m1.2 22.6h0m.3-16h0m.3 19.3h0m.3-30.1h0m.1 5.8h0m.1 22.1h0m.1-27.2h0m0 7.1h0m.1-4.6h0m.6 1.8h0m.2 23.7h0m.1 .4h0m.2-30.3h0m0 25.5h0m0-22.7h0m.1 7.7h0m.3-3h0m0-2h0m.1 22h0m.2-15.3h0m.1-13.3h0m.3 16.8h0m.4 21h0m.4-29.1h0m.3 19.8h0m0 4.3h0m.7-2.7h0m.4-16.1h0m.1 4.8h0m.1-9.7h0m.2 6.5h0m.4 14.2h0m.4 3h0m.5 .3h0m.1-20h0m.1 2.5h0m.1-4h0m.5 21.1h0m.4-3.1h0m.4 5.8h0m.6-28.5h0m.3-3.8h0m0 9.8h0m0-4.3h0m.1 2.5h0m.5-6.7h0m0 36.4h0m.1-8.5h0m.5 5.3h0m.9-23h0m.4-2.5h0m.1-.7h0m.6 .2h0m.1 21.5h0m0-23.9h0m.1 26.9h0m.1-.9h0m.2-4.4h0m.4-17.5h0m1.2-6.9h0m.2 24.2h0m0 4.7h0m.4-24.1h0m0-2h0m.2 23.6h0m1.2 1.8h0m.4-2.3h0m.1 9.4h0m.1-29.9h0m.2 30.8h0m0-33.7h0m0 30.2h0m.2-34.2h0m.1 2.2h0m.7-2.9h0m.6 6h0m.1 27.1h0m.1-1.9h0m.2-2.7h0m.1 9.2h0m0-32.9h0m0 31h0m.3 3.1h0m.1-35.3h0m.8 23h0m.3-26.2h0m.1 6.3h0m.1 24.4h0m.1-1.6h0m2.2 9.1h0m.1-34.9h0m.2 26.9h0m0-30.8h0m.3 2.2h0m.1 32.9h0m.1-6.5h0m.1-22h0m.1-4.5h0m.2 24.2h0m.1 13.4h0m1-30.4h0m.5 3.4h0m.1-2.6h0m.2 19.8h0m.1-2.2h0m.1 1.4h0m2.3-15.6h0m0-8h0m0 5.5h0m.1-2.9h0m.4 16.8h0m0-16.3h0m.1 22.3h0m0 2.1h0m.2-2.3h0m.9-3.1h0m1-15.3h0m.2-6.5h0m.1 3.9h0m.3-9.3h0m.1 30.5h0m0-2.2h0m.7 5.3h0m1.3-.7h0m.1-29.1h0m.1 1.8h0m.3 23h0m.2 2.4h0m.6-22.8h0m.4 19.6h0m.2 5.4h0m.1-2.6h0m.2 2.6h0m.6-33.3h0m.1 2.8h0m.1-6.7h0m.4 8.7h0m1.2 31.1h0m.2-2.4h0m0 2.5h0m.2-5.1h0m.6-2.1h0m.3 3.4h0m.1 4.4h0m.1-33.8h0m0 24.7h0m.1-21.6h0m.1 33h0m0-9.3h0m.1-20.6h0m0 2.6h0m.1 22.7h0m.1-30.8h0m0 21.2h0m1.3 .9h0m0 1.2h0m.5-17h0m0 14.2h0m.2-20.9h0m.1 1.8h0m.1 2.4h0m0-8.4h0m.2-.4h0m1.5 27.1h0m.2-22.4h0m0 2.8h0m.1 24.8h0m.1-22.5h0m.1 22.7h0m.6-7.2h0m.2-20.5h0m.2 7.2h0m.2-3.2h0m.4 23.2h0m0-20h0m.1-3h0m0 19.8h0m.6 2.4h0m1.1-20.6h0m.7 17.1h0m0 2.6h0m.1-28.3h0m.2 3.6h0m0 26.3h0m.1-23.7h0m0-5h0m1.8 33.2h0m.7-32.5h0m.4 4.5h0m0 24h0m0-29.5h0m.2 27.4h0m.1 5.4h0m.2-28.6h0m1.2 3.2h0m.2 26.2h0m0-2.4h0m.1-28.2h0m0 31.7h0m0-7.8h0m.1-18.3h0m.2-4.1h0m.3 24.4h0m1.2 6.8h0m.5-29.5h0m0-2.5h0m.1 26.6h0m.3 1.5h0m.5-4.3h0m.1-26.5h0m.4 34.9h0m1-32.2h0m.2-4h0m.4 32.5h0m.2-31.2h0m.5 27.9h0m.1-28.2h0m.3 30.6h0m.3-28.3h0m1.5 32.6h0m.1-2.3h0m0 4h0m.2-1.3h0m0-7.8h0m.4 2.4h0m.8-27.4h0m0-2.4h0m.1 33.9h0m.2-29.3h0m1.4 22.4h0m.1-2.2h0m.1-2.2h0m.2 11.8h0m.2-4.3h0m0 2.1h0m.6-21.3h0m0-4.7h0m.2 1.7h0m.6 19.7h0m.1-3.3h0m.2-1.5h0m.1-10.4h0m.1-2.7h0m.1 17.9h0m.2-19.7h0m1.6 16.3h0m.1-2.6h0m.6 4.2h0m.1-13.4h0m.3-4.1h0m0 1.5h0m1.8-9h0m0 8.4h0m.3 18.9h0m0-1.8h0m0-2.3h0m.2-22.8h0m.2 5.3h0m.3 22.5h0m.2-24.8h0m0-6.6h0m.2 9.6h0m.3 22.7h0m.1-34.7h0m.1 31.2h0m.1-30.6h0m0 4.1h0m0 2.5h0m.3 2.9h0m.2-6.2h0m.7 32.9h0m.7-3.6h0m.1-27.3h0m.1-1.4h0m.7 3.7h0m1 23h0m.4 3.5h0m0-1.8h0m.1-24.7h0m.4-4.3h0m.2 1.3h0m.4 27.1h0m.1-.3h0m.2-2.9h0m.2-20.6h0m.1-4.2h0m0 1.8h0m1.1-6.5h0m.4 32.7h0m0-21.1h0m.1 16h0m0-18.5h0m.2-4.8h0m.1 28.6h0m.1-25.9h0m0-8.1h0m0 30.6h0m.4 2.7h0m.4-30.5h0m.4 27.7h0m.1-2.2h0m.7-24.1h0m.3 6.5h0m.1 23.8h0m.1-27.4h0m0 5.6h0m0-9.7h0m0 26.4h0m.3 9.6h0m.1-32.4h0m.2-5.7h0m.2 35.8h0m.2-5.2h0m.3-1.6h0m.6-22.4h0m.2 25.4h0m.1-.9h0m.3-20.4h0m.1-5.1h0m.4 2.9h0m.8 33.5h0m.6-5.5h0m.4-4.4h0m.1-19.1h0m.1 26.8h0m0-30.9h0m0 33.3h0m0-7.2h0m.2-24.7h0m.4 24.2h0m.9 1.6h0m.1-3.4h0m.9 4.8h0m.4-29.4h0m0 4.5h0m.3-2.9h0m0 28.4h0m.2-2.3h0m0-4.4h0m.2 2.4h0m1.2 1.1h0m.2-3.1h0m.3 2.1h0m.1-22.3h0m.8-.9h0m0 4h0m1 23.4h0m.7 .9h0m.1-5.4h0m.1 2.2h0m.3-26.9h0m.2 .8h0m.6 2.8h0m.5 24.1h0m.3-3.8h0m.5 4h0m.2-30.5h0m.5 2.3h0m.1 24.5h0m.1-28.3h0m.6 30.2h0m.1-3.6h0m1.7-28.3h0m0-2.9h0m.4 34.3h0m0-2.6h0m.3-21.6h0m0-2.5h0m.1-7.8h0m.2 6.4h0m.3 30.1h0m.5-5.5h0m.1 2.2h0m.4-5.3h0m.7-15.5h0m.1 18.2h0m0-5.1h0m.2 2.9h0m.4-17.6h0m.1 19.8h0m1.4 7.5h0m.4-10.2h0m.1-14.3h0m.1 19.8h0m.1-3.3h0m.4 5.6h0m0-16.9h0m.3-3.6h0m.3 15.2h0m.1 7h0m.3-9.3h0m.3 11.8h0m.3 2.4h0m.1-6.7h0m.5-17.6h0m.6-4.5h0m.1 1.6h0m1 17.6h0m.2-28.4h0m.3 30.3h0m.1 3.1h0m.1-35.6h0m.2 27.4h0m.2-22.9h0m.6-5.5h0m0 8.4h0m0-1.8h0m.2 30.1h0m.4-4.9h0m0 2.8h0m.1-29.6h0m0-1.6h0m1.9-2.7h0m.1 32.4h0m0-24.9h0m.5-2.5h0m0 32.7h0m.1-35.4h0m.3 32.6h0m0 3.2h0m.5-7.5h0m.5 4.6h0m0-2.7h0m.1-2.7h0m0 5.1h0m.8-30.4h0m.4 26.3h0m.3 7h0m0 .4h0m.1-10.5h0m.1 8.1h0m.3-2.7h0m.1-30.6h0m.2 5.2h0m1-1.6h0m.3 2.6h0m.2-4.8h0m.1 .1h0m.1 22.9h0m.1 1.6h0m.5 2.3h0m.8-29.3h0m.1-1.4h0m.2 7.3h0m.3-3h0m.1 31.8h0m0-26.6h0m.1 27.9h0m.2-9h0m.6 5.5h0m1.2-24.4h0m.4-3.9h0m.1 26.3h0m.1-28.4h0m.1 33h0m.3-7.2h0m1.1-21.7h0m.3-1.3h0m0 25.7h0m.1-21.8h0m0 16.8h0m.8-22.5h0m0 9.4h0m.1 16.3h0m.4-21.4h0m.3-1.1h0m.1 3.8h0m.1 22.4h0m.2-2.5h0m.3-1.9h0m.8-.6h0m.4 5.1h0m0-2.1h0m.2-20.7h0m.1 4.4h0m.2 19.5h0m.9-6.3h0m.4 1.8h0m.2 .8h0m.2-23.3h0m.1-4.6h0m.1 7.3h0m0-10.4h0m.2 12.9h0m.1 17.8h0m0-25h0m0 26.2h0m.4-3.6h0m0-27.8h0m1.2 29.3h0m.1-3.1h0m.3-18.8h0m0 27.6h0m.2-8.5h0m0-17h0m.1 23.7h0m.1-34.4h0m.1 1.6h0m.1 4.2h0m.3 6.8h0m1.8-6.3h0m.2 30.8h0m.1-28.2h0m.1 30.2h0m0-7.4h0m.1 2.3h0m.2-29.3h0m.1 24.7h0m1.5-29.7h0m.1 7h0m0-4.2h0m.1 32.4h0m.2-30.1h0m.3-5.4h0m.1 28.6h0m.2 3.2h0m0 4.1h0m.4-35.1h0m.3-.7h0m.1 3.9h0m.2 27.2h0m.1-24.7h0m.4 26.6h0m.7-4.5h0m.7-15.9h0m.1-2.4h0m.5-2.2h0m1.1 18h0m.1 3h0m.3-14.1h0m.2 13.8h0m.9-16.2h0m.5-2.3h0m.1 14.7h0m.3 4.2h0m.9-1.7h0m.2-22.2h0m0 5.4h0m.2 2h0m.1-11.3h0m.4 6.6h0m.1-4.9h0m.3 29.5h0m.8 1h0m0-3.3h0m.7-27.9h0m.8-2.3h0m0 35.3h0m0-2.6h0m.2-24.8h0m.1-2.6h0m.5 5.4h0m.5 26h0m.3-32.4h0m.1 29.9h0m.2-26.7h0m0 24.1h0m.1 5.5h0m.4-34.3h0m.8-.8h0m.7 29.7h0m.1-25.7h0m.1-3.7h0m.4 34.7h0m.1-2.6h0m.3-27.9h0m0 32.2h0m.1-28.9h0m.3-6.6h0m.7 .9h0m.8-3.6h0m.4 10.6h0m.1-13.4h0m.1 11h0m.1-3.1h0m.2 27.7h0m.1-29.9h0m1.3 26.9h0m.1-1.1h0m.1 5.3h0m0-3.4h0m.9 2.5h0m0-21.8h0m.7-2.3h0m.2 20.1h0m.1 6.2h0m0 .2h0m.2-28.5h0m.3 24.9h0m.2 1.6h0m.3-6.1h0m.6-15.9h0m.1-2.3h0m.5-1.2h0m.1 27.2h0m.1 .4h0m.4-6.6h0m0 1.8h0m.1 2.3h0m.5-21.2h0m.1-2.8h0m.2 22.8h0m.1-4h0m1.1 2h0m.1-20.8h0m.5 21.3h0m0 5.6h0m0-25.5h0m.2 17.7h0m0-14.5h0m.2 21.5h0m.6-24.7h0m.3 3.3h0m.4-2.9h0m.8 20.5h0m.8-.5h0m.1-15.6h0m.3-4.3h0m.1-5.2h0m.1 2.4h0m0-5.1h0m.1-3.1h0m0-.1h0m.3 28h0m0-14.5h0m.2 23h0m0 1.9h0m.1 2.2h0m.1-10.3h0m.2-25.3h0m0 22.4h0m.2 7.2h0m.1-19.8h0m.1-2.2h0m0-3.1h0m.2-7.3h0m.1-2.6h0m.1 .9h0m.3 6.4h0m1 30h0m.4 3.8h0m.2-40.9h0m.2 28.9h0m.3-30.5h0m.1 6.1h0m0-1.6h0m.1 4.5h0m.1 24.5h0m.1-22.8h0m.7 23.3h0m.3 2h0m0 1.7h0m0-5.7h0m1.2-27.1h0m.5 2.6h0m0-5.1h0m1 30h0m.2 1.4h0m.6 3h0m.1-30.4h0m.3 2.2h0m.2-4h0m1.2 24.2h0m.2 4.1h0m.1-1.8h0m1.4-23.8h0m.1 33.2h0m.2-36.3h0m.1 32.5h0m0-7.2h0m0-20.3h0m.1 18.5h0m0 5.2h0m.1-19.5h0m0 26.2h0m0-2.7h0m.2-1.7h0m.6-25h0m0-1h0m.1 21.4h0m.1-2h0m.1 4.5h0m0-26.9h0m1.1 7.9h0m.1 2.2h0m.3-7.1h0m.1 .2h0m.3 3.7h0m.4-9.5h0m.1 2h0m0 5.4h0m.3 5.3h0m.2-8.6h0m.2 26.5h0m.3-20.7h0m.1 18.6h0m.6-2.1h0m.1-23.5h0m.4 5.4h0m.2 1.8h0m.5-3.9h0m.1-3.1h0m.4 28.7h0m.8 2.3h0m.2 1.2h0m.1-5.1h0m0-20.4h0m.2 19.2h0m.4 5.5h0m.2-27.1h0m0-9h0m0 3.6h0m0 2.3h0m.2-4.9h0m.5 34.5h0m.8-3h0m.2 2.6h0m.3 1.7h0m.4-26.6h0m.1-2.7h0m.2-1.6h0m.1 24.4h0m.8-1.9h0m.7 7.1h0m.1-30.8h0m.1 28.9h0m.2-2.7h0m0 6.5h0m.4-27.4h0m.1-3h0m1.5 27.3h0m.3-26.3h0m.1 21.2h0m.1-18h0m.2 21.4h0m0-1.4h0m1.6 5.7h0m.1-2.3h0m.5 5.6h0m.1-1.2h0m0-12.5h0m0-14.6h0m0 17.2h0m.1-19.9h0m.2 22.2h0m.1-24.2h0m.1 20.6h0m.2 8.4h0m.3-3.4h0m.2-7.6h0m.9 9.8h0m.7-27.7h0m.3 2.1h0m.1-4.8h0m0 .1h0m.6 26.3h0m.7-5h0m.1 2.8h0m0-17.6h0m.2 21.7h0m.3-20.5h0m0 18.6h0m.3-22.6h0m.4 32h0m.1-6.3h0m.1 2.4h0m.2 1.9h0m.2-7.1h0m.2-4.6h0m.3 3h0m.5-23.2h0m.2 5.5h0m.4 19.8h0m.1-30h0m.3 24.8h0m0 2.3h0m.2 2.1h0m.2-26.9h0m0 6h0m.1-1.1h0m.4-2.9h0m.6 6.1h0m1.2 16.5h0m.2-15.8h0m.3 19.3h0m.1-28.2h0m0-3.8h0m0 1.5h0m.3 6.8h0m.1 2.3h0m1.5-6.4h0m0-.4h0m.2 4.6h0m0 25.8h0m0-27.8h0m.2-3.3h0m0 28.6h0m.6 3h0m.2-.6h0m.7-35.1h0m.1 32.9h0m.1-31.1h0m.2 3.3h0m.4-2.6h0m.2 5.8h0m.6 23.2h0m.5 5.3h0m.2-2.6h0m.2-32.8h0m.2 36.2h0m.5-32h0m.5-1.8h0m.2 3.7h0m.1 24.8h0m.1 4.8h0m.2-2.1h0m.5-28.3h0m0 30.6h0m.2-28.9h0m.1-6.6h0m.5-.9h0m1 31h0m.3-2.4h0m.3-17.4h0m.2 19.8h0m.1-22.3h0m.5-1.8h0m.3 1.3h0m.1 18.1h0m.9 2.4h0m.1-.4h0m0-2.9h0m.7-18.7h0m.3-3.9h0m.1 11.5h0m.2-9.9h0m0-4.2h0m.1-.6h0m.4 12.7h0m.6 15.4h0m.1 5.9h0m0-.7h0m.6-17.1h0m0-2.2h0m.3-2.1h0m.2-.9h0m.7 25.9h0m.1-6.5h0m0 4h0m.4-2.7h0m.2-24.1h0m0 3.6h0m.3 2h0m.9 21.5h0m.2 1.2h0m.1-27.4h0m.1-3.4h0m0 28.3h0m.3-3.3h0m1.1-22.8h0m.2 2.2h0m.4 26.8h0m.1-25.3h0m0 20.9h0m.2-25.8h0m0 .1h0m1 1.4h0m.4 22.7h0m.2-17.6h0m.1-5h0m.8 24.9h0m.6-4.5h0m.2-19.8h0m.3 27.3h0m.1-.1h0m.1-24.8h0m.2 22.2h0m.4-26.8h0m.1 21.7h0m.1-19.9h0m.1-4.5h0m.5-.7h0m0 1h0m0 6.4h0m0 17.7h0m.1 3.1h0m.2-5.1h0m.1-20h0m.8 26.9h0m.8-31.4h0m.6 2.5h0m.2 26.4h0m0-21.1h0m0-2.2h0m0 21.5h0m0 4h0m.2 5.7h0m.2-35.7h0m.2 34.7h0m.3-2.2h0m.1-25.7h0m.3-5.5h0m.2 32.7h0m0-2.8h0m.3-1.9h0m.2-2.1h0m.1-23.7h0m.3-2.6h0m1.3 .5h0m.2 1h0m.6 24.2h0m.2-21h0m.2 19.4h0m.4 3.8h0m.1 1.6h0m.3 .3h0m.1-1.6h0m.1 9h0m.3-12.2h0m.2 6.9h0m.3 3.3h0m0-29.3h0m.2 2.5h0m.1 1.7h0m.2-4.2h0m.7 24.6h0m.1-5h0m0 1.6h0m.1 2.2h0m.8-16.9h0m0-4.9h0m.1 21.4h0m.2 2.5h0m0-22.5h0m.3 17.3h0m0 4.9h0m.2-6.6h0m1.5-15.2h0m.1-2.9h0m0 26.5h0m.1-2.8h0m0-24.9h0m0 20.2h0m.2 7.3h0m.1-5.3h0m2.3-30.8h0m.1-2.3h0m.2 38.3h0m0-31.4h0m.1 4.5h0m.1 23h0m.1-25.6h0m0 31.5h0m1.1-31.1h0m.6-3.5h0m.2 31.1h0m.2-29.9h0m.3 27.2h0m.2 3.3h0m.7-35h0m.8 3.2h0m0-3.9h0m.2 6.6h0m.4 28.2h0m0-2.7h0m0 1.4h0m.4 2.3h0m.1-.6h0m.1-27.9h0m.6 4.9h0m0-2.1h0m.2-5.2h0m.1 27.2h0m.1-30.2h0m.2-2.2h0m.1 29.7h0m.9-17.7h0m.3 20.4h0m.1 9.6h0m.3-27.4h0m.1 25.4h0m.1-14.8h0m.2 2.7h0m0 2.3h0m.3 11.6h0m.1-6.1h0m0 1.7h0m1.3 1.6h0m.1-2.6h0m.1-2.6h0m.3-29.3h0m.1 36.9h0m.1-30h0m.1 20h0m0-29.4h0m0 .3h0m.1 24.5h0m.1-13.5h0m0 15.9h0m0-13.4h0m.2-9.5h0m.9 5.3h0m.2 2.6h0m.4 2.4h0m.4 11.9h0m0 6.9h0m.2-1.6h0m.4-20.4h0m.3-4.5h0m.3 22.1h0m0-30.1h0m.1 11.4h0m.3-5.5h0m.2 27.4h0m.1-1.8h0m.1-27.2h0m.2 .5h0m0-3.3h0m.3 32h0m.1 1.8h0m.1-25.2h0m0-2.9h0m.1-4.4h0m.8 27h0m.2-17.4h0m.2 19.8h0m.6 .7h0m.4-25.3h0m.1-2.5h0m.1-2.4h0m.1-.3h0m.6 7.5h0m.3 27.8h0m0-7.8h0m.3 9.9h0m.2-7.3h0m.7 2.2h0m.3-27.7h0m.1 2.7h0m.1-3.6h0m.1-2.9h0m1.1 30.1h0m.1-4.3h0m.1 1.8h0m.9 2.7h0m0-5.2h0m.1 9.2h0m.2-.6h0m0-.6h0m.1-33.6h0m.1 34.5h0m.1-6.1h0m.2-25.7h0m.2 2.7h0m2.2 25.3h0m0-4.4h0m.1-26.1h0m.1 28.9h0m0-27.9h0m.1 2.8h0m.7-5.6h0m1.2 2.3h0m.1 34.3h0m.1-34.2h0m.1 31.8h0m0-4.3h0m.6-21.3h0m.1-3.6h0m.8 26.2h0m.1-28.2h0m.3 23.5h0m.1 6.4h0m.2-26h0m.1 22.8h0m0-24.8h0m.1 4.5h0m.7 22.3h0m.4-4.9h0m.2 3.2h0m.1 3.1h0m.2 2.2h0m1.1-3.4h0m.2-20.7h0m.1 16.5h0m.1 5.6h0m0-18.4h0m.1-2.4h0m.7 24.3h0m.5-21.9h0m.2-2.6h0m.4-1.7h0m.6 21.6h0m.1-4.6h0m.1 2.8h0m.3 2.2h0m.7-29.1h0m.2-4.7h0m.2 9.2h0m.2 30h0m.1-26.3h0m.1 24.1h0m0-25.4h0m0-5.6h0m.1-8.4h0m.1 31.7h0m.6-26.9h0m.2 32.7h0m.2-24.9h0m.1-4.3h0m0 26.2h0m.2-32.7h0m.9 7.9h0m.1 30.3h0m.1-.8h0m.1-3.1h0m0-25h0m0 23.3h0m.2-27.5h0m.4 1.5h0m.5 27.6h0m.3-28.7h0m.3 31.7h0m.3-6.1h0m0 7.1h0m.1-27.8h0m.2-3h0m1 29.6h0m.1 .9h0m0-3.3h0m.1-34.3h0m.1 30.9h0m.8-29.8h0m.2 7.4h0m0-7.5h0m.4 2h0m.2 25.6h0m.8 1.9h0m0-21.7h0m.1 2.4h0m.1-6.5h0m.2 2h0m.8-3.6h0m.5 5h0m.3-2.3h0m0 19.5h0m0-24.3h0m.1 .2h0m.2 12.1h0m.2 18.1h0m0-4h0m.1-17h0m.3 19.3h0m.7-16.1h0m.6-2.7h0m.1 19h0m.4-18.3h0m.1 15.7h0m.2-2.2h0m.6 4.7h0m.6 .1h0m.1-2.9h0m.2 4.9h0m.4-24.6h0m.2 4h0m.1-2.7h0m1 22.2h0m.3 5.3h0m0-7.5h0m.1 4.8h0m0-27h0m.4 29.9h0m0-25.2h0m.4-.8h0m.3-2.5h0m.5 .3h0m.2 30.4h0m.3-2.9h0m0-28.8h0m.1 31.1h0m0-5.1h0m.4-2.9h0m.7 10.4h0m.1-9.4h0m.4 8.6h0m.2-5.9h0m.2 4.4h0m.3-33.9h0m.2 6.4h0m.2-4.9h0m.6 2h0m.3 30h0m.1-2.2h0m.3-2h0m.2 5.8h0m0-8.8h0m.1 10h0m1-29.9h0m0-4.4h0m.1 1.9h0m.7 27.6h0m.3-2.9h0m.6-26.5h0m.1 28.1h0m.1-23.9h0m.4 27.5h0m0-5.3h0m0-30.7h0m.1 33.3h0m0-35.2h0m.4 7.8h0m.1 22.5h0m.4 10.9h0m0-39.1h0m0 2h0m.1 36.4h0m1.2-36.3h0m0 25.7h0m.2-23.1h0m0 27.3h0m.3-1.9h0m.2 2.5h0m.4-33h0m.3-.5h0m.6 5.9h0m.2 26.1h0m0-28.6h0m.5 25.9h0m.1 2.8h0m1.2-19.8h0m.3-2.6h0m.1 17h0m.1-19.6h0m.1 25.1h0m.1-2.3h0m0 1.4h0m.8-25.1h0m.1-4.4h0m.3 10.5h0m.2-8.8h0m0 5.1h0m.1-6.8h0m.2 8.4h0m.2 5.5h0m.6 12.6h0m.2-3.1h0m.3-16.2h0m.3 19.8h0m.1-13.8h0m.1-2.3h0m1.3 1.8h0m.3-2.7h0m.2 16.9h0m.3 1.6h0m.1-18.7h0m.2 14.8h0m1.6 1.9h0m0 2h0m.1-22.5h0m.3 25.5h0m.2 .7h0m.1-24h0m.1 25.1h0m.1 .3h0m.1-23.2h0m.3 20.7h0m.2-3.1h0m.1 6.5h0m1-32h0m.2-.9h0m.2 33h0m.2-29.6h0m.1 23.3h0m.1 2.3h0m.9-28.5h0m.1-2.5h0m.3-.2h0m.1 5.6h0m.8-4.1h0m.4 33.5h0m.2 2.6h0m.1-34.1h0m.3 35.1h0m.1-40.4h0m.2 30.4h0m.1 4.4h0m0-34.3h0m1 27.1h0m0 8.2h0m.1-4.6h0m0 .5h0m.4-2h0m.3-24.1h0m.1 2.3h0m.1-3.2h0m.4 24.2h0m.7-4.4h0m.1 3.4h0m.3-20.3h0m.4 24.1h0m.4 2.2h0m0-9.5h0m0-14.1h0m.3-4.7h0m0 21.2h0m0 11.6h0m.1-8.8h0m.5 7.3h0m1.4-28.5h0m0-1.7h0m.1 5.7h0m.1-2h0m.5 25.7h0m0 2h0m.2-2.7h0m.1-2.9h0m.1-2.8h0m1.6-22.4h0m.1-.9h0m0 4.4h0m.4 23.2h0m.2-2.7h0m.1 1.3h0m2.1-2.5h0m.1-22.1h0m.4 26.9h0m.1-24.3h0m.2-4.3h0m.2 27.9h0m.1-1.6h0m1.5-18.7h0m.1-1.6h0m.1-3.2h0m.2 27.8h0m.3-27.9h0m.3 26h0m.1-4.8h0m.3 1.8h0m2-22.9h0m.3-1.5h0m.1 26.2h0m.1-28.7h0m0-1.2h0m.3 25.6h0m1.1-31.8h0m.2 10h0m.1-10h0m.1 12.5h0m.4-10.1h0m0 2.6h0m.5 27.1h0m0 5.4h0m.1-2.3h0m0 3.3h0m.1 2h0m.1-33.7h0m.2 3.7h0m.4 2.3h0m.2-4.8h0m.1-1.2h0m.1 28.6h0m0-3.5h0m.4 2.2h0m0 3.1h0m.2-32.6h0m.2 4.9h0m.1-2.2h0m.7-4.1h0m.6 33.2h0m.3-1.1h0m0-5h0m.1-25.6h0m.2 27.7h0m.1-24.3h0m.4 .7h0m.1 3.4h0m.9 14.4h0m.3 5.8h0m.2-27.9h0m.3 1.5h0m0-4.4h0m0 28.9h0m.2-19.7h0m.3-2.4h0m0 7.9h0m1.7 15.8h0m0-5.3h0m.3-14.5h0m.1-.7h0m0 2.9h0m0 14h0m.6-11.9h0m.5-3.7h0m.3 17.7h0m.5-19h0m.2 18.3h0m.1-2.7h0m.2-12.6h0m1.2 16.9h0m.3 2.7h0m.1 7.1h0m.1 1.5h0m0-3.2h0m.3-2.9h0m.1-28.5h0m.1-4.2h0m0 9.6h0m0-2.7h0m.3-2h0m.2 28.8h0m.2 4.5h0m.4-1.5h0m.2 0h0m.3-7.8h0m.6 2.5h0m.2-2.1h0m.4 3.9h0m.6-1.1h0m.2-27.9h0m0-2h0m.3-1.2h0m1.1 31.4h0m.2-35.7h0m.1 34.9h0m.3-29.1h0m.3-5.5h0m.5 32.6h0m.1-29.5h0m.1 6.2h0m.8 .4h0m.1-6.6h0m.4 .8h0m.3 27.3h0m.1-19h0m.1-6.1h0m.2-4.1h0m.3 37.7h0m0-5.7h0m.3 1.6h0m1.8-25.5h0m.2-1.9h0m.2 21h0m.2 1.5h0m.2 2.7h0m.5-20h0m1.1 21.2h0m.1-2h0m.5-19.7h0m.2 22.5h0m0-25.1h0m.2-4.7h0m0 2h0m.1 22.3h0m0-28.9h0m1 34h0m1.2-3h0m.1-19.4h0m.2 2.8h0m.2-4.7h0m.4-3.5h0m.6 24.3h0m.2 2.5h0m.1-23.1h0m.2 2.2h0m.1-4.2h0m.3 28.3h0m.2-.9h0m0-27.8h0m1.6 4.6h0m.2-.8h0m.3 3h0m.1 14.4h0m.1 3h0m.3 2h0m0 1.6h0m.4-19.7h0m.6-4.5h0m.5 2.4h0m.2 24.5h0m.2-6.1h0m.1 7.1h0m.7-4.4h0m.4-4.5h0m.8-24.8h0m0 5.7h0m0-5.1h0m.2 2.7h0m.3 26.3h0m.3-3.5h0m0-2.5h0m.1-22h0m.4-1.8h0m0 31.1h0m.2-33.9h0m.3 31.5h0m0-1.5h0m0-34.6h0m.3 1.7h0m.2 38.3h0m.2-7.8h0m1-26h0m.4 1h0m0 31.2h0m.4-28.6h0m.2 23.2h0m.2 2.8h0m.1 2.2h0m.5-7.2h0m.3-23h0m.2-.8h0m.2 2.2h0m.1-6.4h0m1.2 4.5h0m.1 5.3h0m.1 22.8h0m.1-31.3h0m0 24.6h0m.2 4.7h0m0-22.6h0m0-9h0m.1 .6h0m0 35.5h0m.2-6.9h0m.4-16.3h0m.6-4.6h0m.2 16h0m0-18.6h0m.1-3h0m.1-.7h0m.4 31.4h0m0-3.1h0m0 7.1h0m.1-10.1h0m0 9h0m1.3-25h0m.6 22.5h0m.1-20.9h0m0 1.9h0m.1 13.8h0m.2 7.9h0m.1-4.5h0m.1 8.4h0m1.1-27.2h0m.2-2.6h0m.1 20.7h0m0-1.2h0m.3 5.9h0m.1-27.5h0m.1 30.6h0m.2-1.1h0m.8-38.5h0m.6 9.5h0m0-5.6h0m.4 2.9h0m.2-5.8h0m0 35.1h0m.3-36.2h0m.1 35.3h0m.2-3.2h0m.8-24h0m.2-2.8h0m.3 30.8h0m.2-2.5h0m.5-27.1h0m.1 25.1h0m.9-22.6h0m0-3.4h0m.4 31.3h0m.3 4.7h0m.4 .3h0m.1-8.9h0m.7 6.7h0m0-35.2h0m.1 1.2h0m0 2.1h0m.6 1.8h0m.6 88.5h0m.3-35.3h0m0 35.9h0m.2-31.9h0m.2 25.7h0m.1-28.5h0m.1 30.4h0m.3-29.8h0m.1 6h0m0 24.1h0m.2-27.6h0m0 2.2h0m.4 23.9h0m.1 2.3h0m.3-30.9h0m1.6 29h0m.1 7.9h0m.2-9.1h0m0 8.2h0m.4-33.4h0m.1-4h0m0 33.3h0m.1-31.6h0m1.5 25.8h0m0 5.5h0m0-.6h0m.1-27.7h0m.4 26h0m.1-27.6h0m.1-1h0m1.1-.5h0m.3 1.7h0m0 2.5h0m.1 21.4h0m.1-25.9h0m.4 32.8h0m.3-8.2h0m0 11h0m0-5.1h0m.1-30.6h0m0 1.1h0m0 34.9h0m.5-32h0m1.5 24h0m.1-2.9h0m.6 2.2h0m.1-16.6h0m.1-4.6h0m.4-1h0m.3 2.9h0m.7 15.5h0m.4-2.6h0m.3 4.3h0m.3-17.2h0m.1-.6h0m.1 2.9h0m.4 18.6h0m.4 3.3h0m.1 1.9h0m.2-10.5h0m.2 2.9h0m0-21.3h0m.5-1.9h0m.2 6.7h0m.2 23.2h0m.2-24.8h0m0 18.3h0m.1-23.1h0m.3 29.2h0m0-2.1h0m.1-2.2h0m1.5-24.3h0m0-1.7h0m.2 26.4h0m0-21.1h0m.7 26.3h0m.5-32.4h0m0 2.2h0m.1-5.9h0m0 33.8h0m.2-35.9h0m0 9.9h0m.7-9.4h0m.3 30.7h0m.2 4.6h0m.4-2.3h0m1.2-31.9h0m.1 2.8h0m.1 35.5h0m.1-7.1h0m.2 1.7h0m0-27.2h0m.1 35.3h0m.3-41.5h0m0 37h0m.1-38.9h0m1 34.7h0m.3-2.9h0m.2-25.5h0m.1 3.5h0m.4 21.3h0m.3 .8h0m0-19.3h0m.3 15.2h0m.1-19.7h0m.6 2.7h0m.5 6h0m.3-4.9h0m.1 1.7h0m.9 14.2h0m.5 4.7h0m.2-1.9h0m.9-19.6h0m0-.7h0m.6-5h0m.1 3.1h0m.5 6.3h0m.3 22.5h0m0-.1h0m.1-26.5h0m.6-1h0m0 24.7h0m.2-21h0m.8 19.8h0m.3 2.5h0m0 2.5h0m.1 .1h0m.7-28.4h0m.3-4.8h0m.1 8.3h0m0-2.1h0m0-10.2h0m.1-1.8h0m.1 0h0m.3 8.2h0m1-1.5h0m0 27.2h0m0-31h0m.2 1.6h0m0 35h0m.1-27.9h0m0 24.2h0m.2 6.1h0m0 0h0m.7-32.7h0m1-3.1h0m.4 1.8h0m.1 34.1h0m0-3h0m.1-2.5h0m0-25.2h0m.5 22.9h0m0 7.6h0m1.5-33.3h0m.2 2.3h0m0-9.1h0m.2 4.9h0m.2 28.4h0m.2-4.9h0m.4-26.6h0m.1 29.1h0m.8-26.8h0m.4 4.4h0m.2-3.6h0m.9 24.8h0m.1-22.1h0m.5 26.5h0m0-1.7h0m.7-27.8h0m.2 24.4h0m.2 9.6h0m0-38.8h0m.1 31.7h0m.5 5h0m.1 2.1h0m.2-5.3h0m.3-3.5h0m.2-26.7h0m.2 29.4h0m.2 1.5h0m.2-31.7h0m.1 25.3h0m.1-19.6h0m.1-3.9h0m.1 4.5h0m.2 18.5h0m.8 4.8h0m.1-21.6h0m0 19.5h0m1-23.6h0m.6 21.4h0m.1 4h0m.5-2.4h0m.4-19h0m.3 1.9h0m.3 1.9h0m.5 13.1h0m0 2.9h0m.8-19.1h0m.1 2.7h0m0 17.7h0m.6 2h0m.2-16.8h0m.1-4.9h0m0 24.1h0m.8 1.4h0m.2-9.6h0m.2 2.1h0m.4-23.1h0m0 29.3h0m.1-24.2h0m.1 3.4h0m0-13.6h0m.5 29.1h0m0-26.6h0m.1 28.8h0m.5 3.1h0m.4-25.1h0m0-1.9h0m.8 23.9h0m.1-25.1h0m.6 32.4h0m.3-4.6h0m.7 2.2h0m.1 3.4h0m.4-2.1h0m.4-35.1h0m.3 5h0m0-5.8h0m.2 3h0m.5 30.4h0m.5-3.9h0m0 6.6h0m0-4.2h0m.2 7.3h0m.5-37.7h0m.9 27.5h0m.2-31.6h0m.2 .5h0m.1 6.8h0m0 21.9h0m.3 4.6h0m.5 .8h0m.4-25.3h0m.4 19.8h0m.1-22.2h0m.1 27.2h0m.3-33.3h0m.2 3.2h0m.1-1.8h0m.2 32.8h0m.6-8.7h0m.1 5.1h0m.1-23h0m.1 21.7h0m.4-18.2h0m.4-1.8h0m.7 17.1h0m.2 3.5h0m.1-23.7h0m.2 23.8h0m.3-20.3h0m.2-2.3h0m.2 0h0m.2 5.2h0m.6 21h0m.1 2.4h0m.1-7.9h0m.1 2.7h0m.2 7.8h0m.6-.9h0m.3-32.7h0m0 3.7h0m0 23.8h0m.1-26.3h0m.1 31.5h0m.1-7.4h0m.1 5.4h0m1.3-27.8h0m1.8 22.1h0m.1-24.1h0m0 29.8h0m0-34h0m.1 3.5h0m.6 4.7h0m0-2.6h0m.3-7.2h0m.1 4.1h0m.9-2.5h0m.1-2.1h0m.1 29.8h0m.2-22.6h0m.1-2.7h0m.1 4.5h0m.8 23.7h0m0-26.3h0m.1 26.1h0m.1-4.5h0m.1 5.5h0m.1-31.3h0m.2-4.1h0m0 7.1h0m.2-4.7h0m.1 8.8h0m.1 19.5h0m.2 1.9h0m.5 6.2h0m1.2-30h0m.2 23.6h0m0-21.4h0m.4-3.4h0m.3 26.6h0m.1-21.2h0m.3-5.2h0m.1 22h0m.3-18.6h0m1.5-2.8h0m.3 26.8h0m0-29.4h0m.7 .3h0m.2 27.5h0m0-2.3h0m.5 7.7h0m.6-30.1h0m.2 22.4h0m.1-25.2h0m.1-.7h0m.2 27.7h0m.3 5.8h0m.2-2.3h0m.7-25.3h0m.1-5.3h0m.3 3h0m.2-8.4h0m0 2.9h0m.7 9.3h0m.3 18.4h0m.2-.9h0m.4-1.7h0m.6 .4h0m0-15.6h0m.1 13.5h0m0 5.2h0m.4-17.1h0m.2 2.3h0m.1 15.2h0m1-2.6h0m.2 2.3h0m.1 7.5h0m.2-4.8h0m.1 2.8h0m1-26.4h0m.1 5.8h0m.2-3.2h0m.9 27h0m0 1.7h0m.4-6.6h0m.1 1.9h0m.1 6.1h0m0-10.8h0m.3-21.6h0m.1 4.2h0m.4-2.5h0m.4-2.2h0m.5 23.7h0m.5 4h0m.2-2.5h0m0-28.9h0m.2 1h0m.8-2.3h0m.1 34.5h0m.2-37.3h0m.5 5.3h0m.9 29.6h0m.2-1.4h0m.3-29.7h0m.1-2.3h0m.3 29.7h0m0-31.3h0m1.2 37.6h0m.1-9h0m0 6.3h0m.5-.2h0m.1-3.2h0m.2-24.8h0m.9-3.7h0m.2 22.4h0m.1-21.1h0m.1 26.4h0m.3-5.8h0m.5-19.9h0m.1-1.9h0m0 26.2h0m.1 .3h0m.2-22.8h0m0 19.4h0m.6-25.4h0m.5 25.1h0m.4 2.6h0m.1 .1h0m1-20.8h0m.1-2.7h0m0-4.7h0m.1-.8h0m.2 11.1h0m1.2 19.5h0m.2-3.6h0m.1 2.6h0m1 8.8h0m.2-10.7h0m.4-23h0m0 30.5h0m0-27.1h0m.3 29.4h0m.1-26.4h0m.1 21.8h0m0-27.5h0m1 28.3h0m.4-1.5h0m.4-22.8h0m.1 20.9h0m0-25.8h0m0 2.9h0m.1-3.3h0m.1 23.5h0m1.5 10h0m0-3.5h0m.3-7h0m0 4.6h0m.1-23.5h0m.6 1.2h0m0 19.9h0m0-17.4h0m1 14h0m.9 3.4h0m.2-17.8h0m.1-2.3h0m.1 23.4h0m.6-24.2h0m.8-5.1h0m0 29.5h0m.3-23.3h0m0 21.7h0m.2-24.6h0m.8 29.8h0m.4-29.6h0m.3 1.7h0m.2 22.8h0m.1-26h0m.4 28.2h0m0 1.4h0m1.8-2h0m.1-2.5h0m0-25.8h0m.1 27.8h0m.1-23.6h0m0-1.7h0m.6-3.8h0m.1 .7h0m.5 2h0m2 27.2h0m0-1h0m.2-2.8h0m.2-30.1h0m.2 6.2h0m.5 2.3h0m.1 2.3h0m.4 20.6h0m.2-4.2h0m.8 7.8h0m.5-7.8h0m.1 1.9h0m.1-30.9h0m.2 31.8h0m.6-31.5h0m0 6.1h0m.1 2.5h0m.2 3h0m.3-8.5h0m0 10.4h0m0 2.1h0m0 13.5h0m.3 3.1h0m.5-1.4h0m.9-21.9h0m.4 27.5h0m.1-3.4h0m.1 3.6h0m.3-25.6h0m.2 2.8h0m.1-5.7h0m1.9-.7h0m.3-.5h0m.5 27.2h0m.1 4.6h0m0-29.3h0m1-3.7h0m.1 35.8h0m.5-38.3h0m.1 5.4h0m.3 23.4h0m.1-28.6h0m.2 38h0m0-1.4h0m.4-2.4h0m.2-1.7h0m.7 1.8h0m1.1-38.6h0m.1 9.9h0m.1-5h0m.1-2.7h0m.1 31.6h0m.2-27.2h0m.5 24.4h0m.2-19.9h0m.2-10.7h0m.4 27.6h0m.1-29.1h0m.3 4.9h0m.1 27.8h0m.2-28.3h0m0 5.1h0m1.2-6h0m0 2h0m.1 6.2h0m.1-5.6h0m.1-3.5h0m.3 25.4h0m.2 1.9h0m.3-15.1h0m0 20.3h0m0 4.5h0m.1-6.9h0m.2-24.6h0m0 29.1h0m1.3-26.1h0m.1 2.1h0m.5-2.7h0m.1 4.9h0m.1 15.1h0m.3 2.2h0m.6 2.5h0m0 .5h0m.5-29.3h0m.1 2.1h0m.5 5.5h0m.3 2.5h0m0-10.8h0m.3 5.4h0m.1 24.4h0m.1-4h0m.4 5.2h0m0-3h0m.1-18.4h0m.2 2.6h0m.2-10.2h0m.1 4.5h0m.1 1.6h0m.4 21.6h0m.1-1.9h0m.7-20.1h0m.1 2.4h0m.5-3.4h0m0 25.4h0m1.1-23.9h0m.1 2h0m.1 22.5h0m.1-25.3h0m.1 23.8h0m.2-2.4h0m.3 8h0m1.1-28.1h0m.1-7h0m.1 27.7h0m0 2.9h0m.2-35.4h0m.1 6.1h0m.1 2.2h0m0 25.7h0m.1-19.8h0m.5-12.5h0m.1 39.7h0m1-7.3h0m.5-2.5h0m0-23.9h0m.1 28.3h0m0-23.3h0m.3 26.1h0m.6-28.6h0m.5-8.1h0m1 1.4h0m.1 29.7h0m.3-25.4h0m.1 29.2h0m.1-1.1h0m.5-29.8h0m.7 28.1h0m.2 2.6h0m.1-5.8h0m.8-28.1h0m.1 1.3h0m.6 1.7h0m.6 28.9h0m.6-4.9h0m.2-2.1h0m.9-21.8h0m.6 3.2h0m.2-2.1h0m.4 28.7h0m.1-5.2h0m.4-29h0m.1 1.9h0m0 33.2h0m.1-9.4h0m0-28.9h0m0 34.3h0m0-27.1h0m0-7h0m.5 9.2h0m.3 3h0m1 30.6h0m.1-4.5h0m.2-2.2h0m0-5.3h0m0 10.1h0m.2-12.1h0m0-17h0m.3 21.1h0m.1-15.2h0m.6-3h0m1 20.4h0m0 .5h0m.2-5.5h0m.4 2.3h0m1.1-25.1h0m.1 2.1h0m0 2.3h0m0-7.7h0m.6-.6h0m.1 36.7h0m.3-.3h0m.1-5.6h0m.2 3.2h0m0-26.9h0m.2-5.3h0m.5-2.3h0m.2 5.7h0m.1-8.7h0m.6 11.6h0m.3 25.9h0m.3-2.7h0m.1-2.1h0m.6-22.9h0m0-3h0" stroke="#000" stroke-width="3.3" stroke-linecap="round" fill="none"/>
<path d="M629.5 660.4h6l-3 5.8z" fill="#ffa500" stroke="#ffa500" stroke-width="0.6"/>
<path d="M1280.2 660.4h6l-3 5.8z" fill="#ffa500" stroke="#ffa500" stroke-width="0.6"/>
<rect x="105.5" y="499.1" width="1255.5" height="48.6" fill="#f00" fill-opacity="0.1"/>
<rect x="162.0" y="505.1" width="950.1" height="16.8" fill="#ffa500" fill-opacity="0.15"/>
<rect x="1112.1" y="564.9" width="191.0" height="16.8" fill="#ffa500" fill-opacity="0.15"/>
<path d="M160.6 513.5H1113.5" stroke="#ffa500" stroke-width="3" fill="none"/>
<path d="M1110.6999999999998 573.3H1304.5" stroke="#ffa500" stroke-width="3" fill="none"/>
<path d="M105.5 523H1361" stroke="#f00" stroke-width="2.08" fill="none"/>
<path d="M162.2 666.1V380.5" stroke="#800080" stroke-width="2.08" stroke-dasharray="2.08 3.44" fill="none"/>
<path d="M1112.1 666.1V380.5" stroke="#800080" stroke-width="2.08" stroke-dasharray="2.08 3.44" fill="none"/>
<path d="M1303.1 666.1V380.5" stroke="#800080" stroke-width="2.08" stroke-dasharray="2.08 3.44" fill="none"/>
</g>
<rect x="105.5" y="380.5" width="1380.0" height="286.0" fill="none" stroke="#000" stroke-width="1.1"/>
<path d="M162.5 666.5v5.4M371.5 666.5v5.4M580.5 666.5v5.4M788.5 666.5v5.4M997.5 666.5v5.4M1206.5 666.5v5.4M1415.5 666.5v5.4" stroke="#000" stroke-width="1.1" fill="none"/>
<text x="157.9" y="687.1" font-size="14.5" textLength="8.8" lengthAdjust="spacingAndGlyphs">0</text>
<text x="353.7" y="687.1" font-size="14.5" textLength="35.0" lengthAdjust="spacingAndGlyphs">2000</text>
<text x="562.6" y="687.1" font-size="14.5" textLength="35.0" lengthAdjust="spacingAndGlyphs">4000</text>
<text x="771.4" y="687.1" font-size="14.5" textLength="35.1" lengthAdjust="spacingAndGlyphs">6000</text>
<text x="980.3" y="687.1" font-size="14.5" textLength="35.1" lengthAdjust="spacingAndGlyphs">8000</text>
<text x="1184.8" y="687.1" font-size="14.5" textLength="43.9" lengthAdjust="spacingAndGlyphs">10000</text>
<text x="1393.7" y="687.1" font-size="14.5" textLength="43.8" lengthAdjust="spacingAndGlyphs">12000</text>
<path d="M105.5 395.5h-5.4M105.5 451.5h-5.4M105.5 507.5h-5.4M105.5 563.5h-5.4M105.5 619.5h-5.4" stroke="#000" stroke-width="1.1" fill="none"/>
<text x="65.0" y="400.0" font-size="14.5" textLength="30.8" lengthAdjust="spacingAndGlyphs">6.24</text>
<text x="65.0" y="456.4" font-size="14.5" textLength="30.8" lengthAdjust="spacingAndGlyphs">6.22</text>
<text x="65.0" y="512.8" font-size="14.5" textLength="30.8" lengthAdjust="spacingAndGlyphs">6.20</text>
<text x="65.0" y="568.8" font-size="14.5" textLength="30.8" lengthAdjust="spacingAndGlyphs">6.18</text>
<text x="65.0" y="624.8" font-size="14.5" textLength="30.8" lengthAdjust="spacingAndGlyphs">6.16</text>
<text x="707.2" y="372.0" font-size="17.4" textLength="88.0" lengthAdjust="spacingAndGlyphs">Magnitude</text>
<text x="800.5" y="372.0" font-size="17.4" textLength="82.0" lengthAdjust="spacingAndGlyphs">Estimates</text>
<text x="614.8" y="656.8" font-size="14.5" textLength="44.0" lengthAdjust="spacingAndGlyphs">10536</text>
<text x="1184.4" y="636.8" font-size="14.5" textLength="44.0" lengthAdjust="spacingAndGlyphs">51529</text>
<rect x="1365.3" y="387.5" width="113.3" height="47.8" rx="2.8" fill="#fff" fill-opacity="0.8" stroke="#ccc" stroke-width="1.1"/>
<path d="M1369.1 399.1h30.9" stroke="#ffa500" stroke-width="2.8" fill="none"/>
<path d="M1369.1 422.0h30.1" stroke="#f00" stroke-width="2.08" fill="none"/>
<text x="1409.9" y="404.0" font-size="14.5" textLength="30.3" lengthAdjust="spacingAndGlyphs">mag</text>
<text x="1439.8" y="407.0" font-size="10.2" textLength="31.6" lengthAdjust="spacingAndGlyphs" font-style="italic">OBSID</text>
<text x="1409.6" y="426.9" font-size="14.5" textLength="30.0" lengthAdjust="spacingAndGlyphs">mag</text>
<rect x="1348.4" y="613.5" width="130.2" height="45.5" rx="2.8" fill="#fff" fill-opacity="0.8" stroke="#ccc" stroke-width="1.1"/>
<path d="M1367.4 626.5h0" stroke="#ffa500" stroke-width="3.6999999999999997" stroke-linecap="round"/>
<path d="M1367.4 647.3h0" stroke="#000" stroke-width="3.6999999999999997" stroke-linecap="round"/>
<text x="1393.2" y="629.9" font-size="14.5" textLength="80.1" lengthAdjust="spacingAndGlyphs">Highlighted</text>
<text x="1393.2" y="650.8" font-size="14.5" textLength="19.9" lengthAdjust="spacingAndGlyphs">OK</text>
<g clip-path="url(#c2)">
<path d="M105.5 758.5H1485.5M105.5 791.5H1485.5M105.5 823.5H1485.5M105.5 856.5H1485.5M105.5 889.5H1485.5M105.5 921.5H1485.5M105.5 957.5H1485.5M105.5 983.5H1485.5M105.5 1009.5H1485.5" stroke="#b0b0b0" stroke-width="1.1" stroke-dasharray="1.11 1.83" fill="none"/>
<path d="M163 1008.8H1304" stroke="#000" stroke-width="3.3" stroke-linecap="round" fill="none"/>
<path d="M166.7 1007.7h0m88.3 .6h0m27.8-.1h0m42.9-.5h0m12.4 .5h0m19.6-.2h0m76.2-.7h0m13.4 .6h0m13.7 .6h0m2.7-.5h0m86.3-.4h0m20.1 .5h0m7.4-.7h0m46.5 .6h0m46.7-.6h0m14.4 .2h0m3.1 0h0m5.9 .8h0m7.9-1.1h0m2.5 0h0m5.8 .4h0m19.4-.3h0m9.7 .4h0m5.8 .6h0m46.2-.2h0m5.2 0h0m43-.7h0m37 .6h0m5.8-.3h0m1 .3h0m12.7 .1h0m35.2 0h0m5.9-.1h0m81.7-.6h0m30.3 .3h0m10.4-.1h0m10.7-.2h0m54.7 .9h0m82-1.1h0m34 .2h0m19.4 .2h0m15.5-.2h0m4.7 0h0m10.1 .1h0m3.2-.3h0" stroke="#000" stroke-width="3.3" stroke-linecap="round" fill="none"/>
<path d="M105.5 954.5H1485.5" stroke="#000" stroke-width="1.2" fill="none"/>
<path d="M162.2 1009.3V725.5" stroke="#800080" stroke-width="2.08" stroke-dasharray="2.08 3.44" fill="none"/>
<path d="M1112.1 1009.3V725.5" stroke="#800080" stroke-width="2.08" stroke-dasharray="2.08 3.44" fill="none"/>
<path d="M1303.1 1009.3V725.5" stroke="#800080" stroke-width="2.08" stroke-dasharray="2.08 3.44" fill="none"/>
</g>
<rect x="105.5" y="725.5" width="1380.0" height="286.0" fill="none" stroke="#000" stroke-width="1.1"/>
<path d="M162.5 1011.5v5.4M371.5 1011.5v5.4M580.5 1011.5v5.4M788.5 1011.5v5.4M997.5 1011.5v5.4M1206.5 1011.5v5.4M1415.5 1011.5v5.4" stroke="#000" stroke-width="1.1" fill="none"/>
<text x="157.9" y="1032.1" font-size="14.5" textLength="8.8" lengthAdjust="spacingAndGlyphs">0</text>
<text x="353.7" y="1032.1" font-size="14.5" textLength="35.0" lengthAdjust="spacingAndGlyphs">2000</text>
<text x="562.6" y="1032.1" font-size="14.5" textLength="35.0" lengthAdjust="spacingAndGlyphs">4000</text>
<text x="771.4" y="1032.1" font-size="14.5" textLength="35.1" lengthAdjust="spacingAndGlyphs">6000</text>
<text x="980.3" y="1032.1" font-size="14.5" textLength="35.1" lengthAdjust="spacingAndGlyphs">8000</text>
<text x="1184.8" y="1032.1" font-size="14.5" textLength="43.9" lengthAdjust="spacingAndGlyphs">10000</text>
<text x="1393.7" y="1032.1" font-size="14.5" textLength="43.8" lengthAdjust="spacingAndGlyphs">12000</text>
<path d="M105.5 758.5h-5.4M105.5 791.5h-5.4M105.5 823.5h-5.4M105.5 856.5h-5.4M105.5 889.5h-5.4M105.5 921.5h-5.4M105.5 957.5h-5.4M105.5 983.5h-5.4M105.5 1009.5h-5.4M105.5 970.5h-3.3M105.5 996.5h-3.3" stroke="#000" stroke-width="1.1" fill="none"/>
<text x="87.0" y="1013.9" font-size="14.5" textLength="8.8" lengthAdjust="spacingAndGlyphs">0</text>
<text x="87.0" y="987.9" font-size="14.5" textLength="8.8" lengthAdjust="spacingAndGlyphs">5</text>
<text x="78.2" y="961.9" font-size="14.5" textLength="17.6" lengthAdjust="spacingAndGlyphs">10</text>
<text x="15.4" y="926.8" font-size="14.5" textLength="28.9" lengthAdjust="spacingAndGlyphs">OBS</text>
<text x="48.7" y="926.8" font-size="14.5" textLength="22.7" lengthAdjust="spacingAndGlyphs">not</text>
<text x="75.8" y="926.8" font-size="14.5" textLength="20.0" lengthAdjust="spacingAndGlyphs">OK</text>
<text x="52.0" y="894.8" font-size="14.5" textLength="14.5" lengthAdjust="spacingAndGlyphs">dr</text>
<text x="70.9" y="894.8" font-size="14.5" textLength="11.6" lengthAdjust="spacingAndGlyphs">&gt;</text>
<text x="87.0" y="894.8" font-size="14.5" textLength="8.8" lengthAdjust="spacingAndGlyphs">5</text>
<text x="38.2" y="861.8" font-size="14.5" textLength="25.8" lengthAdjust="spacingAndGlyphs">Ion.</text>
<text x="68.4" y="861.8" font-size="14.5" textLength="27.4" lengthAdjust="spacingAndGlyphs">rad.</text>
<text x="26.8" y="828.8" font-size="14.5" textLength="27.2" lengthAdjust="spacingAndGlyphs">Sat.</text>
<text x="58.5" y="828.8" font-size="14.5" textLength="37.3" lengthAdjust="spacingAndGlyphs">pixel.</text>
<text x="33.0" y="796.8" font-size="14.5" textLength="22.9" lengthAdjust="spacingAndGlyphs">not</text>
<text x="60.3" y="796.8" font-size="14.5" textLength="35.5" lengthAdjust="spacingAndGlyphs">track</text>
<text x="16.5" y="763.8" font-size="14.5" textLength="22.8" lengthAdjust="spacingAndGlyphs">not</text>
<text x="43.7" y="763.8" font-size="14.5" textLength="52.1" lengthAdjust="spacingAndGlyphs">Kalman</text>
<text transform="translate(68.6,990.6) rotate(-90)" font-size="14.5" textLength="13.5" lengthAdjust="spacingAndGlyphs">dr</text>
</svg>
</body></html>
